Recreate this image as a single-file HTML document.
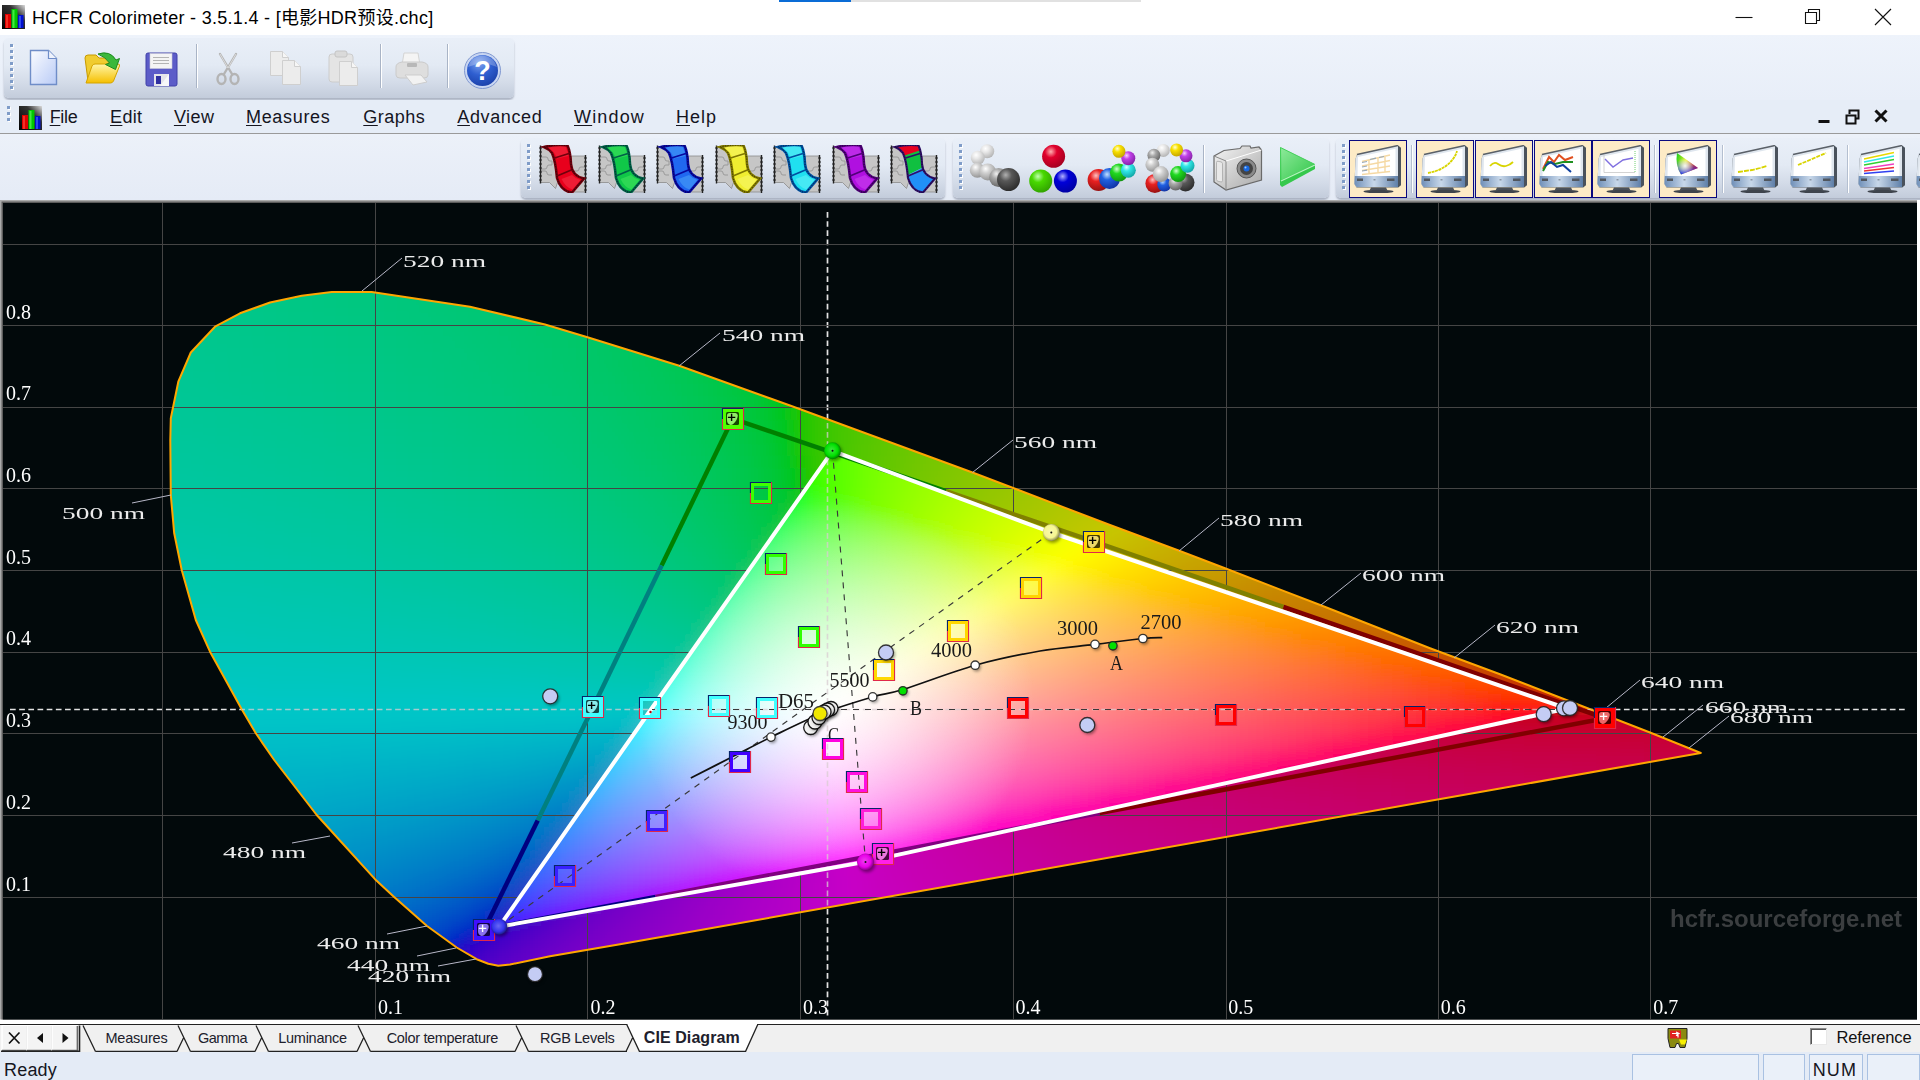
<!DOCTYPE html>
<html lang="en"><head><meta charset="utf-8"><title>HCFR Colorimeter</title>
<style>
html,body{margin:0;padding:0;width:1920px;height:1080px;overflow:hidden;background:#e6edf7;font-family:"Liberation Sans","Noto Sans CJK SC",sans-serif;color:#15151f}
#root{position:absolute;left:0;top:0;width:1920px;height:1080px;overflow:hidden;background:#e8eef8}
.abs{position:absolute}
.panel{border-radius:5px;background:linear-gradient(#e9eff8 0%,#e3eaf4 45%,#d3dbe8 75%,#c3ccdb 100%);box-shadow:0 2px 2px rgba(120,130,150,.55)}
.menu span{position:absolute;top:0;line-height:34px}
.menu u{text-decoration:underline;text-underline-offset:2px;text-decoration-thickness:1px}
.tabtxt{position:absolute;top:1029px;line-height:18px;font-family:"Liberation Sans",sans-serif;color:#20202c}
.selbtn{position:absolute;top:140px;width:56px;height:56px;border:1.5px solid #0a0a80;background:#fdebc6}
.pane{position:absolute;top:1054px;height:30px;border:1px solid #a9c1e2;border-bottom:none;box-sizing:border-box;background:#eaf0f9}
</style></head><body><div id="root">
<div class="abs" style="left:0;top:0;width:1920px;height:35px;background:#fff"></div>
<div class="abs" style="left:779px;top:0;width:72px;height:2px;background:#0a6cd6"></div><div class="abs" style="left:851px;top:0;width:290px;height:2px;background:#e1e1e1"></div>
<svg class="abs" style="left:2px;top:5px" width="23" height="24" viewBox="0 0 23 24"><defs><linearGradient id="ai2" x1="0" y1="0" x2="1" y2="1"><stop offset="0" stop-color="#000"/><stop offset=".55" stop-color="#222"/><stop offset="1" stop-color="#bbb"/></linearGradient><linearGradient id="ai22" x1="1" y1="0" x2="0" y2="1"><stop offset="0" stop-color="#ddd"/><stop offset=".35" stop-color="#333"/><stop offset="1" stop-color="#000"/></linearGradient></defs><rect width="23" height="24" fill="url(#ai22)"/><rect x="3" y="9" width="6" height="14" fill="#e00000"/><rect x="4" y="10" width="2" height="13" fill="#ff5040" fill-opacity=".6"/><rect x="9.5" y="4" width="6" height="19" fill="#00c800"/><rect x="10.5" y="5" width="2" height="18" fill="#70ff70" fill-opacity=".6"/><rect x="16" y="10" width="5.5" height="13" fill="#0010d0"/><rect x="17" y="11" width="2" height="12" fill="#5070ff" fill-opacity=".6"/></svg>
<div class="abs" style="left:32px;top:4px;line-height:28px;color:#000"><span id="title" style="font-size:18px;font-weight:400;letter-spacing:0.296px;white-space:nowrap;">HCFR Colorimeter - 3.5.1.4 - [电影HDR预设.chc]</span></div>
<svg class="abs" style="left:1700px;top:0" width="220" height="35" viewBox="0 0 220 35"><g stroke="#111" stroke-width="1.1" fill="none"><path d="M35.500 17.5h17"/><path d="M105.500 12.500h11v11h-11zM108.500 12.500v-3h11v11h-3" /><path d="M175 9l16 16M191 9l-16 16"/></g></svg>
<div class="abs" style="left:0;top:35px;width:1920px;height:65px;background:linear-gradient(#eef3fb,#e8eef8)"></div>
<div class="abs panel" style="left:4px;top:38px;width:510px;height:60px"></div>
<svg class="abs" style="left:9px;top:44px" width="6" height="48"><rect x="2" y="1" width="3" height="3" fill="#fff"/><rect x="1" y="0" width="3" height="3" fill="#7f9cc8"/><rect x="2" y="7" width="3" height="3" fill="#fff"/><rect x="1" y="6" width="3" height="3" fill="#7f9cc8"/><rect x="2" y="13" width="3" height="3" fill="#fff"/><rect x="1" y="12" width="3" height="3" fill="#7f9cc8"/><rect x="2" y="19" width="3" height="3" fill="#fff"/><rect x="1" y="18" width="3" height="3" fill="#7f9cc8"/><rect x="2" y="25" width="3" height="3" fill="#fff"/><rect x="1" y="24" width="3" height="3" fill="#7f9cc8"/><rect x="2" y="31" width="3" height="3" fill="#fff"/><rect x="1" y="30" width="3" height="3" fill="#7f9cc8"/><rect x="2" y="37" width="3" height="3" fill="#fff"/><rect x="1" y="36" width="3" height="3" fill="#7f9cc8"/><rect x="2" y="43" width="3" height="3" fill="#fff"/><rect x="1" y="42" width="3" height="3" fill="#7f9cc8"/></svg>
<svg class="abs" style="left:29px;top:49px" width="30" height="37" viewBox="0 0 30 37"><defs><linearGradient id="nd" x1="0" y1="0" x2="1" y2="1"><stop offset="0" stop-color="#fbfcff"/><stop offset="1" stop-color="#b9cbf6"/></linearGradient></defs><path d="M1.500 1.500h18l8 8v26h-26z" fill="url(#nd)" stroke="#6f8dc8" stroke-width="1.4"/><path d="M19.500 1.500v8h8" fill="#eef2fc" stroke="#6f8dc8" stroke-width="1.2"/></svg>
<svg class="abs" style="left:83px;top:50px" width="38" height="36" viewBox="0 0 38 36"><defs><linearGradient id="fo" x1="0" y1="0" x2="0" y2="1"><stop offset="0" stop-color="#fff6a8"/><stop offset="1" stop-color="#f5bf00"/></linearGradient></defs><path d="M2 8q0 -3 3 -3h8l3 3h13q2 0 2 3v6l-26 14z" fill="#f0cc30" stroke="#c79a00" stroke-width="1"/><path d="M3 33l6 -17q1 -2 3 -2h23q2 0 1.500 2l-6 15q-1 2 -3 2z" fill="url(#fo)" stroke="#d4a400" stroke-width="1"/><path d="M15 4q12 -4 18 6l3.500 -1.500l-4 11l-10 -5l4 -1.500q-4 -6 -11.500 -9z" fill="#3bb83b" stroke="#1e8a1e" stroke-width="1"/></svg>
<svg class="abs" style="left:145px;top:52px" width="33" height="35" viewBox="0 0 33 35"><path d="M1 3q0 -2 2 -2h27q2 0 2 2v29q0 2 -2 2h-27q-2 0 -2 -2z" fill="#5c5cc8" stroke="#4040a8" stroke-width="1"/><rect x="5" y="1.500" width="22" height="15" fill="#f4f4f4" stroke="#c8c8d8" stroke-width=".6"/><path d="M8 5.500h16M8 8.500h16M8 11.500h16" stroke="#b4b4b4" stroke-width="1"/><rect x="9" y="22" width="15" height="12" fill="#e4e4ea"/><rect x="11" y="24" width="5" height="8" fill="#3030a0"/><path d="M24 22l-9 12h9z" fill="#fff" fill-opacity=".7"/></svg>
<svg class="abs" style="left:214px;top:51px" width="28" height="36" viewBox="0 0 28 36"><g fill="none" stroke="#b4b4b4" stroke-width="2.4" stroke-linecap="round"><path d="M6 3l12 20M22 3l-12 20"/><ellipse cx="7.500" cy="28" rx="4" ry="5"/><ellipse cx="20.500" cy="28" rx="4" ry="5"/></g><path d="M6 3l8 14l8 -14" fill="none" stroke="#dcdcdc" stroke-width="1"/></svg>
<svg class="abs" style="left:269px;top:51px" width="34" height="36" viewBox="0 0 34 36"><g transform="translate(1,0)"><path d="M.5 .5h12l6 6v18h-18z" fill="#ececec" stroke="#cfcfcf"/><path d="M12.500 .5v6h6" fill="#f6f6f6" stroke="#cfcfcf"/></g><g transform="translate(13,9)"><path d="M.5 .5h12l6 6v18h-18z" fill="#ececec" stroke="#cfcfcf"/><path d="M12.500 .5v6h6" fill="#f6f6f6" stroke="#cfcfcf"/></g></svg>
<svg class="abs" style="left:328px;top:50px" width="32" height="37" viewBox="0 0 32 37"><rect x="1" y="4" width="24" height="28" rx="3" fill="#e4e4e4" stroke="#cccccc"/><rect x="7" y="1" width="12" height="6" rx="2" fill="#dadada" stroke="#c4c4c4"/><g transform="translate(11,11)"><path d="M.5 .5h12l6 6v18h-18z" fill="#ececec" stroke="#cfcfcf"/><path d="M12.500 .5v6h6" fill="#f6f6f6" stroke="#cfcfcf"/></g></svg>
<svg class="abs" style="left:393px;top:51px" width="38" height="36" viewBox="0 0 38 36"><path d="M11 2h14l2 12h-18z" fill="#f4f4f4" stroke="#d4d4d4"/><path d="M3 16q0 -4 6 -5h20q6 1 6 5v8q0 3 -4 3h-24q-4 0 -4 -3z" fill="#dedede" stroke="#cacaca"/><rect x="14" y="12" width="10" height="4" rx="1" fill="#b8b8b8"/><path d="M12 24h16l6 7l-14 3z" fill="#f2f2f2" stroke="#cdcdcd"/></svg>
<svg class="abs" style="left:463px;top:51px" width="40" height="40" viewBox="0 0 40 40"><defs><radialGradient id="hp" cx=".4" cy=".25" r=".8"><stop offset="0" stop-color="#7fa4f0"/><stop offset=".5" stop-color="#2f5fd0"/><stop offset="1" stop-color="#1a3fa8"/></radialGradient></defs><circle cx="19.500" cy="19.500" r="18" fill="#c9d6f2" stroke="#8098d0" stroke-width="1"/><circle cx="19.500" cy="19.500" r="15.500" fill="url(#hp)"/><path d="M5 16q3 -11 14.500 -11.500q11 .5 14.500 11.500q-14 -7 -29 0z" fill="#fff" fill-opacity=".25"/><text x="19.500" y="29" text-anchor="middle" font-family="Liberation Sans, sans-serif" font-weight="bold" font-size="27" fill="#fff">?</text></svg>
<div class="abs" style="left:196px;top:44px;width:1px;height:44px;background:#a9b4c6;box-shadow:1px 0 0 #fff"></div><div class="abs" style="left:380px;top:44px;width:1px;height:44px;background:#a9b4c6;box-shadow:1px 0 0 #fff"></div><div class="abs" style="left:447px;top:44px;width:1px;height:44px;background:#a9b4c6;box-shadow:1px 0 0 #fff"></div>
<div class="abs menu" style="left:0;top:100px;width:1920px;height:33px;background:#e6edf7;border-bottom:1px solid #9a9a9a">
<svg class="abs" style="left:6px;top:6px" width="6" height="20"><rect x="2" y="1" width="3" height="3" fill="#fff"/><rect x="1" y="0" width="3" height="3" fill="#7f9cc8"/><rect x="2" y="7" width="3" height="3" fill="#fff"/><rect x="1" y="6" width="3" height="3" fill="#7f9cc8"/><rect x="2" y="13" width="3" height="3" fill="#fff"/><rect x="1" y="12" width="3" height="3" fill="#7f9cc8"/></svg>
<span id="m0" style="left:49.7px;font-size:18px;letter-spacing:-0.354px;white-space:nowrap"><u>F</u>ile</span>
<span id="m1" style="left:110.0px;font-size:18px;letter-spacing:0.367px;white-space:nowrap"><u>E</u>dit</span>
<span id="m2" style="left:173.9px;font-size:18px;letter-spacing:0.449px;white-space:nowrap"><u>V</u>iew</span>
<span id="m3" style="left:246.0px;font-size:18px;letter-spacing:0.669px;white-space:nowrap"><u>M</u>easures</span>
<span id="m4" style="left:363.3px;font-size:18px;letter-spacing:0.509px;white-space:nowrap"><u>G</u>raphs</span>
<span id="m5" style="left:457.3px;font-size:18px;letter-spacing:0.615px;white-space:nowrap"><u>A</u>dvanced</span>
<span id="m6" style="left:574.0px;font-size:18px;letter-spacing:1.161px;white-space:nowrap"><u>W</u>indow</span>
<span id="m7" style="left:676.0px;font-size:18px;letter-spacing:0.992px;white-space:nowrap"><u>H</u>elp</span>
</div>
<svg class="abs" style="left:19px;top:106px" width="23" height="24" viewBox="0 0 23 24"><defs><linearGradient id="ai19" x1="0" y1="0" x2="1" y2="1"><stop offset="0" stop-color="#000"/><stop offset=".55" stop-color="#222"/><stop offset="1" stop-color="#bbb"/></linearGradient><linearGradient id="ai219" x1="1" y1="0" x2="0" y2="1"><stop offset="0" stop-color="#ddd"/><stop offset=".35" stop-color="#333"/><stop offset="1" stop-color="#000"/></linearGradient></defs><rect width="23" height="24" fill="url(#ai219)"/><rect x="3" y="9" width="6" height="14" fill="#e00000"/><rect x="4" y="10" width="2" height="13" fill="#ff5040" fill-opacity=".6"/><rect x="9.5" y="4" width="6" height="19" fill="#00c800"/><rect x="10.5" y="5" width="2" height="18" fill="#70ff70" fill-opacity=".6"/><rect x="16" y="10" width="5.5" height="13" fill="#0010d0"/><rect x="17" y="11" width="2" height="12" fill="#5070ff" fill-opacity=".6"/></svg>
<svg class="abs" style="left:1810px;top:104px" width="90" height="26" viewBox="0 0 90 26"><g fill="none" stroke="#111"><path d="M8.500 17.500h11" stroke-width="3"/><path d="M36.500 11.500h9v8h-9z" stroke-width="2"/><path d="M39.500 10v-3.500h9v8h-3" stroke-width="2"/><path d="M65.500 6.500l11 11M76.500 6.500l-11 11" stroke-width="3"/></g></svg>
<div class="abs" style="left:0;top:134px;width:1920px;height:66px;background:linear-gradient(#ecf1f9,#e5ebf6)"></div>
<div class="abs panel" style="left:521px;top:138px;width:424px;height:60px"></div><div class="abs panel" style="left:953px;top:138px;width:376px;height:60px"></div><div class="abs panel" style="left:1336px;top:138px;width:600px;height:60px"></div>
<svg class="abs" style="left:526px;top:144px" width="6" height="48"><rect x="2" y="1" width="3" height="3" fill="#fff"/><rect x="1" y="0" width="3" height="3" fill="#7f9cc8"/><rect x="2" y="7" width="3" height="3" fill="#fff"/><rect x="1" y="6" width="3" height="3" fill="#7f9cc8"/><rect x="2" y="13" width="3" height="3" fill="#fff"/><rect x="1" y="12" width="3" height="3" fill="#7f9cc8"/><rect x="2" y="19" width="3" height="3" fill="#fff"/><rect x="1" y="18" width="3" height="3" fill="#7f9cc8"/><rect x="2" y="25" width="3" height="3" fill="#fff"/><rect x="1" y="24" width="3" height="3" fill="#7f9cc8"/><rect x="2" y="31" width="3" height="3" fill="#fff"/><rect x="1" y="30" width="3" height="3" fill="#7f9cc8"/><rect x="2" y="37" width="3" height="3" fill="#fff"/><rect x="1" y="36" width="3" height="3" fill="#7f9cc8"/><rect x="2" y="43" width="3" height="3" fill="#fff"/><rect x="1" y="42" width="3" height="3" fill="#7f9cc8"/></svg><svg class="abs" style="left:958px;top:144px" width="6" height="48"><rect x="2" y="1" width="3" height="3" fill="#fff"/><rect x="1" y="0" width="3" height="3" fill="#7f9cc8"/><rect x="2" y="7" width="3" height="3" fill="#fff"/><rect x="1" y="6" width="3" height="3" fill="#7f9cc8"/><rect x="2" y="13" width="3" height="3" fill="#fff"/><rect x="1" y="12" width="3" height="3" fill="#7f9cc8"/><rect x="2" y="19" width="3" height="3" fill="#fff"/><rect x="1" y="18" width="3" height="3" fill="#7f9cc8"/><rect x="2" y="25" width="3" height="3" fill="#fff"/><rect x="1" y="24" width="3" height="3" fill="#7f9cc8"/><rect x="2" y="31" width="3" height="3" fill="#fff"/><rect x="1" y="30" width="3" height="3" fill="#7f9cc8"/><rect x="2" y="37" width="3" height="3" fill="#fff"/><rect x="1" y="36" width="3" height="3" fill="#7f9cc8"/><rect x="2" y="43" width="3" height="3" fill="#fff"/><rect x="1" y="42" width="3" height="3" fill="#7f9cc8"/></svg><svg class="abs" style="left:1341px;top:144px" width="6" height="48"><rect x="2" y="1" width="3" height="3" fill="#fff"/><rect x="1" y="0" width="3" height="3" fill="#7f9cc8"/><rect x="2" y="7" width="3" height="3" fill="#fff"/><rect x="1" y="6" width="3" height="3" fill="#7f9cc8"/><rect x="2" y="13" width="3" height="3" fill="#fff"/><rect x="1" y="12" width="3" height="3" fill="#7f9cc8"/><rect x="2" y="19" width="3" height="3" fill="#fff"/><rect x="1" y="18" width="3" height="3" fill="#7f9cc8"/><rect x="2" y="25" width="3" height="3" fill="#fff"/><rect x="1" y="24" width="3" height="3" fill="#7f9cc8"/><rect x="2" y="31" width="3" height="3" fill="#fff"/><rect x="1" y="30" width="3" height="3" fill="#7f9cc8"/><rect x="2" y="37" width="3" height="3" fill="#fff"/><rect x="1" y="36" width="3" height="3" fill="#7f9cc8"/><rect x="2" y="43" width="3" height="3" fill="#fff"/><rect x="1" y="42" width="3" height="3" fill="#7f9cc8"/></svg>
<svg width="0" height="0" style="position:absolute"><defs><radialGradient id="sp_wh" cx=".38" cy=".3" r=".75"><stop offset="0" stop-color="#ffffff"/><stop offset=".35" stop-color="#e8e8e8"/><stop offset="1" stop-color="#b0b0b0"/></radialGradient><radialGradient id="sp_lg" cx=".38" cy=".3" r=".75"><stop offset="0" stop-color="#ffffff"/><stop offset=".35" stop-color="#d0d0d0"/><stop offset="1" stop-color="#909090"/></radialGradient><radialGradient id="sp_mg" cx=".38" cy=".3" r=".75"><stop offset="0" stop-color="#f0f0f0"/><stop offset=".35" stop-color="#a8a8a8"/><stop offset="1" stop-color="#606060"/></radialGradient><radialGradient id="sp_dg" cx=".38" cy=".3" r=".75"><stop offset="0" stop-color="#b0b0b0"/><stop offset=".35" stop-color="#585858"/><stop offset="1" stop-color="#282828"/></radialGradient><radialGradient id="sp_r" cx=".38" cy=".3" r=".75"><stop offset="0" stop-color="#ffb0b0"/><stop offset=".35" stop-color="#e0002c"/><stop offset="1" stop-color="#a00020"/></radialGradient><radialGradient id="sp_g" cx=".38" cy=".3" r=".75"><stop offset="0" stop-color="#c0ffb0"/><stop offset=".35" stop-color="#48d800"/><stop offset="1" stop-color="#30a000"/></radialGradient><radialGradient id="sp_b" cx=".38" cy=".3" r=".75"><stop offset="0" stop-color="#b0b0ff"/><stop offset=".35" stop-color="#0000d8"/><stop offset="1" stop-color="#0000a0"/></radialGradient><radialGradient id="sp_r2" cx=".38" cy=".3" r=".75"><stop offset="0" stop-color="#ffc0c0"/><stop offset=".35" stop-color="#e82020"/><stop offset="1" stop-color="#901010"/></radialGradient><radialGradient id="sp_b2" cx=".38" cy=".3" r=".75"><stop offset="0" stop-color="#c0e0ff"/><stop offset=".35" stop-color="#2060e0"/><stop offset="1" stop-color="#1030a0"/></radialGradient><radialGradient id="sp_g2" cx=".38" cy=".3" r=".75"><stop offset="0" stop-color="#d0ffd0"/><stop offset=".35" stop-color="#20d820"/><stop offset="1" stop-color="#109010"/></radialGradient><radialGradient id="sp_c" cx=".38" cy=".3" r=".75"><stop offset="0" stop-color="#e0ffff"/><stop offset=".35" stop-color="#30e8e8"/><stop offset="1" stop-color="#10a0a0"/></radialGradient><radialGradient id="sp_p" cx=".38" cy=".3" r=".75"><stop offset="0" stop-color="#f8d0ff"/><stop offset=".35" stop-color="#c040e8"/><stop offset="1" stop-color="#8020a0"/></radialGradient><radialGradient id="sp_y" cx=".38" cy=".3" r=".75"><stop offset="0" stop-color="#ffffd0"/><stop offset=".35" stop-color="#f8e000"/><stop offset="1" stop-color="#c0a000"/></radialGradient></defs></svg>
<svg width="0" height="0" style="position:absolute"><defs><linearGradient id="mb" x1="0" y1="0" x2="1" y2="0"><stop offset="0" stop-color="#6f8fb8"/><stop offset=".45" stop-color="#c8d8ea"/><stop offset="1" stop-color="#5f7fa8"/></linearGradient></defs></svg>
<svg class="abs" style="left:539px;top:144.5px" width="48" height="48" viewBox="0 0 48 48"><g><path d="M1.500 1.500v36h9l6 6l2 -6l-2 -34z" fill="#c6c6c6" stroke="#8a8a8a" stroke-width=".8"/><path d="M46.500 11v36h-12l-4 -12l2 -24z" fill="#c6c6c6" stroke="#8a8a8a" stroke-width=".8"/><path d="M2 12h5q2 0 2 2t2 2h2v4h-3q-2 0 -2 2t-2 2h-4M2 26h4q2 0 2 2t2 2h3" fill="none" stroke="#9a9a9a" stroke-width="1"/><path d="M46 22h-4q-2 0 -2 2t-2 2h-3M46 34h-5" fill="none" stroke="#9a9a9a" stroke-width="1"/><path d="M1.500 .5v38M46.500 10v38" stroke="#222" stroke-width="1.4"/><path d="M0 3h3M0 7h3M0 11h3M0 15h3M0 19h3M0 23h3M0 27h3M0 31h3M0 35h3M45 13h3M45 17h3M45 21h3M45 25h3M45 29h3M45 33h3M45 37h3M45 41h3M45 45h3" stroke="#222" stroke-width="1"/><path d="M5 2Q18 -1 28.500 .5Q31.500 7 32 19Q33 31 45 33.500L33 47.500Q22 46.500 18 33Q16.500 16 13 8Q10 4 5 2z" fill="#e8001c" stroke="#70000c" stroke-width="2.600"/><path d="M9 2.500Q18 .5 26.500 1.500Q29 7 29.500 11L18 13.500Q16 7 9 2.500z" fill="#ff6070" fill-opacity=".28"/><path d="M22.500 34L33 30Q37 34 41.500 35L33.500 44.500Q27 43 22.500 34z" fill="#ff6070" fill-opacity=".3"/><path d="M15.500 13L30 8.500M18 31L33.500 24.500" stroke="#70000c" stroke-width="1.800" fill="none"/><path d="M5 2Q18 -1 28.500 .5Q31.500 7 32 19Q33 31 45 33.500L33 47.500Q22 46.500 18 33Q16.500 16 13 8Q10 4 5 2z" fill="none" stroke="#000" stroke-width="1" stroke-dasharray="1 1.500" stroke-opacity=".6" transform="translate(0,0)"/></g></svg>
<svg class="abs" style="left:597.5px;top:144.5px" width="48" height="48" viewBox="0 0 48 48"><g><path d="M1.500 1.500v36h9l6 6l2 -6l-2 -34z" fill="#c6c6c6" stroke="#8a8a8a" stroke-width=".8"/><path d="M46.500 11v36h-12l-4 -12l2 -24z" fill="#c6c6c6" stroke="#8a8a8a" stroke-width=".8"/><path d="M2 12h5q2 0 2 2t2 2h2v4h-3q-2 0 -2 2t-2 2h-4M2 26h4q2 0 2 2t2 2h3" fill="none" stroke="#9a9a9a" stroke-width="1"/><path d="M46 22h-4q-2 0 -2 2t-2 2h-3M46 34h-5" fill="none" stroke="#9a9a9a" stroke-width="1"/><path d="M1.500 .5v38M46.500 10v38" stroke="#222" stroke-width="1.4"/><path d="M0 3h3M0 7h3M0 11h3M0 15h3M0 19h3M0 23h3M0 27h3M0 31h3M0 35h3M45 13h3M45 17h3M45 21h3M45 25h3M45 29h3M45 33h3M45 37h3M45 41h3M45 45h3" stroke="#222" stroke-width="1"/><path d="M5 2Q18 -1 28.500 .5Q31.500 7 32 19Q33 31 45 33.500L33 47.500Q22 46.500 18 33Q16.500 16 13 8Q10 4 5 2z" fill="#10c848" stroke="#006048" stroke-width="2.600"/><path d="M9 2.500Q18 .5 26.500 1.500Q29 7 29.500 11L18 13.500Q16 7 9 2.500z" fill="#70ff70" fill-opacity=".28"/><path d="M22.500 34L33 30Q37 34 41.500 35L33.500 44.500Q27 43 22.500 34z" fill="#70ff70" fill-opacity=".3"/><path d="M15.500 13L30 8.500M18 31L33.500 24.500" stroke="#006048" stroke-width="1.800" fill="none"/><path d="M5 2Q18 -1 28.500 .5Q31.500 7 32 19Q33 31 45 33.500L33 47.500Q22 46.500 18 33Q16.500 16 13 8Q10 4 5 2z" fill="none" stroke="#000" stroke-width="1" stroke-dasharray="1 1.500" stroke-opacity=".6" transform="translate(0,0)"/></g></svg>
<svg class="abs" style="left:656px;top:144.5px" width="48" height="48" viewBox="0 0 48 48"><g><path d="M1.500 1.500v36h9l6 6l2 -6l-2 -34z" fill="#c6c6c6" stroke="#8a8a8a" stroke-width=".8"/><path d="M46.500 11v36h-12l-4 -12l2 -24z" fill="#c6c6c6" stroke="#8a8a8a" stroke-width=".8"/><path d="M2 12h5q2 0 2 2t2 2h2v4h-3q-2 0 -2 2t-2 2h-4M2 26h4q2 0 2 2t2 2h3" fill="none" stroke="#9a9a9a" stroke-width="1"/><path d="M46 22h-4q-2 0 -2 2t-2 2h-3M46 34h-5" fill="none" stroke="#9a9a9a" stroke-width="1"/><path d="M1.500 .5v38M46.500 10v38" stroke="#222" stroke-width="1.4"/><path d="M0 3h3M0 7h3M0 11h3M0 15h3M0 19h3M0 23h3M0 27h3M0 31h3M0 35h3M45 13h3M45 17h3M45 21h3M45 25h3M45 29h3M45 33h3M45 37h3M45 41h3M45 45h3" stroke="#222" stroke-width="1"/><path d="M5 2Q18 -1 28.500 .5Q31.500 7 32 19Q33 31 45 33.500L33 47.500Q22 46.500 18 33Q16.500 16 13 8Q10 4 5 2z" fill="#2068f0" stroke="#0808a0" stroke-width="2.600"/><path d="M9 2.500Q18 .5 26.500 1.500Q29 7 29.500 11L18 13.500Q16 7 9 2.500z" fill="#70d8ff" fill-opacity=".28"/><path d="M22.500 34L33 30Q37 34 41.500 35L33.500 44.500Q27 43 22.500 34z" fill="#70d8ff" fill-opacity=".3"/><path d="M15.500 13L30 8.500M18 31L33.500 24.500" stroke="#0808a0" stroke-width="1.800" fill="none"/><path d="M5 2Q18 -1 28.500 .5Q31.500 7 32 19Q33 31 45 33.500L33 47.500Q22 46.500 18 33Q16.500 16 13 8Q10 4 5 2z" fill="none" stroke="#000" stroke-width="1" stroke-dasharray="1 1.500" stroke-opacity=".6" transform="translate(0,0)"/></g></svg>
<svg class="abs" style="left:714.5px;top:144.5px" width="48" height="48" viewBox="0 0 48 48"><g><path d="M1.500 1.500v36h9l6 6l2 -6l-2 -34z" fill="#c6c6c6" stroke="#8a8a8a" stroke-width=".8"/><path d="M46.500 11v36h-12l-4 -12l2 -24z" fill="#c6c6c6" stroke="#8a8a8a" stroke-width=".8"/><path d="M2 12h5q2 0 2 2t2 2h2v4h-3q-2 0 -2 2t-2 2h-4M2 26h4q2 0 2 2t2 2h3" fill="none" stroke="#9a9a9a" stroke-width="1"/><path d="M46 22h-4q-2 0 -2 2t-2 2h-3M46 34h-5" fill="none" stroke="#9a9a9a" stroke-width="1"/><path d="M1.500 .5v38M46.500 10v38" stroke="#222" stroke-width="1.4"/><path d="M0 3h3M0 7h3M0 11h3M0 15h3M0 19h3M0 23h3M0 27h3M0 31h3M0 35h3M45 13h3M45 17h3M45 21h3M45 25h3M45 29h3M45 33h3M45 37h3M45 41h3M45 45h3" stroke="#222" stroke-width="1"/><path d="M5 2Q18 -1 28.500 .5Q31.500 7 32 19Q33 31 45 33.500L33 47.500Q22 46.500 18 33Q16.500 16 13 8Q10 4 5 2z" fill="#f0ee30" stroke="#807800" stroke-width="2.600"/><path d="M9 2.500Q18 .5 26.500 1.500Q29 7 29.500 11L18 13.500Q16 7 9 2.500z" fill="#ffffa0" fill-opacity=".28"/><path d="M22.500 34L33 30Q37 34 41.500 35L33.500 44.500Q27 43 22.500 34z" fill="#ffffa0" fill-opacity=".3"/><path d="M15.500 13L30 8.500M18 31L33.500 24.500" stroke="#807800" stroke-width="1.800" fill="none"/><path d="M5 2Q18 -1 28.500 .5Q31.500 7 32 19Q33 31 45 33.500L33 47.500Q22 46.500 18 33Q16.500 16 13 8Q10 4 5 2z" fill="none" stroke="#000" stroke-width="1" stroke-dasharray="1 1.500" stroke-opacity=".6" transform="translate(0,0)"/></g></svg>
<svg class="abs" style="left:773px;top:144.5px" width="48" height="48" viewBox="0 0 48 48"><g><path d="M1.500 1.500v36h9l6 6l2 -6l-2 -34z" fill="#c6c6c6" stroke="#8a8a8a" stroke-width=".8"/><path d="M46.500 11v36h-12l-4 -12l2 -24z" fill="#c6c6c6" stroke="#8a8a8a" stroke-width=".8"/><path d="M2 12h5q2 0 2 2t2 2h2v4h-3q-2 0 -2 2t-2 2h-4M2 26h4q2 0 2 2t2 2h3" fill="none" stroke="#9a9a9a" stroke-width="1"/><path d="M46 22h-4q-2 0 -2 2t-2 2h-3M46 34h-5" fill="none" stroke="#9a9a9a" stroke-width="1"/><path d="M1.500 .5v38M46.500 10v38" stroke="#222" stroke-width="1.4"/><path d="M0 3h3M0 7h3M0 11h3M0 15h3M0 19h3M0 23h3M0 27h3M0 31h3M0 35h3M45 13h3M45 17h3M45 21h3M45 25h3M45 29h3M45 33h3M45 37h3M45 41h3M45 45h3" stroke="#222" stroke-width="1"/><path d="M5 2Q18 -1 28.500 .5Q31.500 7 32 19Q33 31 45 33.500L33 47.500Q22 46.500 18 33Q16.500 16 13 8Q10 4 5 2z" fill="#20e0f0" stroke="#0050a0" stroke-width="2.600"/><path d="M9 2.500Q18 .5 26.500 1.500Q29 7 29.500 11L18 13.500Q16 7 9 2.500z" fill="#a0ffff" fill-opacity=".28"/><path d="M22.500 34L33 30Q37 34 41.500 35L33.500 44.500Q27 43 22.500 34z" fill="#a0ffff" fill-opacity=".3"/><path d="M15.500 13L30 8.500M18 31L33.500 24.500" stroke="#0050a0" stroke-width="1.800" fill="none"/><path d="M5 2Q18 -1 28.500 .5Q31.500 7 32 19Q33 31 45 33.500L33 47.500Q22 46.500 18 33Q16.500 16 13 8Q10 4 5 2z" fill="none" stroke="#000" stroke-width="1" stroke-dasharray="1 1.500" stroke-opacity=".6" transform="translate(0,0)"/></g></svg>
<svg class="abs" style="left:831.5px;top:144.5px" width="48" height="48" viewBox="0 0 48 48"><g><path d="M1.500 1.500v36h9l6 6l2 -6l-2 -34z" fill="#c6c6c6" stroke="#8a8a8a" stroke-width=".8"/><path d="M46.500 11v36h-12l-4 -12l2 -24z" fill="#c6c6c6" stroke="#8a8a8a" stroke-width=".8"/><path d="M2 12h5q2 0 2 2t2 2h2v4h-3q-2 0 -2 2t-2 2h-4M2 26h4q2 0 2 2t2 2h3" fill="none" stroke="#9a9a9a" stroke-width="1"/><path d="M46 22h-4q-2 0 -2 2t-2 2h-3M46 34h-5" fill="none" stroke="#9a9a9a" stroke-width="1"/><path d="M1.500 .5v38M46.500 10v38" stroke="#222" stroke-width="1.4"/><path d="M0 3h3M0 7h3M0 11h3M0 15h3M0 19h3M0 23h3M0 27h3M0 31h3M0 35h3M45 13h3M45 17h3M45 21h3M45 25h3M45 29h3M45 33h3M45 37h3M45 41h3M45 45h3" stroke="#222" stroke-width="1"/><path d="M5 2Q18 -1 28.500 .5Q31.500 7 32 19Q33 31 45 33.500L33 47.500Q22 46.500 18 33Q16.500 16 13 8Q10 4 5 2z" fill="#b010e0" stroke="#50007a" stroke-width="2.600"/><path d="M9 2.500Q18 .5 26.500 1.500Q29 7 29.500 11L18 13.500Q16 7 9 2.500z" fill="#e070ff" fill-opacity=".28"/><path d="M22.500 34L33 30Q37 34 41.500 35L33.500 44.500Q27 43 22.500 34z" fill="#e070ff" fill-opacity=".3"/><path d="M15.500 13L30 8.500M18 31L33.500 24.500" stroke="#50007a" stroke-width="1.800" fill="none"/><path d="M5 2Q18 -1 28.500 .5Q31.500 7 32 19Q33 31 45 33.500L33 47.500Q22 46.500 18 33Q16.500 16 13 8Q10 4 5 2z" fill="none" stroke="#000" stroke-width="1" stroke-dasharray="1 1.500" stroke-opacity=".6" transform="translate(0,0)"/></g></svg>
<svg class="abs" style="left:890px;top:144.5px" width="48" height="48" viewBox="0 0 48 48"><g><path d="M1.500 1.500v36h9l6 6l2 -6l-2 -34z" fill="#c6c6c6" stroke="#8a8a8a" stroke-width=".8"/><path d="M46.500 11v36h-12l-4 -12l2 -24z" fill="#c6c6c6" stroke="#8a8a8a" stroke-width=".8"/><path d="M2 12h5q2 0 2 2t2 2h2v4h-3q-2 0 -2 2t-2 2h-4M2 26h4q2 0 2 2t2 2h3" fill="none" stroke="#9a9a9a" stroke-width="1"/><path d="M46 22h-4q-2 0 -2 2t-2 2h-3M46 34h-5" fill="none" stroke="#9a9a9a" stroke-width="1"/><path d="M1.500 .5v38M46.500 10v38" stroke="#222" stroke-width="1.4"/><path d="M0 3h3M0 7h3M0 11h3M0 15h3M0 19h3M0 23h3M0 27h3M0 31h3M0 35h3M45 13h3M45 17h3M45 21h3M45 25h3M45 29h3M45 33h3M45 37h3M45 41h3M45 45h3" stroke="#222" stroke-width="1"/><clipPath id="fm890"><path d="M5 2Q18 -1 28.500 .5Q31.500 7 32 19Q33 31 45 33.500L33 47.500Q22 46.500 18 33Q16.500 16 13 8Q10 4 5 2z"/></clipPath><g clip-path="url(#fm890)"><rect x="0" y="-2" width="48" height="14" fill="#e80020"/><path d="M10 12l24 -8v18l-20 10z" fill="#10c040"/><path d="M14 32l20 -10l14 8l-14 20l-16 -4z" fill="#2090f8"/></g><path d="M5 2Q18 -1 28.500 .5Q31.500 7 32 19Q33 31 45 33.500L33 47.500Q22 46.500 18 33Q16.500 16 13 8Q10 4 5 2z" fill="none" stroke="#30106a" stroke-width="2.200"/><path d="M15.500 13L30 8.500M18 31L33.500 24.500" stroke="#30106a" stroke-width="1.800" fill="none"/><path d="M5 2Q18 -1 28.500 .5Q31.500 7 32 19Q33 31 45 33.500L33 47.500Q22 46.500 18 33Q16.500 16 13 8Q10 4 5 2z" fill="none" stroke="#000" stroke-width="1" stroke-dasharray="1 1.500" stroke-opacity=".6" transform="translate(0,0)"/></g></svg>
<svg class="abs" style="left:960px;top:140px" width="62" height="56" viewBox="0 0 62 56"><circle cx="27.2" cy="11.3" r="7.0" fill="url(#sp_wh)"/><circle cx="17.8" cy="17.8" r="7.0" fill="url(#sp_wh)"/><circle cx="17.3" cy="30.2" r="7.5" fill="url(#sp_lg)"/><circle cx="27.7" cy="32.1" r="8.5" fill="url(#sp_lg)"/><circle cx="38.6" cy="37.6" r="9.5" fill="url(#sp_mg)"/><circle cx="48.5" cy="39.6" r="11.5" fill="url(#sp_dg)"/></svg>
<svg class="abs" style="left:1024px;top:140px" width="58" height="56" viewBox="0 0 58 56"><circle cx="29.6" cy="16.3" r="11.5" fill="url(#sp_r)"/><circle cx="16.7" cy="41.0" r="11.5" fill="url(#sp_g)"/><circle cx="41.4" cy="41.0" r="11.5" fill="url(#sp_b)"/></svg>
<svg class="abs" style="left:1084px;top:140px" width="56" height="56" viewBox="0 0 56 56"><circle cx="14.6" cy="40.0" r="11.0" fill="url(#sp_r2)"/><circle cx="25.5" cy="38.6" r="10.5" fill="url(#sp_b2)"/><circle cx="34.9" cy="32.6" r="9.0" fill="url(#sp_g2)"/><circle cx="44.3" cy="30.2" r="7.5" fill="url(#sp_c)"/><circle cx="44.3" cy="18.3" r="7.0" fill="url(#sp_p)"/><circle cx="34.9" cy="11.3" r="6.5" fill="url(#sp_y)"/></svg>
<svg class="abs" style="left:1142px;top:140px" width="58" height="56" viewBox="0 0 58 56"><circle cx="12.9" cy="43.5" r="9.5" fill="url(#sp_r2)"/><circle cx="22.3" cy="44.5" r="7.0" fill="url(#sp_b2)"/><circle cx="43.5" cy="42.5" r="9.0" fill="url(#sp_dg)"/><circle cx="33.6" cy="43.5" r="7.0" fill="url(#sp_mg)"/><circle cx="36.1" cy="34.1" r="8.0" fill="url(#sp_g2)"/><circle cx="45.5" cy="25.7" r="7.0" fill="url(#sp_c)"/><circle cx="44.0" cy="15.8" r="6.5" fill="url(#sp_p)"/><circle cx="34.6" cy="9.9" r="6.5" fill="url(#sp_y)"/><circle cx="21.3" cy="10.4" r="6.5" fill="url(#sp_wh)"/><circle cx="11.9" cy="15.3" r="6.5" fill="url(#sp_mg)"/><circle cx="10.4" cy="24.7" r="7.0" fill="url(#sp_lg)"/><circle cx="18.8" cy="34.1" r="8.0" fill="url(#sp_lg)"/></svg>
<div class="abs" style="left:1203px;top:145px;width:1px;height:48px;background:#a9b4c6;box-shadow:1px 0 0 #fff"></div>
<svg class="abs" style="left:1212px;top:144px" width="52" height="48" viewBox="0 0 52 48"><defs><linearGradient id="cm" x1="0" y1="0" x2="1" y2="1"><stop offset="0" stop-color="#f4f4f4"/><stop offset="1" stop-color="#a8a8a8"/></linearGradient></defs><path d="M2 12L12 6.500L28 4.500L30 2H38L39 4L47 3L49.500 6V36L14 46L2 38z" fill="url(#cm)" stroke="#6a6a6a" stroke-width="1.200"/><path d="M2 12L14 17V46" fill="none" stroke="#8a8a8a" stroke-width="1"/><path d="M14 17L49.500 6" fill="none" stroke="#fff" stroke-width="1"/><rect x="4.500" y="18" width="6" height="20" rx="1.500" fill="#e8e8e8" stroke="#aaa" stroke-width=".8" transform="skewY(12) translate(0,-2)"/><circle cx="34.500" cy="24.500" r="9.500" fill="#8a8a8a" stroke="#555" stroke-width="1"/><circle cx="34.500" cy="24.500" r="6.500" fill="#444"/><circle cx="34.500" cy="24.500" r="3" fill="#1868e0"/><circle cx="33.500" cy="23.500" r="1" fill="#9cf"/></svg>
<svg class="abs" style="left:1278px;top:145px" width="40" height="44" viewBox="0 0 40 44"><defs><linearGradient id="pl" x1="0" y1="0" x2="1" y2="1"><stop offset="0" stop-color="#8eea9a"/><stop offset="1" stop-color="#2fc548"/></linearGradient></defs><path d="M2 2.500L37 19.500L37 24L4 42L2 40z" fill="#35c84c"/><path d="M2.500 2.500L37 19.500L3 35.500z" fill="url(#pl)" stroke="#46d05c" stroke-width="1"/><path d="M3 36L37 20" stroke="#b8f4c0" stroke-width="1.200" fill="none"/></svg>
<div class="selbtn" style="left:1348.5px"></div>
<div class="selbtn" style="left:1416px"></div>
<div class="selbtn" style="left:1474.5px"></div>
<div class="selbtn" style="left:1533.5px"></div>
<div class="selbtn" style="left:1592px"></div>
<div class="selbtn" style="left:1659px"></div>
<div class="abs" style="left:1411px;top:145px;width:1px;height:48px;background:#b4bfd0;box-shadow:1px 0 0 #fff"></div>
<div class="abs" style="left:1654px;top:145px;width:1px;height:48px;background:#b4bfd0;box-shadow:1px 0 0 #fff"></div>
<div class="abs" style="left:1721.5px;top:145px;width:1px;height:48px;background:#b4bfd0;box-shadow:1px 0 0 #fff"></div>
<div class="abs" style="left:1847px;top:145px;width:1px;height:48px;background:#b4bfd0;box-shadow:1px 0 0 #fff"></div>
<svg class="abs" style="left:1353.5px;top:144.5px" width="48" height="48" viewBox="0 0 48 48"><path d="M3 9.500L44 .5L47 3V40L44 42.500H2.500L.5 39L1.500 14z" fill="#5d6670"/><path d="M3 9.500L44 .5V42H2.500L.5 39L1.500 14z" fill="#dfe6ee"/><path d="M44 .5L47 3V40L44 42.500z" fill="#4a525c"/><path d="M3 9.500L44 .5" stroke="#5a6068" stroke-width="1.500" fill="none"/><path d="M4 12L41.500 3.800V31H3.500z" fill="#fff"/><path d="M.8 31H44V42H2.500L.5 39z" fill="url(#mb)"/><rect x="3" y="33.500" width="6" height="2.500" fill="#50565e"/><rect x="33" y="33.500" width="7.500" height="2.500" fill="#50565e"/><rect x="19.500" y="34" width="2" height="1.500" fill="#8a96a6"/><path d="M17 42.500h15l1.500 3h-18z" fill="#4c525a"/><ellipse cx="24.500" cy="46.500" rx="15" ry="1.700" fill="#3e444c"/><g stroke="#f5d9a4" stroke-width="1.400" fill="none"><path d="M8 16.500L36 10M8 21L36 15.500M8 25.500L36 21M8 29.500L36 26.500M15 14.500V29.500M24 12.500V28.500M31 11V27.500"/></g><path d="M8 17.500l5 -1M8 22l5 -1M8 26l5 -.8M16 14.500l6 -1.300M25 12.500l5 -1" stroke="#9ab" stroke-width="1.200"/></svg>
<svg class="abs" style="left:1421px;top:144.5px" width="48" height="48" viewBox="0 0 48 48"><path d="M3 9.500L44 .5L47 3V40L44 42.500H2.500L.5 39L1.500 14z" fill="#5d6670"/><path d="M3 9.500L44 .5V42H2.500L.5 39L1.500 14z" fill="#dfe6ee"/><path d="M44 .5L47 3V40L44 42.500z" fill="#4a525c"/><path d="M3 9.500L44 .5" stroke="#5a6068" stroke-width="1.500" fill="none"/><path d="M4 12L41.500 3.800V31H3.500z" fill="#fff"/><path d="M.8 31H44V42H2.500L.5 39z" fill="url(#mb)"/><rect x="3" y="33.500" width="6" height="2.500" fill="#50565e"/><rect x="33" y="33.500" width="7.500" height="2.500" fill="#50565e"/><rect x="19.500" y="34" width="2" height="1.500" fill="#8a96a6"/><path d="M17 42.500h15l1.500 3h-18z" fill="#4c525a"/><ellipse cx="24.500" cy="46.500" rx="15" ry="1.700" fill="#3e444c"/><path d="M7 28Q24 25 32 14Q35 10 36 6" fill="none" stroke="#d8d400" stroke-width="1.800" stroke-dasharray="3 .6"/></svg>
<svg class="abs" style="left:1479.5px;top:144.5px" width="48" height="48" viewBox="0 0 48 48"><path d="M3 9.500L44 .5L47 3V40L44 42.500H2.500L.5 39L1.500 14z" fill="#5d6670"/><path d="M3 9.500L44 .5V42H2.500L.5 39L1.500 14z" fill="#dfe6ee"/><path d="M44 .5L47 3V40L44 42.500z" fill="#4a525c"/><path d="M3 9.500L44 .5" stroke="#5a6068" stroke-width="1.500" fill="none"/><path d="M4 12L41.500 3.800V31H3.500z" fill="#fff"/><path d="M.8 31H44V42H2.500L.5 39z" fill="url(#mb)"/><rect x="3" y="33.500" width="6" height="2.500" fill="#50565e"/><rect x="33" y="33.500" width="7.500" height="2.500" fill="#50565e"/><rect x="19.500" y="34" width="2" height="1.500" fill="#8a96a6"/><path d="M17 42.500h15l1.500 3h-18z" fill="#4c525a"/><ellipse cx="24.500" cy="46.500" rx="15" ry="1.700" fill="#3e444c"/><path d="M10 21Q14 16 18 19T26 21T33 17" fill="none" stroke="#d8d400" stroke-width="1.800"/></svg>
<svg class="abs" style="left:1538.5px;top:144.5px" width="48" height="48" viewBox="0 0 48 48"><path d="M3 9.500L44 .5L47 3V40L44 42.500H2.500L.5 39L1.500 14z" fill="#5d6670"/><path d="M3 9.500L44 .5V42H2.500L.5 39L1.500 14z" fill="#dfe6ee"/><path d="M44 .5L47 3V40L44 42.500z" fill="#4a525c"/><path d="M3 9.500L44 .5" stroke="#5a6068" stroke-width="1.500" fill="none"/><path d="M4 12L41.500 3.800V31H3.500z" fill="#fff"/><path d="M.8 31H44V42H2.500L.5 39z" fill="url(#mb)"/><rect x="3" y="33.500" width="6" height="2.500" fill="#50565e"/><rect x="33" y="33.500" width="7.500" height="2.500" fill="#50565e"/><rect x="19.500" y="34" width="2" height="1.500" fill="#8a96a6"/><path d="M17 42.500h15l1.500 3h-18z" fill="#4c525a"/><ellipse cx="24.500" cy="46.500" rx="15" ry="1.700" fill="#3e444c"/><path d="M4 24L10 12L15 17L20 10L26 15L34 12" fill="none" stroke="#e05020" stroke-width="2"/><path d="M4 26L9 17L16 19L24 17L34 17" fill="none" stroke="#209020" stroke-width="2"/><path d="M6 21L12 17L18 22L24 20L32 27" fill="none" stroke="#1040a0" stroke-width="2"/></svg>
<svg class="abs" style="left:1597px;top:144.5px" width="48" height="48" viewBox="0 0 48 48"><path d="M3 9.500L44 .5L47 3V40L44 42.500H2.500L.5 39L1.500 14z" fill="#5d6670"/><path d="M3 9.500L44 .5V42H2.500L.5 39L1.500 14z" fill="#dfe6ee"/><path d="M44 .5L47 3V40L44 42.500z" fill="#4a525c"/><path d="M3 9.500L44 .5" stroke="#5a6068" stroke-width="1.500" fill="none"/><path d="M4 12L41.500 3.800V31H3.500z" fill="#fff"/><path d="M.8 31H44V42H2.500L.5 39z" fill="url(#mb)"/><rect x="3" y="33.500" width="6" height="2.500" fill="#50565e"/><rect x="33" y="33.500" width="7.500" height="2.500" fill="#50565e"/><rect x="19.500" y="34" width="2" height="1.500" fill="#8a96a6"/><path d="M17 42.500h15l1.500 3h-18z" fill="#4c525a"/><ellipse cx="24.500" cy="46.500" rx="15" ry="1.700" fill="#3e444c"/><path d="M7 10V27.500H38" fill="none" stroke="#c8c8c8" stroke-width=".8"/><path d="M8 14L16 22L26 15L36 13" fill="none" stroke="#8070e0" stroke-width="1.400"/><path d="M38 6V27" stroke="#70d070" stroke-width="1" stroke-dasharray="1 1"/></svg>
<svg class="abs" style="left:1664px;top:144.5px" width="48" height="48" viewBox="0 0 48 48"><path d="M3 9.500L44 .5L47 3V40L44 42.500H2.500L.5 39L1.500 14z" fill="#5d6670"/><path d="M3 9.500L44 .5V42H2.500L.5 39L1.500 14z" fill="#dfe6ee"/><path d="M44 .5L47 3V40L44 42.500z" fill="#4a525c"/><path d="M3 9.500L44 .5" stroke="#5a6068" stroke-width="1.500" fill="none"/><path d="M4 12L41.500 3.800V31H3.500z" fill="#fff"/><path d="M.8 31H44V42H2.500L.5 39z" fill="url(#mb)"/><rect x="3" y="33.500" width="6" height="2.500" fill="#50565e"/><rect x="33" y="33.500" width="7.500" height="2.500" fill="#50565e"/><rect x="19.500" y="34" width="2" height="1.500" fill="#8a96a6"/><path d="M17 42.500h15l1.500 3h-18z" fill="#4c525a"/><ellipse cx="24.500" cy="46.500" rx="15" ry="1.700" fill="#3e444c"/><defs><linearGradient id="cg1" x1="0" y1="0" x2="1" y2=".3"><stop offset="0" stop-color="#10d020"/><stop offset=".5" stop-color="#e8f020"/><stop offset="1" stop-color="#f01010"/></linearGradient><linearGradient id="cg2" x1="0" y1="0" x2="0" y2="1"><stop offset=".35" stop-color="#2030f0" stop-opacity="0"/><stop offset="1" stop-color="#2030f0"/></linearGradient><radialGradient id="cg3" cx=".4" cy=".6" r=".4"><stop offset="0" stop-color="#fff" stop-opacity=".9"/><stop offset="1" stop-color="#fff" stop-opacity="0"/></radialGradient></defs><path d="M13 8L34 23L17 29.500Q11 20 13 8z" fill="url(#cg1)"/><path d="M13 8L34 23L17 29.500Q11 20 13 8z" fill="url(#cg2)"/><path d="M13 8L34 23L17 29.500Q11 20 13 8z" fill="url(#cg3)"/></svg>
<svg class="abs" style="left:1731px;top:144.5px" width="48" height="48" viewBox="0 0 48 48"><path d="M3 9.500L44 .5L47 3V40L44 42.500H2.500L.5 39L1.500 14z" fill="#5d6670"/><path d="M3 9.500L44 .5V42H2.500L.5 39L1.500 14z" fill="#dfe6ee"/><path d="M44 .5L47 3V40L44 42.500z" fill="#4a525c"/><path d="M3 9.500L44 .5" stroke="#5a6068" stroke-width="1.500" fill="none"/><path d="M4 12L41.500 3.800V31H3.500z" fill="#fff"/><path d="M.8 31H44V42H2.500L.5 39z" fill="url(#mb)"/><rect x="3" y="33.500" width="6" height="2.500" fill="#50565e"/><rect x="33" y="33.500" width="7.500" height="2.500" fill="#50565e"/><rect x="19.500" y="34" width="2" height="1.500" fill="#8a96a6"/><path d="M17 42.500h15l1.500 3h-18z" fill="#4c525a"/><ellipse cx="24.500" cy="46.500" rx="15" ry="1.700" fill="#3e444c"/><path d="M7 27L14 26L21 25L29 23L36 21" fill="none" stroke="#d8d400" stroke-width="1.800" stroke-dasharray="5 1"/></svg>
<svg class="abs" style="left:1790px;top:144.5px" width="48" height="48" viewBox="0 0 48 48"><path d="M3 9.500L44 .5L47 3V40L44 42.500H2.500L.5 39L1.500 14z" fill="#5d6670"/><path d="M3 9.500L44 .5V42H2.500L.5 39L1.500 14z" fill="#dfe6ee"/><path d="M44 .5L47 3V40L44 42.500z" fill="#4a525c"/><path d="M3 9.500L44 .5" stroke="#5a6068" stroke-width="1.500" fill="none"/><path d="M4 12L41.500 3.800V31H3.500z" fill="#fff"/><path d="M.8 31H44V42H2.500L.5 39z" fill="url(#mb)"/><rect x="3" y="33.500" width="6" height="2.500" fill="#50565e"/><rect x="33" y="33.500" width="7.500" height="2.500" fill="#50565e"/><rect x="19.500" y="34" width="2" height="1.500" fill="#8a96a6"/><path d="M17 42.500h15l1.500 3h-18z" fill="#4c525a"/><ellipse cx="24.500" cy="46.500" rx="15" ry="1.700" fill="#3e444c"/><path d="M8 20L36 8" fill="none" stroke="#d8d400" stroke-width="1.800" stroke-dasharray="4 1"/></svg>
<svg class="abs" style="left:1857.5px;top:144.5px" width="48" height="48" viewBox="0 0 48 48"><path d="M3 9.500L44 .5L47 3V40L44 42.500H2.500L.5 39L1.500 14z" fill="#5d6670"/><path d="M3 9.500L44 .5V42H2.500L.5 39L1.500 14z" fill="#dfe6ee"/><path d="M44 .5L47 3V40L44 42.500z" fill="#4a525c"/><path d="M3 9.500L44 .5" stroke="#5a6068" stroke-width="1.500" fill="none"/><path d="M4 12L41.500 3.800V31H3.500z" fill="#fff"/><path d="M.8 31H44V42H2.500L.5 39z" fill="url(#mb)"/><rect x="3" y="33.500" width="6" height="2.500" fill="#50565e"/><rect x="33" y="33.500" width="7.500" height="2.500" fill="#50565e"/><rect x="19.500" y="34" width="2" height="1.500" fill="#8a96a6"/><path d="M17 42.500h15l1.500 3h-18z" fill="#4c525a"/><ellipse cx="24.500" cy="46.500" rx="15" ry="1.700" fill="#3e444c"/><g fill="none" stroke-width="1.300"><path d="M6 14L36 7.500" stroke="#e8d800"/><path d="M6 17L36 11" stroke="#30e8e8"/><path d="M6 20L36 14.500" stroke="#30d030"/><path d="M6 23.500L36 19" stroke="#f040c0"/><path d="M6 26L36 22.500" stroke="#f03030"/><path d="M6 28.500L36 26" stroke="#3040f0"/></g></svg>
<svg class="abs" style="left:1916px;top:144.5px" width="48" height="48" viewBox="0 0 48 48"><path d="M3 9.500L44 .5L47 3V40L44 42.500H2.500L.5 39L1.500 14z" fill="#5d6670"/><path d="M3 9.500L44 .5V42H2.500L.5 39L1.500 14z" fill="#dfe6ee"/><path d="M44 .5L47 3V40L44 42.500z" fill="#4a525c"/><path d="M3 9.500L44 .5" stroke="#5a6068" stroke-width="1.500" fill="none"/><path d="M4 12L41.500 3.800V31H3.500z" fill="#fff"/><path d="M.8 31H44V42H2.500L.5 39z" fill="url(#mb)"/><rect x="3" y="33.500" width="6" height="2.500" fill="#50565e"/><rect x="33" y="33.500" width="7.500" height="2.500" fill="#50565e"/><rect x="19.500" y="34" width="2" height="1.500" fill="#8a96a6"/><path d="M17 42.500h15l1.500 3h-18z" fill="#4c525a"/><ellipse cx="24.500" cy="46.500" rx="15" ry="1.700" fill="#3e444c"/></svg>
<div class="abs" style="left:0;top:1019px;width:1920px;height:5px;background:#fff"></div>
<div class="abs" style="left:0;top:1024px;width:1920px;height:28px;background:#f0f0f0;border-top:1px solid #222;box-sizing:border-box"></div>
<svg class="abs" style="left:0;top:1024px" width="1920" height="30" viewBox="0 0 1920 30"><rect x="2" y="1.500" width="25" height="25" fill="#f4f4f4" stroke="#fff"/><path d="M2 27V1.500H27" fill="none" stroke="#fff" stroke-width="1"/><path d="M27.3 2V26.500H2" fill="none" stroke="#6a6a6a" stroke-width="1.400"/><rect x="27" y="1.500" width="25" height="25" fill="#f4f4f4" stroke="#fff"/><path d="M27 27V1.500H52" fill="none" stroke="#fff" stroke-width="1"/><path d="M52.3 2V26.500H27" fill="none" stroke="#6a6a6a" stroke-width="1.400"/><rect x="52" y="1.500" width="25" height="25" fill="#f4f4f4" stroke="#fff"/><path d="M52 27V1.500H77" fill="none" stroke="#fff" stroke-width="1"/><path d="M77.3 2V26.500H52" fill="none" stroke="#6a6a6a" stroke-width="1.400"/><path d="M1 27.300H79.500V1.500" fill="none" stroke="#222" stroke-width="1.600"/><path d="M9 8.500l10.500 11M19.500 8.500l-10.500 11" stroke="#111" stroke-width="1.700" fill="none"/><path d="M43 9v10l-6 -5z" fill="#111"/><path d="M62.500 9v10l6 -5z" fill="#111"/><path d="M626.500 -1L639.500 27H745.500L758 -1z" fill="#fff"/><path d="M83 1.500L95.5 27.500M178 1.500L190.5 27.500M177 27.500L183.5 14M256 1.500L268.5 27.500M255 27.500L261.5 14M358 1.500L370.5 27.500M357 27.500L363.5 14M516 1.500L528.5 27.500M515 27.500L521.5 14M95.5 27.500H177M190.5 27.500H255M268.5 27.500H357M370.5 27.500H515M528.5 27.500H627M626.500 0L639.500 27.500H745.500L758 0M626 27.500L632.500 14" fill="none" stroke="#222" stroke-width="1.300"/><g transform="translate(1667,3.500)"><path d="M1 1h19v10l-2 9h-5l-1.500 -4h-2l-1.500 4h-5l-2 -9z" fill="#8a8a10" stroke="#222" stroke-width="1"/><rect x="3" y="3" width="11" height="8" fill="#e02020"/><path d="M5 6h6v4M9 4.500l3 1.500l-3 2" stroke="#fff" stroke-width="1.200" fill="none"/><path d="M12 12h8l-2 5h-4z" fill="#f8f000"/></g></svg>
<div class="tabtxt" style="left:105.4px"><span id="t0" style="font-size:14.5px;font-weight:400;letter-spacing:-0.196px;white-space:nowrap;">Measures</span></div>
<div class="tabtxt" style="left:197.9px"><span id="t1" style="font-size:14.5px;font-weight:400;letter-spacing:-0.496px;white-space:nowrap;">Gamma</span></div>
<div class="tabtxt" style="left:278.3px"><span id="t2" style="font-size:14.5px;font-weight:400;letter-spacing:-0.282px;white-space:nowrap;">Luminance</span></div>
<div class="tabtxt" style="left:386.7px"><span id="t3" style="font-size:14.5px;font-weight:400;letter-spacing:-0.327px;white-space:nowrap;">Color temperature</span></div>
<div class="tabtxt" style="left:540.0px"><span id="t4" style="font-size:14.5px;font-weight:400;letter-spacing:-0.278px;white-space:nowrap;">RGB Levels</span></div>
<div class="tabtxt" style="left:643.8px"><span id="t5" style="font-size:16px;font-weight:700;letter-spacing:0.078px;white-space:nowrap;">CIE Diagram</span></div>
<div class="abs" style="left:1810px;top:1028px;width:17px;height:17px;background:#fff;box-sizing:border-box;border:1px solid;border-color:#8a8a8a #e8e8e8 #e8e8e8 #8a8a8a;box-shadow:inset 1px 1px 0 #555"></div>
<div class="abs" style="left:1836.5px;top:1027px;line-height:20px;font-family:'Liberation Sans',sans-serif;color:#111"><span id="ref" style="font-size:16.5px;font-weight:400;letter-spacing:-0.127px;white-space:nowrap;">Reference</span></div>
<div class="abs" style="left:0;top:1052px;width:1920px;height:28px;background:#e4ebf6"></div>
<div class="abs" style="left:4px;top:1057px;line-height:26px;color:#16161e"><span id="ready" style="font-size:18px;font-weight:400;letter-spacing:0.194px;white-space:nowrap;">Ready</span></div>
<div class="pane" style="left:1632px;width:127px"></div>
<div class="pane" style="left:1763px;width:42px"></div>
<div class="pane" style="left:1809px;width:54px"></div>
<div class="pane" style="left:1867px;width:53px"></div>
<div class="abs" style="left:1812.700px;top:1057px;line-height:26px;color:#16161e"><span id="num" style="font-size:18px;font-weight:400;letter-spacing:1.100px;white-space:nowrap;">NUM</span></div>
<svg id="chart" width="1920" height="1080" viewBox="0 0 1920 1080" style="position:absolute;left:0;top:0">
<defs>
<clipPath id="cl"><polygon points="331.7,292.0 371.7,292.0 470.0,306.7 545.0,324.5 587.5,337.2 679.2,365.8 790.0,405.5 972.5,472.5 1110.0,525.0 1179.2,550.8 1225.0,568.3 1320.8,605.3 1430.0,648.3 1500.0,674.2 1650.0,732.5 1700.8,753.0 1500.0,788.4 620.0,944.2 550.0,956.2 510.0,964.6 498.3,965.8 488.3,963.7 476.7,959.2 456.7,947.5 426.7,925.8 393.3,896.3 375.0,879.2 316.7,815.0 274.2,760.0 255.8,733.3 241.7,709.2 210.0,651.7 195.8,620.0 181.7,570.0 174.2,533.3 170.8,495.0 170.3,440.0 170.8,418.3 178.3,381.7 190.8,352.5 215.0,326.7 240.0,313.3 270.0,302.5 301.7,295.8"/></clipPath>
<clipPath id="ch"><polygon points="1567.0,708.5 1051.3,532.5 832.5,450.8 652.0,708.0 499.2,926.7 865.5,861.9"/></clipPath>
<clipPath id="cc"><rect x="3" y="203" width="1914" height="816.500"/></clipPath>
<filter id="bl" x="-5%" y="-5%" width="110%" height="110%"><feGaussianBlur stdDeviation="7.2"/></filter>
<style>.c rect{width:13px;height:13px}</style>
<radialGradient id="glow" gradientUnits="userSpaceOnUse" cx="835" cy="700" r="200"><stop offset="0" stop-color="#fff" stop-opacity=".8"/><stop offset="1" stop-color="#fff" stop-opacity="0"/></radialGradient>
</defs>
<rect x="1917" y="200" width="3" height="824" fill="#fff"/>
<rect x="0" y="200" width="1917" height="819.500" fill="#ababab"/>
<rect x="1.500" y="201.500" width="1915.500" height="818" fill="#5c5c5c"/>
<rect x="3" y="203" width="1914" height="816.500" fill="#02090b"/>
<g stroke="#e2e2e2" stroke-width="1.7" stroke-dasharray="5.7 3.47"><line x1="827.5" y1="212" x2="827.5" y2="1019"/><line x1="10" y1="709.5" x2="1906" y2="709.5"/></g>
<g clip-path="url(#cl)"><g class="c" filter="url(#bl)">
<g transform="translate(0,264)"><rect x=300 fill=#00c781 /><rect x=312 fill=#00c780 /><rect x=324 fill=#00c77f /><rect x=336 fill=#00c77e /><rect x=348 fill=#00c77d /><rect x=360 fill=#00c77c /><rect x=372 fill=#00c77b /><rect x=384 fill=#00c77a /><rect x=396 fill=#00c778 /></g>
<g transform="translate(0,276)"><rect x=252 fill=#00c785 /><rect x=264 fill=#00c785 /><rect x=276 fill=#00c784 /><rect x=288 fill=#00c783 /><rect x=300 fill=#00c782 /><rect x=312 fill=#00c781 /><rect x=324 fill=#00c780 /><rect x=336 fill=#00c77f /><rect x=348 fill=#00c77e /><rect x=360 fill=#00c77d /><rect x=372 fill=#00c77c /><rect x=384 fill=#00c77b /><rect x=396 fill=#00c77a /><rect x=408 fill=#00c778 /><rect x=420 fill=#00c777 /><rect x=432 fill=#00c776 /><rect x=444 fill=#00c775 /><rect x=456 fill=#00c773 /><rect x=468 fill=#00c772 /></g>
<g transform="translate(0,288)"><rect x=216 fill=#00c789 /><rect x=228 fill=#00c788 /><rect x=240 fill=#00c787 /><rect x=252 fill=#00c786 /><rect x=264 fill=#00c786 /><rect x=276 fill=#00c785 /><rect x=288 fill=#00c784 /><rect x=300 fill=#00c783 /><rect x=312 fill=#00c782 /><rect x=324 fill=#00c781 /><rect x=336 fill=#00c780 /><rect x=348 fill=#00c77f /><rect x=360 fill=#00c77e /><rect x=372 fill=#00c77d /><rect x=384 fill=#00c77c /><rect x=396 fill=#00c77b /><rect x=408 fill=#00c77a /><rect x=420 fill=#00c778 /><rect x=432 fill=#00c777 /><rect x=444 fill=#00c776 /><rect x=456 fill=#00c774 /><rect x=468 fill=#00c773 /><rect x=480 fill=#00c772 /><rect x=492 fill=#00c770 /><rect x=504 fill=#00c76e /><rect x=516 fill=#00c76d /></g>
<g transform="translate(0,300)"><rect x=204 fill=#00c78b /><rect x=216 fill=#00c78a /><rect x=228 fill=#00c789 /><rect x=240 fill=#00c788 /><rect x=252 fill=#00c788 /><rect x=264 fill=#00c787 /><rect x=276 fill=#00c786 /><rect x=288 fill=#00c785 /><rect x=300 fill=#00c784 /><rect x=312 fill=#00c783 /><rect x=324 fill=#00c782 /><rect x=336 fill=#00c781 /><rect x=348 fill=#00c780 /><rect x=360 fill=#00c77f /><rect x=372 fill=#00c77e /><rect x=384 fill=#00c77d /><rect x=396 fill=#00c77c /><rect x=408 fill=#00c77b /><rect x=420 fill=#00c77a /><rect x=432 fill=#00c778 /><rect x=444 fill=#00c777 /><rect x=456 fill=#00c776 /><rect x=468 fill=#00c774 /><rect x=480 fill=#00c773 /><rect x=492 fill=#00c771 /><rect x=504 fill=#00c770 /><rect x=516 fill=#00c76e /><rect x=528 fill=#00c76c /><rect x=540 fill=#00c76a /><rect x=552 fill=#00c769 /><rect x=564 fill=#00c766 /></g>
<g transform="translate(0,312)"><rect x=192 fill=#00c78d /><rect x=204 fill=#00c78c /><rect x=216 fill=#00c78b /><rect x=228 fill=#00c78a /><rect x=240 fill=#00c78a /><rect x=252 fill=#00c789 /><rect x=264 fill=#00c788 /><rect x=276 fill=#00c787 /><rect x=288 fill=#00c786 /><rect x=300 fill=#00c785 /><rect x=312 fill=#00c784 /><rect x=324 fill=#00c784 /><rect x=336 fill=#00c783 /><rect x=348 fill=#00c782 /><rect x=360 fill=#00c781 /><rect x=372 fill=#00c77f /><rect x=384 fill=#00c77e /><rect x=396 fill=#00c77d /><rect x=408 fill=#00c77c /><rect x=420 fill=#00c77b /><rect x=432 fill=#00c77a /><rect x=444 fill=#00c778 /><rect x=456 fill=#00c777 /><rect x=468 fill=#00c776 /><rect x=480 fill=#00c774 /><rect x=492 fill=#00c773 /><rect x=504 fill=#00c771 /><rect x=516 fill=#00c76f /><rect x=528 fill=#00c76e /><rect x=540 fill=#00c76c /><rect x=552 fill=#00c76a /><rect x=564 fill=#00c768 /><rect x=576 fill=#00c766 /><rect x=588 fill=#00c763 /><rect x=600 fill=#00c761 /></g>
<g transform="translate(0,324)"><rect x=180 fill=#00c78e /><rect x=192 fill=#00c78e /><rect x=204 fill=#00c78d /><rect x=216 fill=#00c78c /><rect x=228 fill=#00c78b /><rect x=240 fill=#00c78b /><rect x=252 fill=#00c78a /><rect x=264 fill=#00c789 /><rect x=276 fill=#00c788 /><rect x=288 fill=#00c787 /><rect x=300 fill=#00c787 /><rect x=312 fill=#00c786 /><rect x=324 fill=#00c785 /><rect x=336 fill=#00c784 /><rect x=348 fill=#00c783 /><rect x=360 fill=#00c782 /><rect x=372 fill=#00c781 /><rect x=384 fill=#00c780 /><rect x=396 fill=#00c77f /><rect x=408 fill=#00c77d /><rect x=420 fill=#00c77c /><rect x=432 fill=#00c77b /><rect x=444 fill=#00c77a /><rect x=456 fill=#00c778 /><rect x=468 fill=#00c777 /><rect x=480 fill=#00c775 /><rect x=492 fill=#00c774 /><rect x=504 fill=#00c772 /><rect x=516 fill=#00c771 /><rect x=528 fill=#00c76f /><rect x=540 fill=#00c76d /><rect x=552 fill=#00c76b /><rect x=564 fill=#00c769 /><rect x=576 fill=#00c767 /><rect x=588 fill=#00c765 /><rect x=600 fill=#00c763 /><rect x=612 fill=#00c760 /><rect x=624 fill=#00c75d /><rect x=636 fill=#00c75b /></g>
<g transform="translate(0,336)"><rect x=168 fill=#00c790 /><rect x=180 fill=#00c790 /><rect x=192 fill=#00c78f /><rect x=204 fill=#00c78e /><rect x=216 fill=#00c78d /><rect x=228 fill=#00c78d /><rect x=240 fill=#00c78c /><rect x=252 fill=#00c78b /><rect x=264 fill=#00c78a /><rect x=276 fill=#00c78a /><rect x=288 fill=#00c789 /><rect x=300 fill=#00c788 /><rect x=312 fill=#00c787 /><rect x=324 fill=#00c786 /><rect x=336 fill=#00c785 /><rect x=348 fill=#00c784 /><rect x=360 fill=#00c783 /><rect x=372 fill=#00c782 /><rect x=384 fill=#00c781 /><rect x=396 fill=#00c780 /><rect x=408 fill=#00c77f /><rect x=420 fill=#00c77d /><rect x=432 fill=#00c77c /><rect x=444 fill=#00c77b /><rect x=456 fill=#00c77a /><rect x=468 fill=#00c778 /><rect x=480 fill=#00c777 /><rect x=492 fill=#00c775 /><rect x=504 fill=#00c774 /><rect x=516 fill=#00c772 /><rect x=528 fill=#00c770 /><rect x=540 fill=#00c76e /><rect x=552 fill=#00c76d /><rect x=564 fill=#00c76b /><rect x=576 fill=#00c769 /><rect x=588 fill=#00c766 /><rect x=600 fill=#00c764 /><rect x=612 fill=#00c761 /><rect x=624 fill=#00c75f /><rect x=636 fill=#00c75c /><rect x=648 fill=#00c759 /><rect x=660 fill=#00c756 /><rect x=672 fill=#00c752 /><rect x=684 fill=#00c74e /></g>
<g transform="translate(0,348)"><rect x=156 fill=#00c792 /><rect x=168 fill=#00c791 /><rect x=180 fill=#00c791 /><rect x=192 fill=#00c790 /><rect x=204 fill=#00c78f /><rect x=216 fill=#00c78f /><rect x=228 fill=#00c78e /><rect x=240 fill=#00c78d /><rect x=252 fill=#00c78c /><rect x=264 fill=#00c78c /><rect x=276 fill=#00c78b /><rect x=288 fill=#00c78a /><rect x=300 fill=#00c789 /><rect x=312 fill=#00c788 /><rect x=324 fill=#00c787 /><rect x=336 fill=#00c786 /><rect x=348 fill=#00c785 /><rect x=360 fill=#00c784 /><rect x=372 fill=#00c783 /><rect x=384 fill=#00c782 /><rect x=396 fill=#00c781 /><rect x=408 fill=#00c780 /><rect x=420 fill=#00c77f /><rect x=432 fill=#00c77e /><rect x=444 fill=#00c77c /><rect x=456 fill=#00c77b /><rect x=468 fill=#00c77a /><rect x=480 fill=#00c778 /><rect x=492 fill=#00c777 /><rect x=504 fill=#00c775 /><rect x=516 fill=#00c773 /><rect x=528 fill=#00c772 /><rect x=540 fill=#00c770 /><rect x=552 fill=#00c76e /><rect x=564 fill=#00c76c /><rect x=576 fill=#00c76a /><rect x=588 fill=#00c768 /><rect x=600 fill=#00c765 /><rect x=612 fill=#00c763 /><rect x=624 fill=#00c760 /><rect x=636 fill=#00c75e /><rect x=648 fill=#00c75b /><rect x=660 fill=#00c757 /><rect x=672 fill=#00c754 /><rect x=684 fill=#00c750 /><rect x=696 fill=#00c74c /><rect x=708 fill=#00c747 /></g>
<g transform="translate(0,360)"><rect x=156 fill=#00c793 /><rect x=168 fill=#00c793 /><rect x=180 fill=#00c792 /><rect x=192 fill=#00c791 /><rect x=204 fill=#00c791 /><rect x=216 fill=#00c790 /><rect x=228 fill=#00c78f /><rect x=240 fill=#00c78e /><rect x=252 fill=#00c78e /><rect x=264 fill=#00c78d /><rect x=276 fill=#00c78c /><rect x=288 fill=#00c78b /><rect x=300 fill=#00c78a /><rect x=312 fill=#00c789 /><rect x=324 fill=#00c789 /><rect x=336 fill=#00c788 /><rect x=348 fill=#00c787 /><rect x=360 fill=#00c786 /><rect x=372 fill=#00c785 /><rect x=384 fill=#00c784 /><rect x=396 fill=#00c783 /><rect x=408 fill=#00c781 /><rect x=420 fill=#00c780 /><rect x=432 fill=#00c77f /><rect x=444 fill=#00c77e /><rect x=456 fill=#00c77c /><rect x=468 fill=#00c77b /><rect x=480 fill=#00c77a /><rect x=492 fill=#00c778 /><rect x=504 fill=#00c777 /><rect x=516 fill=#00c775 /><rect x=528 fill=#00c773 /><rect x=540 fill=#00c771 /><rect x=552 fill=#00c770 /><rect x=564 fill=#00c76e /><rect x=576 fill=#00c76b /><rect x=588 fill=#00c769 /><rect x=600 fill=#00c767 /><rect x=612 fill=#00c764 /><rect x=624 fill=#00c762 /><rect x=636 fill=#00c75f /><rect x=648 fill=#00c75c /><rect x=660 fill=#00c759 /><rect x=672 fill=#00c755 /><rect x=684 fill=#00c751 /><rect x=696 fill=#00c74d /><rect x=708 fill=#00c749 /><rect x=720 fill=#00c743 /><rect x=732 fill=#00c73d /><rect x=744 fill=#00c736 /></g>
<g transform="translate(0,372)"><rect x=156 fill=#00c794 /><rect x=168 fill=#00c794 /><rect x=180 fill=#00c793 /><rect x=192 fill=#00c792 /><rect x=204 fill=#00c792 /><rect x=216 fill=#00c791 /><rect x=228 fill=#00c790 /><rect x=240 fill=#00c790 /><rect x=252 fill=#00c78f /><rect x=264 fill=#00c78e /><rect x=276 fill=#00c78d /><rect x=288 fill=#00c78d /><rect x=300 fill=#00c78c /><rect x=312 fill=#00c78b /><rect x=324 fill=#00c78a /><rect x=336 fill=#00c789 /><rect x=348 fill=#00c788 /><rect x=360 fill=#00c787 /><rect x=372 fill=#00c786 /><rect x=384 fill=#00c785 /><rect x=396 fill=#00c784 /><rect x=408 fill=#00c783 /><rect x=420 fill=#00c782 /><rect x=432 fill=#00c780 /><rect x=444 fill=#00c77f /><rect x=456 fill=#00c77e /><rect x=468 fill=#00c77c /><rect x=480 fill=#00c77b /><rect x=492 fill=#00c77a /><rect x=504 fill=#00c778 /><rect x=516 fill=#00c776 /><rect x=528 fill=#00c775 /><rect x=540 fill=#00c773 /><rect x=552 fill=#00c771 /><rect x=564 fill=#00c76f /><rect x=576 fill=#00c76d /><rect x=588 fill=#00c76b /><rect x=600 fill=#00c769 /><rect x=612 fill=#00c766 /><rect x=624 fill=#00c763 /><rect x=636 fill=#00c761 /><rect x=648 fill=#00c75e /><rect x=660 fill=#00c75a /><rect x=672 fill=#00c757 /><rect x=684 fill=#00c753 /><rect x=696 fill=#00c74f /><rect x=708 fill=#00c74a /><rect x=720 fill=#00c745 /><rect x=732 fill=#00c73f /><rect x=744 fill=#00c738 /><rect x=756 fill=#00c72f /><rect x=768 fill=#00c724 /><rect x=780 fill=#00c70b /></g>
<g transform="translate(0,384)"><rect x=144 fill=#00c796 /><rect x=156 fill=#00c796 /><rect x=168 fill=#00c795 /><rect x=180 fill=#00c794 /><rect x=192 fill=#00c794 /><rect x=204 fill=#00c793 /><rect x=216 fill=#00c792 /><rect x=228 fill=#00c792 /><rect x=240 fill=#00c791 /><rect x=252 fill=#00c790 /><rect x=264 fill=#00c78f /><rect x=276 fill=#00c78f /><rect x=288 fill=#00c78e /><rect x=300 fill=#00c78d /><rect x=312 fill=#00c78c /><rect x=324 fill=#00c78b /><rect x=336 fill=#00c78a /><rect x=348 fill=#00c789 /><rect x=360 fill=#00c788 /><rect x=372 fill=#00c787 /><rect x=384 fill=#00c786 /><rect x=396 fill=#00c785 /><rect x=408 fill=#00c784 /><rect x=420 fill=#00c783 /><rect x=432 fill=#00c782 /><rect x=444 fill=#00c781 /><rect x=456 fill=#00c77f /><rect x=468 fill=#00c77e /><rect x=480 fill=#00c77d /><rect x=492 fill=#00c77b /><rect x=504 fill=#00c77a /><rect x=516 fill=#00c778 /><rect x=528 fill=#00c776 /><rect x=540 fill=#00c774 /><rect x=552 fill=#00c773 /><rect x=564 fill=#00c771 /><rect x=576 fill=#00c76f /><rect x=588 fill=#00c76c /><rect x=600 fill=#00c76a /><rect x=612 fill=#00c768 /><rect x=624 fill=#00c765 /><rect x=636 fill=#00c762 /><rect x=648 fill=#00c75f /><rect x=660 fill=#00c75c /><rect x=672 fill=#00c759 /><rect x=684 fill=#00c755 /><rect x=696 fill=#00c751 /><rect x=708 fill=#00c74c /><rect x=720 fill=#00c747 /><rect x=732 fill=#00c741 /><rect x=744 fill=#00c73a /><rect x=756 fill=#00c731 /><rect x=768 fill=#00c726 /><rect x=780 fill=#00c711 /><rect x=792 fill=#20c700 /><rect x=804 fill=#2ec700 /><rect x=816 fill=#38c700 /></g>
<g transform="translate(0,396)"><rect x=144 fill=#00c797 /><rect x=156 fill=#00c797 /><rect x=168 fill=#00c796 /><rect x=180 fill=#00c796 /><rect x=192 fill=#00c795 /><rect x=204 fill=#00c794 /><rect x=216 fill=#00c794 /><rect x=228 fill=#00c793 /><rect x=240 fill=#00c792 /><rect x=252 fill=#00c792 /><rect x=264 fill=#00c791 /><rect x=276 fill=#00c790 /><rect x=288 fill=#00c78f /><rect x=300 fill=#00c78e /><rect x=312 fill=#00c78e /><rect x=324 fill=#00c78d /><rect x=336 fill=#00c78c /><rect x=348 fill=#00c78b /><rect x=360 fill=#00c78a /><rect x=372 fill=#00c789 /><rect x=384 fill=#00c788 /><rect x=396 fill=#00c787 /><rect x=408 fill=#00c786 /><rect x=420 fill=#00c785 /><rect x=432 fill=#00c783 /><rect x=444 fill=#00c782 /><rect x=456 fill=#00c781 /><rect x=468 fill=#00c780 /><rect x=480 fill=#00c77e /><rect x=492 fill=#00c77d /><rect x=504 fill=#00c77b /><rect x=516 fill=#00c77a /><rect x=528 fill=#00c778 /><rect x=540 fill=#00c776 /><rect x=552 fill=#00c774 /><rect x=564 fill=#00c772 /><rect x=576 fill=#00c770 /><rect x=588 fill=#00c76e /><rect x=600 fill=#00c76c /><rect x=612 fill=#00c769 /><rect x=624 fill=#00c767 /><rect x=636 fill=#00c764 /><rect x=648 fill=#00c761 /><rect x=660 fill=#00c75e /><rect x=672 fill=#00c75a /><rect x=684 fill=#00c757 /><rect x=696 fill=#00c752 /><rect x=708 fill=#00c74e /><rect x=720 fill=#00c749 /><rect x=732 fill=#00c743 /><rect x=744 fill=#00c73c /><rect x=756 fill=#00c733 /><rect x=768 fill=#00c728 /><rect x=780 fill=#00c716 /><rect x=792 fill=#1ec700 /><rect x=804 fill=#2dc700 /><rect x=816 fill=#38c700 /><rect x=828 fill=#41c700 /><rect x=840 fill=#48c700 /></g>
<g transform="translate(0,408)"><rect x=144 fill=#00c799 /><rect x=156 fill=#00c798 /><rect x=168 fill=#00c798 /><rect x=180 fill=#00c797 /><rect x=192 fill=#00c796 /><rect x=204 fill=#00c796 /><rect x=216 fill=#00c795 /><rect x=228 fill=#00c794 /><rect x=240 fill=#00c794 /><rect x=252 fill=#00c793 /><rect x=264 fill=#00c792 /><rect x=276 fill=#00c791 /><rect x=288 fill=#00c791 /><rect x=300 fill=#00c790 /><rect x=312 fill=#00c78f /><rect x=324 fill=#00c78e /><rect x=336 fill=#00c78d /><rect x=348 fill=#00c78c /><rect x=360 fill=#00c78b /><rect x=372 fill=#00c78a /><rect x=384 fill=#00c789 /><rect x=396 fill=#00c788 /><rect x=408 fill=#00c787 /><rect x=420 fill=#00c786 /><rect x=432 fill=#00c785 /><rect x=444 fill=#00c784 /><rect x=456 fill=#00c782 /><rect x=468 fill=#00c781 /><rect x=480 fill=#00c780 /><rect x=492 fill=#00c77e /><rect x=504 fill=#00c77d /><rect x=516 fill=#00c77b /><rect x=528 fill=#00c779 /><rect x=540 fill=#00c778 /><rect x=552 fill=#00c776 /><rect x=564 fill=#00c774 /><rect x=576 fill=#00c772 /><rect x=588 fill=#00c770 /><rect x=600 fill=#00c76e /><rect x=612 fill=#00c76b /><rect x=624 fill=#00c768 /><rect x=636 fill=#00c766 /><rect x=648 fill=#00c763 /><rect x=660 fill=#00c760 /><rect x=672 fill=#00c75c /><rect x=684 fill=#00c758 /><rect x=696 fill=#00c754 /><rect x=708 fill=#00c750 /><rect x=720 fill=#00c74a /><rect x=732 fill=#00c745 /><rect x=744 fill=#00c73e /><rect x=756 fill=#00c735 /><rect x=768 fill=#00c72a /><rect x=780 fill=#00c719 /><rect x=792 fill=#1cc700 /><rect x=804 fill=#2cc700 /><rect x=816 fill=#38c700 /><rect x=828 fill=#41c700 /><rect x=840 fill=#48c700 /><rect x=852 fill=#4fc700 /><rect x=864 fill=#56c700 /><rect x=876 fill=#5bc700 /></g>
<g transform="translate(0,420)"><rect x=144 fill=#00c79a /><rect x=156 fill=#00c79a /><rect x=168 fill=#00c799 /><rect x=180 fill=#00c798 /><rect x=192 fill=#00c798 /><rect x=204 fill=#00c797 /><rect x=216 fill=#00c796 /><rect x=228 fill=#00c796 /><rect x=240 fill=#00c795 /><rect x=252 fill=#00c794 /><rect x=264 fill=#00c794 /><rect x=276 fill=#00c793 /><rect x=288 fill=#00c792 /><rect x=300 fill=#00c791 /><rect x=312 fill=#00c791 /><rect x=324 fill=#00c790 /><rect x=336 fill=#00c78f /><rect x=348 fill=#00c78e /><rect x=360 fill=#00c78d /><rect x=372 fill=#00c78c /><rect x=384 fill=#00c78b /><rect x=396 fill=#00c78a /><rect x=408 fill=#00c789 /><rect x=420 fill=#00c788 /><rect x=432 fill=#00c787 /><rect x=444 fill=#00c785 /><rect x=456 fill=#00c784 /><rect x=468 fill=#00c783 /><rect x=480 fill=#00c781 /><rect x=492 fill=#00c780 /><rect x=504 fill=#00c77e /><rect x=516 fill=#00c77d /><rect x=528 fill=#00c77b /><rect x=540 fill=#00c779 /><rect x=552 fill=#00c778 /><rect x=564 fill=#00c776 /><rect x=576 fill=#00c774 /><rect x=588 fill=#00c772 /><rect x=600 fill=#00c76f /><rect x=612 fill=#00c76d /><rect x=624 fill=#00c76a /><rect x=636 fill=#00c768 /><rect x=648 fill=#00c765 /><rect x=660 fill=#00c761 /><rect x=672 fill=#00c75e /><rect x=684 fill=#00c75a /><rect x=696 fill=#00c756 /><rect x=708 fill=#00c751 /><rect x=720 fill=#00c74c /><rect x=732 fill=#00c746 /><rect x=744 fill=#00c740 /><rect x=756 fill=#00c737 /><rect x=768 fill=#00c72d /><rect x=780 fill=#00c71d /><rect x=792 fill=#19c700 /><rect x=804 fill=#2cc700 /><rect x=816 fill=#37c700 /><rect x=828 fill=#41c700 /><rect x=840 fill=#49c700 /><rect x=852 fill=#50c700 /><rect x=864 fill=#56c700 /><rect x=876 fill=#5cc700 /><rect x=888 fill=#62c700 /><rect x=900 fill=#67c700 /><rect x=912 fill=#6cc700 /></g>
<g transform="translate(0,432)"><rect x=144 fill=#00c79b /><rect x=156 fill=#00c79b /><rect x=168 fill=#00c79a /><rect x=180 fill=#00c79a /><rect x=192 fill=#00c799 /><rect x=204 fill=#00c799 /><rect x=216 fill=#00c798 /><rect x=228 fill=#00c797 /><rect x=240 fill=#00c797 /><rect x=252 fill=#00c796 /><rect x=264 fill=#00c795 /><rect x=276 fill=#00c794 /><rect x=288 fill=#00c794 /><rect x=300 fill=#00c793 /><rect x=312 fill=#00c792 /><rect x=324 fill=#00c791 /><rect x=336 fill=#00c790 /><rect x=348 fill=#00c78f /><rect x=360 fill=#00c78f /><rect x=372 fill=#00c78e /><rect x=384 fill=#00c78d /><rect x=396 fill=#00c78c /><rect x=408 fill=#00c78a /><rect x=420 fill=#00c789 /><rect x=432 fill=#00c788 /><rect x=444 fill=#00c787 /><rect x=456 fill=#00c786 /><rect x=468 fill=#00c784 /><rect x=480 fill=#00c783 /><rect x=492 fill=#00c782 /><rect x=504 fill=#00c780 /><rect x=516 fill=#00c77f /><rect x=528 fill=#00c77d /><rect x=540 fill=#00c77b /><rect x=552 fill=#00c779 /><rect x=564 fill=#00c778 /><rect x=576 fill=#00c776 /><rect x=588 fill=#00c773 /><rect x=600 fill=#00c771 /><rect x=612 fill=#00c76f /><rect x=624 fill=#00c76c /><rect x=636 fill=#00c769 /><rect x=648 fill=#00c767 /><rect x=660 fill=#00c763 /><rect x=672 fill=#00c760 /><rect x=684 fill=#00c75c /><rect x=696 fill=#00c758 /><rect x=708 fill=#00c753 /><rect x=720 fill=#00c74e /><rect x=732 fill=#00c748 /><rect x=744 fill=#00c742 /><rect x=756 fill=#00c73a /><rect x=768 fill=#00c72f /><rect x=780 fill=#00c720 /><rect x=792 fill=#16c700 /><rect x=804 fill=#2bc700 /><rect x=816 fill=#37c700 /><rect x=828 fill=#41c700 /><rect x=840 fill=#49c700 /><rect x=852 fill=#51c700 /><rect x=864 fill=#57c700 /><rect x=876 fill=#5dc700 /><rect x=888 fill=#63c700 /><rect x=900 fill=#68c700 /><rect x=912 fill=#6dc700 /><rect x=924 fill=#72c700 /><rect x=936 fill=#76c700 /><rect x=948 fill=#7bc700 /></g>
<g transform="translate(0,444)"><rect x=144 fill=#00c79d /><rect x=156 fill=#00c79c /><rect x=168 fill=#00c79c /><rect x=180 fill=#00c79b /><rect x=192 fill=#00c79b /><rect x=204 fill=#00c79a /><rect x=216 fill=#00c799 /><rect x=228 fill=#00c799 /><rect x=240 fill=#00c798 /><rect x=252 fill=#00c797 /><rect x=264 fill=#00c797 /><rect x=276 fill=#00c796 /><rect x=288 fill=#00c795 /><rect x=300 fill=#00c794 /><rect x=312 fill=#00c794 /><rect x=324 fill=#00c793 /><rect x=336 fill=#00c792 /><rect x=348 fill=#00c791 /><rect x=360 fill=#00c790 /><rect x=372 fill=#00c78f /><rect x=384 fill=#00c78e /><rect x=396 fill=#00c78d /><rect x=408 fill=#00c78c /><rect x=420 fill=#00c78b /><rect x=432 fill=#00c78a /><rect x=444 fill=#00c789 /><rect x=456 fill=#00c787 /><rect x=468 fill=#00c786 /><rect x=480 fill=#00c785 /><rect x=492 fill=#00c783 /><rect x=504 fill=#00c782 /><rect x=516 fill=#00c780 /><rect x=528 fill=#00c77f /><rect x=540 fill=#00c77d /><rect x=552 fill=#00c77b /><rect x=564 fill=#00c779 /><rect x=576 fill=#00c777 /><rect x=588 fill=#00c775 /><rect x=600 fill=#00c773 /><rect x=612 fill=#00c771 /><rect x=624 fill=#00c76e /><rect x=636 fill=#00c76b /><rect x=648 fill=#00c768 /><rect x=660 fill=#00c765 /><rect x=672 fill=#00c762 /><rect x=684 fill=#00c75e /><rect x=696 fill=#00c75a /><rect x=708 fill=#00c756 /><rect x=720 fill=#00c750 /><rect x=732 fill=#00c74b /><rect x=744 fill=#00c744 /><rect x=756 fill=#00c73c /><rect x=768 fill=#00c732 /><rect x=780 fill=#00c723 /><rect x=792 fill=#12c700 /><rect x=804 fill=#2ac700 /><rect x=816 fill=#37c700 /><rect x=828 fill=#41c700 /><rect x=840 fill=#4ac700 /><rect x=852 fill=#52c700 /><rect x=864 fill=#58c700 /><rect x=876 fill=#5fc700 /><rect x=888 fill=#64c700 /><rect x=900 fill=#6ac700 /><rect x=912 fill=#6fc700 /><rect x=924 fill=#74c700 /><rect x=936 fill=#78c700 /><rect x=948 fill=#7dc700 /><rect x=960 fill=#81c700 /><rect x=972 fill=#85c700 /></g>
<g transform="translate(0,456)"><rect x=144 fill=#00c79e /><rect x=156 fill=#00c79e /><rect x=168 fill=#00c79d /><rect x=180 fill=#00c79d /><rect x=192 fill=#00c79c /><rect x=204 fill=#00c79b /><rect x=216 fill=#00c79b /><rect x=228 fill=#00c79a /><rect x=240 fill=#00c79a /><rect x=252 fill=#00c799 /><rect x=264 fill=#00c798 /><rect x=276 fill=#00c797 /><rect x=288 fill=#00c797 /><rect x=300 fill=#00c796 /><rect x=312 fill=#00c795 /><rect x=324 fill=#00c794 /><rect x=336 fill=#00c794 /><rect x=348 fill=#00c793 /><rect x=360 fill=#00c792 /><rect x=372 fill=#00c791 /><rect x=384 fill=#00c790 /><rect x=396 fill=#00c78f /><rect x=408 fill=#00c78e /><rect x=420 fill=#00c78d /><rect x=432 fill=#00c78c /><rect x=444 fill=#00c78b /><rect x=456 fill=#00c789 /><rect x=468 fill=#00c788 /><rect x=480 fill=#00c787 /><rect x=492 fill=#00c785 /><rect x=504 fill=#00c784 /><rect x=516 fill=#00c782 /><rect x=528 fill=#00c781 /><rect x=540 fill=#00c77f /><rect x=552 fill=#00c77d /><rect x=564 fill=#00c77b /><rect x=576 fill=#00c779 /><rect x=588 fill=#00c777 /><rect x=600 fill=#00c775 /><rect x=612 fill=#00c773 /><rect x=624 fill=#00c770 /><rect x=636 fill=#00c76d /><rect x=648 fill=#00c76b /><rect x=660 fill=#00c767 /><rect x=672 fill=#00c764 /><rect x=684 fill=#00c760 /><rect x=696 fill=#00c75c /><rect x=708 fill=#00c758 /><rect x=720 fill=#00c753 /><rect x=732 fill=#00c74d /><rect x=744 fill=#00c746 /><rect x=756 fill=#00c73e /><rect x=768 fill=#00c734 /><rect x=780 fill=#00c726 /><rect x=792 fill=#0bc700 /><rect x=804 fill=#28c700 /><rect x=816 fill=#37c700 /><rect x=828 fill=#42c700 /><rect x=840 fill=#4bc700 /><rect x=852 fill=#52c700 /><rect x=864 fill=#59c700 /><rect x=876 fill=#60c700 /><rect x=888 fill=#66c700 /><rect x=900 fill=#6bc700 /><rect x=912 fill=#71c700 /><rect x=924 fill=#76c700 /><rect x=936 fill=#7ac700 /><rect x=948 fill=#7fc700 /><rect x=960 fill=#83c700 /><rect x=972 fill=#87c700 /><rect x=984 fill=#8bc700 /><rect x=996 fill=#8fc700 /><rect x=1008 fill=#93c700 /></g>
<g transform="translate(0,468)"><rect x=144 fill=#00c7a0 /><rect x=156 fill=#00c79f /><rect x=168 fill=#00c79f /><rect x=180 fill=#00c79e /><rect x=192 fill=#00c79e /><rect x=204 fill=#00c79d /><rect x=216 fill=#00c79c /><rect x=228 fill=#00c79c /><rect x=240 fill=#00c79b /><rect x=252 fill=#00c79a /><rect x=264 fill=#00c79a /><rect x=276 fill=#00c799 /><rect x=288 fill=#00c798 /><rect x=300 fill=#00c798 /><rect x=312 fill=#00c797 /><rect x=324 fill=#00c796 /><rect x=336 fill=#00c795 /><rect x=348 fill=#00c794 /><rect x=360 fill=#00c794 /><rect x=372 fill=#00c793 /><rect x=384 fill=#00c792 /><rect x=396 fill=#00c791 /><rect x=408 fill=#00c790 /><rect x=420 fill=#00c78f /><rect x=432 fill=#00c78e /><rect x=444 fill=#00c78c /><rect x=456 fill=#00c78b /><rect x=468 fill=#00c78a /><rect x=480 fill=#00c789 /><rect x=492 fill=#00c787 /><rect x=504 fill=#00c786 /><rect x=516 fill=#00c784 /><rect x=528 fill=#00c783 /><rect x=540 fill=#00c781 /><rect x=552 fill=#00c77f /><rect x=564 fill=#00c77d /><rect x=576 fill=#00c77b /><rect x=588 fill=#00c779 /><rect x=600 fill=#00c777 /><rect x=612 fill=#00c775 /><rect x=624 fill=#00c772 /><rect x=636 fill=#00c770 /><rect x=648 fill=#00c76d /><rect x=660 fill=#00c76a /><rect x=672 fill=#00c766 /><rect x=684 fill=#00c762 /><rect x=696 fill=#00c75e /><rect x=708 fill=#00c75a /><rect x=720 fill=#00c755 /><rect x=732 fill=#00c74f /><rect x=744 fill=#00c748 /><rect x=756 fill=#00c740 /><rect x=768 fill=#00c737 /><rect x=780 fill=#00c729 /><rect x=792 fill=#00c70b /><rect x=804 fill=#27c700 /><rect x=816 fill=#36c700 /><rect x=828 fill=#42c700 /><rect x=840 fill=#4bc700 /><rect x=852 fill=#53c700 /><rect x=864 fill=#5bc700 /><rect x=876 fill=#61c700 /><rect x=888 fill=#67c700 /><rect x=900 fill=#6dc700 /><rect x=912 fill=#73c700 /><rect x=924 fill=#78c700 /><rect x=936 fill=#7dc700 /><rect x=948 fill=#81c700 /><rect x=960 fill=#86c700 /><rect x=972 fill=#8ac700 /><rect x=984 fill=#8ec700 /><rect x=996 fill=#92c700 /><rect x=1008 fill=#96c700 /><rect x=1020 fill=#9ac700 /><rect x=1032 fill=#9dc700 /><rect x=1044 fill=#a1c700 /></g>
<g transform="translate(0,480)"><rect x=144 fill=#00c7a1 /><rect x=156 fill=#00c7a1 /><rect x=168 fill=#00c7a0 /><rect x=180 fill=#00c7a0 /><rect x=192 fill=#00c79f /><rect x=204 fill=#00c79f /><rect x=216 fill=#00c79e /><rect x=228 fill=#00c79d /><rect x=240 fill=#00c79d /><rect x=252 fill=#00c79c /><rect x=264 fill=#00c79b /><rect x=276 fill=#00c79b /><rect x=288 fill=#00c79a /><rect x=300 fill=#00c799 /><rect x=312 fill=#00c799 /><rect x=324 fill=#00c798 /><rect x=336 fill=#00c797 /><rect x=348 fill=#00c796 /><rect x=360 fill=#00c795 /><rect x=372 fill=#00c794 /><rect x=384 fill=#00c793 /><rect x=396 fill=#00c793 /><rect x=408 fill=#00c792 /><rect x=420 fill=#00c790 /><rect x=432 fill=#00c78f /><rect x=444 fill=#00c78e /><rect x=456 fill=#00c78d /><rect x=468 fill=#00c78c /><rect x=480 fill=#00c78b /><rect x=492 fill=#00c789 /><rect x=504 fill=#00c788 /><rect x=516 fill=#00c786 /><rect x=528 fill=#00c785 /><rect x=540 fill=#00c783 /><rect x=552 fill=#00c781 /><rect x=564 fill=#00c780 /><rect x=576 fill=#00c77e /><rect x=588 fill=#00c77c /><rect x=600 fill=#00c779 /><rect x=612 fill=#00c777 /><rect x=624 fill=#00c775 /><rect x=636 fill=#00c772 /><rect x=648 fill=#00c76f /><rect x=660 fill=#00c76c /><rect x=672 fill=#00c768 /><rect x=684 fill=#00c765 /><rect x=696 fill=#00c761 /><rect x=708 fill=#00c75c /><rect x=720 fill=#00c757 /><rect x=732 fill=#00c751 /><rect x=744 fill=#00c74b /><rect x=756 fill=#00c743 /><rect x=768 fill=#00c739 /><rect x=780 fill=#00c72c /><rect x=792 fill=#00c713 /><rect x=804 fill=#26c700 /><rect x=816 fill=#36c700 /><rect x=828 fill=#42c700 /><rect x=840 fill=#4cc700 /><rect x=852 fill=#54c700 /><rect x=864 fill=#5cc700 /><rect x=876 fill=#63c700 /><rect x=888 fill=#69c700 /><rect x=900 fill=#6fc700 /><rect x=912 fill=#75c700 /><rect x=924 fill=#7ac700 /><rect x=936 fill=#7fc700 /><rect x=948 fill=#84c700 /><rect x=960 fill=#88c700 /><rect x=972 fill=#8dc700 /><rect x=984 fill=#91c700 /><rect x=996 fill=#95c700 /><rect x=1008 fill=#99c700 /><rect x=1020 fill=#9dc700 /><rect x=1032 fill=#a1c700 /><rect x=1044 fill=#a4c700 /><rect x=1056 fill=#a8c700 /><rect x=1068 fill=#abc700 /></g>
<g transform="translate(0,492)"><rect x=144 fill=#00c7a3 /><rect x=156 fill=#00c7a2 /><rect x=168 fill=#00c7a2 /><rect x=180 fill=#00c7a1 /><rect x=192 fill=#00c7a1 /><rect x=204 fill=#00c7a0 /><rect x=216 fill=#00c7a0 /><rect x=228 fill=#00c79f /><rect x=240 fill=#00c79e /><rect x=252 fill=#00c79e /><rect x=264 fill=#00c79d /><rect x=276 fill=#00c79c /><rect x=288 fill=#00c79c /><rect x=300 fill=#00c79b /><rect x=312 fill=#00c79a /><rect x=324 fill=#00c79a /><rect x=336 fill=#00c799 /><rect x=348 fill=#00c798 /><rect x=360 fill=#00c797 /><rect x=372 fill=#00c796 /><rect x=384 fill=#00c795 /><rect x=396 fill=#00c794 /><rect x=408 fill=#00c793 /><rect x=420 fill=#00c792 /><rect x=432 fill=#00c791 /><rect x=444 fill=#00c790 /><rect x=456 fill=#00c78f /><rect x=468 fill=#00c78e /><rect x=480 fill=#00c78d /><rect x=492 fill=#00c78b /><rect x=504 fill=#00c78a /><rect x=516 fill=#00c788 /><rect x=528 fill=#00c787 /><rect x=540 fill=#00c785 /><rect x=552 fill=#00c784 /><rect x=564 fill=#00c782 /><rect x=576 fill=#00c780 /><rect x=588 fill=#00c77e /><rect x=600 fill=#00c77c /><rect x=612 fill=#00c779 /><rect x=624 fill=#00c777 /><rect x=636 fill=#00c774 /><rect x=648 fill=#00c771 /><rect x=660 fill=#00c76e /><rect x=672 fill=#00c76b /><rect x=684 fill=#00c767 /><rect x=696 fill=#00c763 /><rect x=708 fill=#00c75f /><rect x=720 fill=#00c75a /><rect x=732 fill=#00c754 /><rect x=744 fill=#00c74d /><rect x=756 fill=#00c746 /><rect x=768 fill=#00c73c /><rect x=780 fill=#00c72f /><rect x=792 fill=#17c720 /><rect x=804 fill=#2bc71a /><rect x=816 fill=#38c712 /><rect x=828 fill=#42c700 /><rect x=840 fill=#4dc700 /><rect x=852 fill=#56c700 /><rect x=864 fill=#5dc700 /><rect x=876 fill=#65c700 /><rect x=888 fill=#6bc700 /><rect x=900 fill=#71c700 /><rect x=912 fill=#77c700 /><rect x=924 fill=#7cc700 /><rect x=936 fill=#82c700 /><rect x=948 fill=#86c700 /><rect x=960 fill=#8bc700 /><rect x=972 fill=#90c700 /><rect x=984 fill=#94c700 /><rect x=996 fill=#98c700 /><rect x=1008 fill=#9cc700 /><rect x=1020 fill=#a0c700 /><rect x=1032 fill=#a4c700 /><rect x=1044 fill=#a8c700 /><rect x=1056 fill=#acc700 /><rect x=1068 fill=#afc700 /><rect x=1080 fill=#b3c700 /><rect x=1092 fill=#b6c700 /><rect x=1104 fill=#b9c700 /></g>
<g transform="translate(0,504)"><rect x=144 fill=#00c7a4 /><rect x=156 fill=#00c7a4 /><rect x=168 fill=#00c7a3 /><rect x=180 fill=#00c7a3 /><rect x=192 fill=#00c7a2 /><rect x=204 fill=#00c7a2 /><rect x=216 fill=#00c7a1 /><rect x=228 fill=#00c7a1 /><rect x=240 fill=#00c7a0 /><rect x=252 fill=#00c79f /><rect x=264 fill=#00c79f /><rect x=276 fill=#00c79e /><rect x=288 fill=#00c79e /><rect x=300 fill=#00c79d /><rect x=312 fill=#00c79c /><rect x=324 fill=#00c79b /><rect x=336 fill=#00c79b /><rect x=348 fill=#00c79a /><rect x=360 fill=#00c799 /><rect x=372 fill=#00c798 /><rect x=384 fill=#00c797 /><rect x=396 fill=#00c796 /><rect x=408 fill=#00c795 /><rect x=420 fill=#00c794 /><rect x=432 fill=#00c793 /><rect x=444 fill=#00c792 /><rect x=456 fill=#00c791 /><rect x=468 fill=#00c790 /><rect x=480 fill=#00c78f /><rect x=492 fill=#00c78d /><rect x=504 fill=#00c78c /><rect x=516 fill=#00c78b /><rect x=528 fill=#00c789 /><rect x=540 fill=#00c788 /><rect x=552 fill=#00c786 /><rect x=564 fill=#00c784 /><rect x=576 fill=#00c782 /><rect x=588 fill=#00c780 /><rect x=600 fill=#00c77e /><rect x=612 fill=#00c77c /><rect x=624 fill=#00c779 /><rect x=636 fill=#00c777 /><rect x=648 fill=#00c774 /><rect x=660 fill=#00c771 /><rect x=672 fill=#00c76d /><rect x=684 fill=#00c76a /><rect x=696 fill=#00c766 /><rect x=708 fill=#00c761 /><rect x=720 fill=#00c75c /><rect x=732 fill=#00c757 /><rect x=744 fill=#00c750 /><rect x=756 fill=#00c748 /><rect x=768 fill=#00c73f /><rect x=780 fill=#0ac733 /><rect x=792 fill=#27c72f /><rect x=804 fill=#35c72c /><rect x=816 fill=#40c728 /><rect x=828 fill=#49c723 /><rect x=840 fill=#51c71d /><rect x=852 fill=#58c715 /><rect x=864 fill=#5fc700 /><rect x=876 fill=#66c700 /><rect x=888 fill=#6dc700 /><rect x=900 fill=#73c700 /><rect x=912 fill=#79c700 /><rect x=924 fill=#7fc700 /><rect x=936 fill=#84c700 /><rect x=948 fill=#89c700 /><rect x=960 fill=#8ec700 /><rect x=972 fill=#93c700 /><rect x=984 fill=#98c700 /><rect x=996 fill=#9cc700 /><rect x=1008 fill=#a0c700 /><rect x=1020 fill=#a4c700 /><rect x=1032 fill=#a8c700 /><rect x=1044 fill=#acc700 /><rect x=1056 fill=#b0c700 /><rect x=1068 fill=#b3c700 /><rect x=1080 fill=#b7c700 /><rect x=1092 fill=#bac700 /><rect x=1104 fill=#bec700 /><rect x=1116 fill=#c1c700 /><rect x=1128 fill=#c5c700 /></g>
<g transform="translate(0,516)"><rect x=144 fill=#00c7a6 /><rect x=156 fill=#00c7a5 /><rect x=168 fill=#00c7a5 /><rect x=180 fill=#00c7a4 /><rect x=192 fill=#00c7a4 /><rect x=204 fill=#00c7a3 /><rect x=216 fill=#00c7a3 /><rect x=228 fill=#00c7a2 /><rect x=240 fill=#00c7a2 /><rect x=252 fill=#00c7a1 /><rect x=264 fill=#00c7a1 /><rect x=276 fill=#00c7a0 /><rect x=288 fill=#00c79f /><rect x=300 fill=#00c79f /><rect x=312 fill=#00c79e /><rect x=324 fill=#00c79d /><rect x=336 fill=#00c79d /><rect x=348 fill=#00c79c /><rect x=360 fill=#00c79b /><rect x=372 fill=#00c79a /><rect x=384 fill=#00c799 /><rect x=396 fill=#00c798 /><rect x=408 fill=#00c797 /><rect x=420 fill=#00c796 /><rect x=432 fill=#00c795 /><rect x=444 fill=#00c794 /><rect x=456 fill=#00c793 /><rect x=468 fill=#00c792 /><rect x=480 fill=#00c791 /><rect x=492 fill=#00c790 /><rect x=504 fill=#00c78e /><rect x=516 fill=#00c78d /><rect x=528 fill=#00c78b /><rect x=540 fill=#00c78a /><rect x=552 fill=#00c788 /><rect x=564 fill=#00c786 /><rect x=576 fill=#00c785 /><rect x=588 fill=#00c783 /><rect x=600 fill=#00c781 /><rect x=612 fill=#00c77e /><rect x=624 fill=#00c77c /><rect x=636 fill=#00c779 /><rect x=648 fill=#00c776 /><rect x=660 fill=#00c773 /><rect x=672 fill=#00c770 /><rect x=684 fill=#00c76c /><rect x=696 fill=#00c768 /><rect x=708 fill=#00c764 /><rect x=720 fill=#00c75f /><rect x=732 fill=#00c759 /><rect x=744 fill=#00c753 /><rect x=756 fill=#00c74b /><rect x=768 fill=#00c742 /><rect x=780 fill=#23c73d /><rect x=792 fill=#32c73b /><rect x=804 fill=#3ec738 /><rect x=816 fill=#48c735 /><rect x=828 fill=#50c732 /><rect x=840 fill=#57c72e /><rect x=852 fill=#5ec72a /><rect x=864 fill=#65c725 /><rect x=876 fill=#6bc720 /><rect x=888 fill=#71c718 /><rect x=900 fill=#76c70c /><rect x=912 fill=#7cc700 /><rect x=924 fill=#82c700 /><rect x=936 fill=#87c700 /><rect x=948 fill=#8dc700 /><rect x=960 fill=#92c700 /><rect x=972 fill=#97c700 /><rect x=984 fill=#9bc700 /><rect x=996 fill=#a0c700 /><rect x=1008 fill=#a4c700 /><rect x=1020 fill=#a8c700 /><rect x=1032 fill=#acc700 /><rect x=1044 fill=#b0c700 /><rect x=1056 fill=#b4c700 /><rect x=1068 fill=#b8c700 /><rect x=1080 fill=#bcc700 /><rect x=1092 fill=#bfc700 /><rect x=1104 fill=#c3c700 /><rect x=1116 fill=#c6c700 /><rect x=1128 fill=#c7c400 /><rect x=1140 fill=#c7c100 /><rect x=1152 fill=#c7be00 /><rect x=1164 fill=#c7bb00 /></g>
<g transform="translate(0,528)"><rect x=144 fill=#00c7a8 /><rect x=156 fill=#00c7a7 /><rect x=168 fill=#00c7a7 /><rect x=180 fill=#00c7a6 /><rect x=192 fill=#00c7a6 /><rect x=204 fill=#00c7a5 /><rect x=216 fill=#00c7a5 /><rect x=228 fill=#00c7a4 /><rect x=240 fill=#00c7a4 /><rect x=252 fill=#00c7a3 /><rect x=264 fill=#00c7a2 /><rect x=276 fill=#00c7a2 /><rect x=288 fill=#00c7a1 /><rect x=300 fill=#00c7a1 /><rect x=312 fill=#00c7a0 /><rect x=324 fill=#00c79f /><rect x=336 fill=#00c79f /><rect x=348 fill=#00c79e /><rect x=360 fill=#00c79d /><rect x=372 fill=#00c79c /><rect x=384 fill=#00c79b /><rect x=396 fill=#00c79a /><rect x=408 fill=#00c79a /><rect x=420 fill=#00c799 /><rect x=432 fill=#00c798 /><rect x=444 fill=#00c797 /><rect x=456 fill=#00c796 /><rect x=468 fill=#00c794 /><rect x=480 fill=#00c793 /><rect x=492 fill=#00c792 /><rect x=504 fill=#00c791 /><rect x=516 fill=#00c78f /><rect x=528 fill=#00c78e /><rect x=540 fill=#00c78c /><rect x=552 fill=#00c78b /><rect x=564 fill=#00c789 /><rect x=576 fill=#00c787 /><rect x=588 fill=#00c785 /><rect x=600 fill=#00c783 /><rect x=612 fill=#00c781 /><rect x=624 fill=#00c77f /><rect x=636 fill=#00c77c /><rect x=648 fill=#00c779 /><rect x=660 fill=#00c776 /><rect x=672 fill=#00c773 /><rect x=684 fill=#00c76f /><rect x=696 fill=#00c76b /><rect x=708 fill=#00c767 /><rect x=720 fill=#00c762 /><rect x=732 fill=#00c75c /><rect x=744 fill=#00c756 /><rect x=756 fill=#00c74e /><rect x=768 fill=#1dc749 /><rect x=780 fill=#2fc747 /><rect x=792 fill=#3cc744 /><rect x=804 fill=#46c742 /><rect x=816 fill=#4fc740 /><rect x=828 fill=#57c73d /><rect x=840 fill=#5ec73a /><rect x=852 fill=#65c737 /><rect x=864 fill=#6bc734 /><rect x=876 fill=#71c730 /><rect x=888 fill=#76c72c /><rect x=900 fill=#7cc728 /><rect x=912 fill=#81c722 /><rect x=924 fill=#86c71b /><rect x=936 fill=#8bc711 /><rect x=948 fill=#90c700 /><rect x=960 fill=#96c700 /><rect x=972 fill=#9bc700 /><rect x=984 fill=#9fc700 /><rect x=996 fill=#a4c700 /><rect x=1008 fill=#a9c700 /><rect x=1020 fill=#adc700 /><rect x=1032 fill=#b1c700 /><rect x=1044 fill=#b5c700 /><rect x=1056 fill=#b9c700 /><rect x=1068 fill=#bdc700 /><rect x=1080 fill=#c1c700 /><rect x=1092 fill=#c5c700 /><rect x=1104 fill=#c7c500 /><rect x=1116 fill=#c7c200 /><rect x=1128 fill=#c7bf00 /><rect x=1140 fill=#c7bc00 /><rect x=1152 fill=#c7b900 /><rect x=1164 fill=#c7b600 /><rect x=1176 fill=#c7b300 /><rect x=1188 fill=#c7b100 /><rect x=1200 fill=#c7ae00 /></g>
<g transform="translate(0,540)"><rect x=144 fill=#00c7a9 /><rect x=156 fill=#00c7a9 /><rect x=168 fill=#00c7a8 /><rect x=180 fill=#00c7a8 /><rect x=192 fill=#00c7a7 /><rect x=204 fill=#00c7a7 /><rect x=216 fill=#00c7a6 /><rect x=228 fill=#00c7a6 /><rect x=240 fill=#00c7a5 /><rect x=252 fill=#00c7a5 /><rect x=264 fill=#00c7a4 /><rect x=276 fill=#00c7a4 /><rect x=288 fill=#00c7a3 /><rect x=300 fill=#00c7a3 /><rect x=312 fill=#00c7a2 /><rect x=324 fill=#00c7a1 /><rect x=336 fill=#00c7a1 /><rect x=348 fill=#00c7a0 /><rect x=360 fill=#00c79f /><rect x=372 fill=#00c79e /><rect x=384 fill=#00c79e /><rect x=396 fill=#00c79d /><rect x=408 fill=#00c79c /><rect x=420 fill=#00c79b /><rect x=432 fill=#00c79a /><rect x=444 fill=#00c799 /><rect x=456 fill=#00c798 /><rect x=468 fill=#00c797 /><rect x=480 fill=#00c796 /><rect x=492 fill=#00c794 /><rect x=504 fill=#00c793 /><rect x=516 fill=#00c792 /><rect x=528 fill=#00c790 /><rect x=540 fill=#00c78f /><rect x=552 fill=#00c78d /><rect x=564 fill=#00c78c /><rect x=576 fill=#00c78a /><rect x=588 fill=#00c788 /><rect x=600 fill=#00c786 /><rect x=612 fill=#00c784 /><rect x=624 fill=#00c781 /><rect x=636 fill=#00c77f /><rect x=648 fill=#00c77c /><rect x=660 fill=#00c779 /><rect x=672 fill=#00c776 /><rect x=684 fill=#00c772 /><rect x=696 fill=#00c76e /><rect x=708 fill=#00c76a /><rect x=720 fill=#00c765 /><rect x=732 fill=#00c760 /><rect x=744 fill=#00c759 /><rect x=756 fill=#14c753 /><rect x=768 fill=#2cc751 /><rect x=780 fill=#3ac74f /><rect x=792 fill=#44c74d /><rect x=804 fill=#4ec74b /><rect x=816 fill=#56c749 /><rect x=828 fill=#5dc747 /><rect x=840 fill=#64c745 /><rect x=852 fill=#6bc742 /><rect x=864 fill=#71c740 /><rect x=876 fill=#77c73d /><rect x=888 fill=#7cc73a /><rect x=900 fill=#82c737 /><rect x=912 fill=#87c733 /><rect x=924 fill=#8cc72f /><rect x=936 fill=#91c72a /><rect x=948 fill=#96c725 /><rect x=960 fill=#9bc71e /><rect x=972 fill=#9fc715 /><rect x=984 fill=#a4c700 /><rect x=996 fill=#a9c700 /><rect x=1008 fill=#aec700 /><rect x=1020 fill=#b2c700 /><rect x=1032 fill=#b6c700 /><rect x=1044 fill=#bbc700 /><rect x=1056 fill=#bfc700 /><rect x=1068 fill=#c3c700 /><rect x=1080 fill=#c7c700 /><rect x=1092 fill=#c7c300 /><rect x=1104 fill=#c7c000 /><rect x=1116 fill=#c7bc00 /><rect x=1128 fill=#c7b900 /><rect x=1140 fill=#c7b600 /><rect x=1152 fill=#c7b300 /><rect x=1164 fill=#c7b000 /><rect x=1176 fill=#c7ae00 /><rect x=1188 fill=#c7ab00 /><rect x=1200 fill=#c7a900 /><rect x=1212 fill=#c7a700 /><rect x=1224 fill=#c7a500 /></g>
<g transform="translate(0,552)"><rect x=156 fill=#00c7ab /><rect x=168 fill=#00c7aa /><rect x=180 fill=#00c7aa /><rect x=192 fill=#00c7a9 /><rect x=204 fill=#00c7a9 /><rect x=216 fill=#00c7a8 /><rect x=228 fill=#00c7a8 /><rect x=240 fill=#00c7a7 /><rect x=252 fill=#00c7a7 /><rect x=264 fill=#00c7a6 /><rect x=276 fill=#00c7a6 /><rect x=288 fill=#00c7a5 /><rect x=300 fill=#00c7a5 /><rect x=312 fill=#00c7a4 /><rect x=324 fill=#00c7a3 /><rect x=336 fill=#00c7a3 /><rect x=348 fill=#00c7a2 /><rect x=360 fill=#00c7a1 /><rect x=372 fill=#00c7a1 /><rect x=384 fill=#00c7a0 /><rect x=396 fill=#00c79f /><rect x=408 fill=#00c79e /><rect x=420 fill=#00c79d /><rect x=432 fill=#00c79c /><rect x=444 fill=#00c79b /><rect x=456 fill=#00c79a /><rect x=468 fill=#00c799 /><rect x=480 fill=#00c798 /><rect x=492 fill=#00c797 /><rect x=504 fill=#00c796 /><rect x=516 fill=#00c794 /><rect x=528 fill=#00c793 /><rect x=540 fill=#00c792 /><rect x=552 fill=#00c790 /><rect x=564 fill=#00c78e /><rect x=576 fill=#00c78d /><rect x=588 fill=#00c78b /><rect x=600 fill=#00c789 /><rect x=612 fill=#00c787 /><rect x=624 fill=#00c784 /><rect x=636 fill=#00c782 /><rect x=648 fill=#00c77f /><rect x=660 fill=#00c77c /><rect x=672 fill=#00c779 /><rect x=684 fill=#00c776 /><rect x=696 fill=#00c772 /><rect x=708 fill=#00c76d /><rect x=720 fill=#00c768 /><rect x=732 fill=#00c763 /><rect x=744 fill=#00c75c /><rect x=756 fill=#27c75b /><rect x=768 fill=#37c759 /><rect x=780 fill=#43c757 /><rect x=792 fill=#4cc756 /><rect x=804 fill=#55c754 /><rect x=816 fill=#5dc752 /><rect x=828 fill=#64c750 /><rect x=840 fill=#6bc74e /><rect x=852 fill=#71c74c /><rect x=864 fill=#77c74a /><rect x=876 fill=#7dc748 /><rect x=888 fill=#82c745 /><rect x=900 fill=#88c743 /><rect x=912 fill=#8dc740 /><rect x=924 fill=#92c73d /><rect x=936 fill=#97c739 /><rect x=948 fill=#9cc736 /><rect x=960 fill=#a1c732 /><rect x=972 fill=#a5c72d /><rect x=984 fill=#aac728 /><rect x=996 fill=#afc722 /><rect x=1008 fill=#b3c719 /><rect x=1020 fill=#b8c707 /><rect x=1032 fill=#bcc700 /><rect x=1044 fill=#c1c700 /><rect x=1056 fill=#c5c700 /><rect x=1068 fill=#c7c500 /><rect x=1080 fill=#c7c100 /><rect x=1092 fill=#c7bd00 /><rect x=1104 fill=#c7ba00 /><rect x=1116 fill=#c7b600 /><rect x=1128 fill=#c7b300 /><rect x=1140 fill=#c7b000 /><rect x=1152 fill=#c7ad00 /><rect x=1164 fill=#c7ab00 /><rect x=1176 fill=#c7a800 /><rect x=1188 fill=#c7a600 /><rect x=1200 fill=#c7a400 /><rect x=1212 fill=#c7a100 /><rect x=1224 fill=#c79f00 /><rect x=1236 fill=#c79d00 /><rect x=1248 fill=#c79b00 /><rect x=1260 fill=#c79900 /></g>
<g transform="translate(0,564)"><rect x=156 fill=#00c7ac /><rect x=168 fill=#00c7ac /><rect x=180 fill=#00c7ac /><rect x=192 fill=#00c7ab /><rect x=204 fill=#00c7ab /><rect x=216 fill=#00c7aa /><rect x=228 fill=#00c7aa /><rect x=240 fill=#00c7a9 /><rect x=252 fill=#00c7a9 /><rect x=264 fill=#00c7a8 /><rect x=276 fill=#00c7a8 /><rect x=288 fill=#00c7a7 /><rect x=300 fill=#00c7a7 /><rect x=312 fill=#00c7a6 /><rect x=324 fill=#00c7a6 /><rect x=336 fill=#00c7a5 /><rect x=348 fill=#00c7a4 /><rect x=360 fill=#00c7a4 /><rect x=372 fill=#00c7a3 /><rect x=384 fill=#00c7a2 /><rect x=396 fill=#00c7a1 /><rect x=408 fill=#00c7a0 /><rect x=420 fill=#00c7a0 /><rect x=432 fill=#00c79f /><rect x=444 fill=#00c79e /><rect x=456 fill=#00c79d /><rect x=468 fill=#00c79c /><rect x=480 fill=#00c79b /><rect x=492 fill=#00c79a /><rect x=504 fill=#00c798 /><rect x=516 fill=#00c797 /><rect x=528 fill=#00c796 /><rect x=540 fill=#00c794 /><rect x=552 fill=#00c793 /><rect x=564 fill=#00c791 /><rect x=576 fill=#00c790 /><rect x=588 fill=#00c78e /><rect x=600 fill=#00c78c /><rect x=612 fill=#00c78a /><rect x=624 fill=#00c788 /><rect x=636 fill=#00c785 /><rect x=648 fill=#00c783 /><rect x=660 fill=#00c780 /><rect x=672 fill=#00c77d /><rect x=684 fill=#00c779 /><rect x=696 fill=#00c775 /><rect x=708 fill=#00c771 /><rect x=720 fill=#00c76c /><rect x=732 fill=#00c767 /><rect x=744 fill=#22c764 /><rect x=756 fill=#34c762 /><rect x=768 fill=#41c761 /><rect x=780 fill=#4bc75f /><rect x=792 fill=#54c75e /><rect x=804 fill=#5cc75c /><rect x=816 fill=#63c75b /><rect x=828 fill=#6ac759 /><rect x=840 fill=#71c757 /><rect x=852 fill=#77c755 /><rect x=864 fill=#7dc753 /><rect x=876 fill=#83c751 /><rect x=888 fill=#88c74f /><rect x=900 fill=#8ec74d /><rect x=912 fill=#93c74b /><rect x=924 fill=#98c748 /><rect x=936 fill=#9dc746 /><rect x=948 fill=#a2c743 /><rect x=960 fill=#a7c740 /><rect x=972 fill=#acc73c /><rect x=984 fill=#b1c739 /><rect x=996 fill=#b5c735 /><rect x=1008 fill=#bac730 /><rect x=1020 fill=#bec72b /><rect x=1032 fill=#c3c725 /><rect x=1044 fill=#c7c61d /><rect x=1056 fill=#c7c20f /><rect x=1068 fill=#c7be00 /><rect x=1080 fill=#c7ba00 /><rect x=1092 fill=#c7b600 /><rect x=1104 fill=#c7b300 /><rect x=1116 fill=#c7b000 /><rect x=1128 fill=#c7ad00 /><rect x=1140 fill=#c7aa00 /><rect x=1152 fill=#c7a700 /><rect x=1164 fill=#c7a500 /><rect x=1176 fill=#c7a200 /><rect x=1188 fill=#c7a000 /><rect x=1200 fill=#c79e00 /><rect x=1212 fill=#c79c00 /><rect x=1224 fill=#c79a00 /><rect x=1236 fill=#c79800 /><rect x=1248 fill=#c79600 /><rect x=1260 fill=#c79400 /><rect x=1272 fill=#c79200 /><rect x=1284 fill=#c79100 /><rect x=1296 fill=#c78f00 /></g>
<g transform="translate(0,576)"><rect x=156 fill=#00c7ae /><rect x=168 fill=#00c7ae /><rect x=180 fill=#00c7ae /><rect x=192 fill=#00c7ad /><rect x=204 fill=#00c7ad /><rect x=216 fill=#00c7ac /><rect x=228 fill=#00c7ac /><rect x=240 fill=#00c7ab /><rect x=252 fill=#00c7ab /><rect x=264 fill=#00c7aa /><rect x=276 fill=#00c7aa /><rect x=288 fill=#00c7a9 /><rect x=300 fill=#00c7a9 /><rect x=312 fill=#00c7a8 /><rect x=324 fill=#00c7a8 /><rect x=336 fill=#00c7a7 /><rect x=348 fill=#00c7a7 /><rect x=360 fill=#00c7a6 /><rect x=372 fill=#00c7a5 /><rect x=384 fill=#00c7a4 /><rect x=396 fill=#00c7a4 /><rect x=408 fill=#00c7a3 /><rect x=420 fill=#00c7a2 /><rect x=432 fill=#00c7a1 /><rect x=444 fill=#00c7a0 /><rect x=456 fill=#00c7a0 /><rect x=468 fill=#00c79f /><rect x=480 fill=#00c79d /><rect x=492 fill=#00c79c /><rect x=504 fill=#00c79b /><rect x=516 fill=#00c79a /><rect x=528 fill=#00c799 /><rect x=540 fill=#00c797 /><rect x=552 fill=#00c796 /><rect x=564 fill=#00c794 /><rect x=576 fill=#00c793 /><rect x=588 fill=#00c791 /><rect x=600 fill=#00c78f /><rect x=612 fill=#00c78d /><rect x=624 fill=#00c78b /><rect x=636 fill=#00c789 /><rect x=648 fill=#00c786 /><rect x=660 fill=#00c783 /><rect x=672 fill=#00c780 /><rect x=684 fill=#00c77d /><rect x=696 fill=#00c779 /><rect x=708 fill=#00c775 /><rect x=720 fill=#00c770 /><rect x=732 fill=#1bc76c /><rect x=744 fill=#30c76b /><rect x=756 fill=#3ec76a /><rect x=768 fill=#49c769 /><rect x=780 fill=#53c767 /><rect x=792 fill=#5bc766 /><rect x=804 fill=#63c764 /><rect x=816 fill=#6ac763 /><rect x=828 fill=#71c761 /><rect x=840 fill=#77c760 /><rect x=852 fill=#7ec75e /><rect x=864 fill=#84c75d /><rect x=876 fill=#89c75b /><rect x=888 fill=#8fc759 /><rect x=900 fill=#94c757 /><rect x=912 fill=#9ac755 /><rect x=924 fill=#9fc753 /><rect x=936 fill=#a4c751 /><rect x=948 fill=#a9c74e /><rect x=960 fill=#aec74c /><rect x=972 fill=#b3c749 /><rect x=984 fill=#b7c746 /><rect x=996 fill=#bcc743 /><rect x=1008 fill=#c1c740 /><rect x=1020 fill=#c6c73c /><rect x=1032 fill=#c7c437 /><rect x=1044 fill=#c7bf31 /><rect x=1056 fill=#c7bb2c /><rect x=1068 fill=#c7b725 /><rect x=1080 fill=#c7b31d /><rect x=1092 fill=#c7b013 /><rect x=1104 fill=#c7ac00 /><rect x=1116 fill=#c7a900 /><rect x=1128 fill=#c7a600 /><rect x=1140 fill=#c7a400 /><rect x=1152 fill=#c7a100 /><rect x=1164 fill=#c79f00 /><rect x=1176 fill=#c79c00 /><rect x=1188 fill=#c79a00 /><rect x=1200 fill=#c79800 /><rect x=1212 fill=#c79600 /><rect x=1224 fill=#c79400 /><rect x=1236 fill=#c79200 /><rect x=1248 fill=#c79000 /><rect x=1260 fill=#c78e00 /><rect x=1272 fill=#c78d00 /><rect x=1284 fill=#c78b00 /><rect x=1296 fill=#c78900 /><rect x=1308 fill=#c78800 /><rect x=1320 fill=#c78600 /></g>
<g transform="translate(0,588)"><rect x=156 fill=#00c7b0 /><rect x=168 fill=#00c7b0 /><rect x=180 fill=#00c7af /><rect x=192 fill=#00c7af /><rect x=204 fill=#00c7af /><rect x=216 fill=#00c7ae /><rect x=228 fill=#00c7ae /><rect x=240 fill=#00c7ae /><rect x=252 fill=#00c7ad /><rect x=264 fill=#00c7ad /><rect x=276 fill=#00c7ac /><rect x=288 fill=#00c7ac /><rect x=300 fill=#00c7ab /><rect x=312 fill=#00c7ab /><rect x=324 fill=#00c7aa /><rect x=336 fill=#00c7aa /><rect x=348 fill=#00c7a9 /><rect x=360 fill=#00c7a8 /><rect x=372 fill=#00c7a8 /><rect x=384 fill=#00c7a7 /><rect x=396 fill=#00c7a6 /><rect x=408 fill=#00c7a6 /><rect x=420 fill=#00c7a5 /><rect x=432 fill=#00c7a4 /><rect x=444 fill=#00c7a3 /><rect x=456 fill=#00c7a2 /><rect x=468 fill=#00c7a1 /><rect x=480 fill=#00c7a0 /><rect x=492 fill=#00c79f /><rect x=504 fill=#00c79e /><rect x=516 fill=#00c79d /><rect x=528 fill=#00c79c /><rect x=540 fill=#00c79b /><rect x=552 fill=#00c799 /><rect x=564 fill=#00c798 /><rect x=576 fill=#00c796 /><rect x=588 fill=#00c794 /><rect x=600 fill=#00c793 /><rect x=612 fill=#00c791 /><rect x=624 fill=#00c78f /><rect x=636 fill=#00c78c /><rect x=648 fill=#00c78a /><rect x=660 fill=#00c787 /><rect x=672 fill=#00c784 /><rect x=684 fill=#00c781 /><rect x=696 fill=#00c77d /><rect x=708 fill=#00c779 /><rect x=720 fill=#10c775 /><rect x=732 fill=#2cc774 /><rect x=744 fill=#3cc772 /><rect x=756 fill=#48c771 /><rect x=768 fill=#52c770 /><rect x=780 fill=#5bc76f /><rect x=792 fill=#63c76e /><rect x=804 fill=#6ac76c /><rect x=816 fill=#71c76b /><rect x=828 fill=#78c76a /><rect x=840 fill=#7ec768 /><rect x=852 fill=#84c767 /><rect x=864 fill=#8ac765 /><rect x=876 fill=#90c764 /><rect x=888 fill=#95c762 /><rect x=900 fill=#9bc760 /><rect x=912 fill=#a0c75f /><rect x=924 fill=#a5c75d /><rect x=936 fill=#abc75b /><rect x=948 fill=#b0c759 /><rect x=960 fill=#b5c757 /><rect x=972 fill=#bac754 /><rect x=984 fill=#bfc752 /><rect x=996 fill=#c3c74f /><rect x=1008 fill=#c7c64c /><rect x=1020 fill=#c7c148 /><rect x=1032 fill=#c7bd43 /><rect x=1044 fill=#c7b83e /><rect x=1056 fill=#c7b43a /><rect x=1068 fill=#c7b135 /><rect x=1080 fill=#c7ad30 /><rect x=1092 fill=#c7a92a /><rect x=1104 fill=#c7a625 /><rect x=1116 fill=#c7a31e /><rect x=1128 fill=#c7a015 /><rect x=1140 fill=#c79d00 /><rect x=1152 fill=#c79a00 /><rect x=1164 fill=#c79800 /><rect x=1176 fill=#c79600 /><rect x=1188 fill=#c79300 /><rect x=1200 fill=#c79100 /><rect x=1212 fill=#c78f00 /><rect x=1224 fill=#c78d00 /><rect x=1236 fill=#c78c00 /><rect x=1248 fill=#c78a00 /><rect x=1260 fill=#c78800 /><rect x=1272 fill=#c78700 /><rect x=1284 fill=#c78500 /><rect x=1296 fill=#c78400 /><rect x=1308 fill=#c78200 /><rect x=1320 fill=#c78100 /><rect x=1332 fill=#c77f00 /><rect x=1344 fill=#c77e00 /><rect x=1356 fill=#c77d00 /></g>
<g transform="translate(0,600)"><rect x=168 fill=#00c7b2 /><rect x=180 fill=#00c7b2 /><rect x=192 fill=#00c7b1 /><rect x=204 fill=#00c7b1 /><rect x=216 fill=#00c7b0 /><rect x=228 fill=#00c7b0 /><rect x=240 fill=#00c7b0 /><rect x=252 fill=#00c7af /><rect x=264 fill=#00c7af /><rect x=276 fill=#00c7ae /><rect x=288 fill=#00c7ae /><rect x=300 fill=#00c7ae /><rect x=312 fill=#00c7ad /><rect x=324 fill=#00c7ad /><rect x=336 fill=#00c7ac /><rect x=348 fill=#00c7ab /><rect x=360 fill=#00c7ab /><rect x=372 fill=#00c7aa /><rect x=384 fill=#00c7aa /><rect x=396 fill=#00c7a9 /><rect x=408 fill=#00c7a8 /><rect x=420 fill=#00c7a8 /><rect x=432 fill=#00c7a7 /><rect x=444 fill=#00c7a6 /><rect x=456 fill=#00c7a5 /><rect x=468 fill=#00c7a4 /><rect x=480 fill=#00c7a3 /><rect x=492 fill=#00c7a2 /><rect x=504 fill=#00c7a1 /><rect x=516 fill=#00c7a0 /><rect x=528 fill=#00c79f /><rect x=540 fill=#00c79e /><rect x=552 fill=#00c79d /><rect x=564 fill=#00c79b /><rect x=576 fill=#00c79a /><rect x=588 fill=#00c798 /><rect x=600 fill=#00c796 /><rect x=612 fill=#00c794 /><rect x=624 fill=#00c792 /><rect x=636 fill=#00c790 /><rect x=648 fill=#00c78e /><rect x=660 fill=#00c78b /><rect x=672 fill=#00c788 /><rect x=684 fill=#00c785 /><rect x=696 fill=#00c781 /><rect x=708 fill=#00c77d /><rect x=720 fill=#28c77c /><rect x=732 fill=#39c77b /><rect x=744 fill=#46c77a /><rect x=756 fill=#50c779 /><rect x=768 fill=#5ac778 /><rect x=780 fill=#62c777 /><rect x=792 fill=#6ac776 /><rect x=804 fill=#71c774 /><rect x=816 fill=#78c773 /><rect x=828 fill=#7fc772 /><rect x=840 fill=#85c771 /><rect x=852 fill=#8bc76f /><rect x=864 fill=#91c76e /><rect x=876 fill=#97c76d /><rect x=888 fill=#9cc76b /><rect x=900 fill=#a2c76a /><rect x=912 fill=#a7c768 /><rect x=924 fill=#adc766 /><rect x=936 fill=#b2c765 /><rect x=948 fill=#b7c763 /><rect x=960 fill=#bcc761 /><rect x=972 fill=#c1c75f /><rect x=984 fill=#c6c75d /><rect x=996 fill=#c7c359 /><rect x=1008 fill=#c7be55 /><rect x=1020 fill=#c7ba50 /><rect x=1032 fill=#c7b64c /><rect x=1044 fill=#c7b248 /><rect x=1056 fill=#c7ae44 /><rect x=1068 fill=#c7aa40 /><rect x=1080 fill=#c7a73c /><rect x=1092 fill=#c7a337 /><rect x=1104 fill=#c7a033 /><rect x=1116 fill=#c79d2f /><rect x=1128 fill=#c79a2a /><rect x=1140 fill=#c79724 /><rect x=1152 fill=#c7941e /><rect x=1164 fill=#c79117 /><rect x=1176 fill=#c78f09 /><rect x=1188 fill=#c78d00 /><rect x=1200 fill=#c78b00 /><rect x=1212 fill=#c78900 /><rect x=1224 fill=#c78700 /><rect x=1236 fill=#c78500 /><rect x=1248 fill=#c78300 /><rect x=1260 fill=#c78200 /><rect x=1272 fill=#c78000 /><rect x=1284 fill=#c77f00 /><rect x=1296 fill=#c77d00 /><rect x=1308 fill=#c77c00 /><rect x=1320 fill=#c77b00 /><rect x=1332 fill=#c77900 /><rect x=1344 fill=#c77800 /><rect x=1356 fill=#c77700 /><rect x=1368 fill=#c77600 /><rect x=1380 fill=#c77500 /></g>
<g transform="translate(0,612)"><rect x=168 fill=#00c7b4 /><rect x=180 fill=#00c7b4 /><rect x=192 fill=#00c7b3 /><rect x=204 fill=#00c7b3 /><rect x=216 fill=#00c7b3 /><rect x=228 fill=#00c7b2 /><rect x=240 fill=#00c7b2 /><rect x=252 fill=#00c7b2 /><rect x=264 fill=#00c7b1 /><rect x=276 fill=#00c7b1 /><rect x=288 fill=#00c7b0 /><rect x=300 fill=#00c7b0 /><rect x=312 fill=#00c7b0 /><rect x=324 fill=#00c7af /><rect x=336 fill=#00c7af /><rect x=348 fill=#00c7ae /><rect x=360 fill=#00c7ae /><rect x=372 fill=#00c7ad /><rect x=384 fill=#00c7ac /><rect x=396 fill=#00c7ac /><rect x=408 fill=#00c7ab /><rect x=420 fill=#00c7aa /><rect x=432 fill=#00c7aa /><rect x=444 fill=#00c7a9 /><rect x=456 fill=#00c7a8 /><rect x=468 fill=#00c7a7 /><rect x=480 fill=#00c7a7 /><rect x=492 fill=#00c7a6 /><rect x=504 fill=#00c7a5 /><rect x=516 fill=#00c7a4 /><rect x=528 fill=#00c7a3 /><rect x=540 fill=#00c7a1 /><rect x=552 fill=#00c7a0 /><rect x=564 fill=#00c79f /><rect x=576 fill=#00c79d /><rect x=588 fill=#00c79c /><rect x=600 fill=#00c79a /><rect x=612 fill=#00c799 /><rect x=624 fill=#00c797 /><rect x=636 fill=#00c794 /><rect x=648 fill=#00c792 /><rect x=660 fill=#00c790 /><rect x=672 fill=#00c78d /><rect x=684 fill=#00c78a /><rect x=696 fill=#00c786 /><rect x=708 fill=#22c784 /><rect x=720 fill=#36c783 /><rect x=732 fill=#44c782 /><rect x=744 fill=#4fc781 /><rect x=756 fill=#59c781 /><rect x=768 fill=#62c780 /><rect x=780 fill=#6ac77f /><rect x=792 fill=#71c77e /><rect x=804 fill=#78c77d /><rect x=816 fill=#7fc77c /><rect x=828 fill=#86c77a /><rect x=840 fill=#8cc779 /><rect x=852 fill=#92c778 /><rect x=864 fill=#98c777 /><rect x=876 fill=#9ec776 /><rect x=888 fill=#a4c774 /><rect x=900 fill=#a9c773 /><rect x=912 fill=#afc772 /><rect x=924 fill=#b4c770 /><rect x=936 fill=#b9c76f /><rect x=948 fill=#bfc76d /><rect x=960 fill=#c4c76b /><rect x=972 fill=#c7c569 /><rect x=984 fill=#c7c064 /><rect x=996 fill=#c7bb60 /><rect x=1008 fill=#c7b75c /><rect x=1020 fill=#c7b358 /><rect x=1032 fill=#c7af54 /><rect x=1044 fill=#c7ab50 /><rect x=1056 fill=#c7a74c /><rect x=1068 fill=#c7a449 /><rect x=1080 fill=#c7a045 /><rect x=1092 fill=#c79d41 /><rect x=1104 fill=#c79a3d /><rect x=1116 fill=#c7973a /><rect x=1128 fill=#c79436 /><rect x=1140 fill=#c79132 /><rect x=1152 fill=#c78e2d /><rect x=1164 fill=#c78c29 /><rect x=1176 fill=#c78924 /><rect x=1188 fill=#c7871e /><rect x=1200 fill=#c78418 /><rect x=1212 fill=#c7820e /><rect x=1224 fill=#c78000 /><rect x=1236 fill=#c77e00 /><rect x=1248 fill=#c77c00 /><rect x=1260 fill=#c77b00 /><rect x=1272 fill=#c77900 /><rect x=1284 fill=#c77800 /><rect x=1296 fill=#c77700 /><rect x=1308 fill=#c77500 /><rect x=1320 fill=#c77400 /><rect x=1332 fill=#c77300 /><rect x=1344 fill=#c77200 /><rect x=1356 fill=#c77100 /><rect x=1368 fill=#c76f00 /><rect x=1380 fill=#c76e00 /><rect x=1392 fill=#c76d00 /><rect x=1404 fill=#c76c00 /><rect x=1416 fill=#c76b00 /></g>
<g transform="translate(0,624)"><rect x=168 fill=#00c7b6 /><rect x=180 fill=#00c7b6 /><rect x=192 fill=#00c7b6 /><rect x=204 fill=#00c7b5 /><rect x=216 fill=#00c7b5 /><rect x=228 fill=#00c7b5 /><rect x=240 fill=#00c7b4 /><rect x=252 fill=#00c7b4 /><rect x=264 fill=#00c7b4 /><rect x=276 fill=#00c7b3 /><rect x=288 fill=#00c7b3 /><rect x=300 fill=#00c7b3 /><rect x=312 fill=#00c7b2 /><rect x=324 fill=#00c7b2 /><rect x=336 fill=#00c7b1 /><rect x=348 fill=#00c7b1 /><rect x=360 fill=#00c7b0 /><rect x=372 fill=#00c7b0 /><rect x=384 fill=#00c7af /><rect x=396 fill=#00c7af /><rect x=408 fill=#00c7ae /><rect x=420 fill=#00c7ae /><rect x=432 fill=#00c7ad /><rect x=444 fill=#00c7ac /><rect x=456 fill=#00c7ab /><rect x=468 fill=#00c7ab /><rect x=480 fill=#00c7aa /><rect x=492 fill=#00c7a9 /><rect x=504 fill=#00c7a8 /><rect x=516 fill=#00c7a7 /><rect x=528 fill=#00c7a6 /><rect x=540 fill=#00c7a5 /><rect x=552 fill=#00c7a4 /><rect x=564 fill=#00c7a3 /><rect x=576 fill=#00c7a2 /><rect x=588 fill=#00c7a0 /><rect x=600 fill=#00c79f /><rect x=612 fill=#00c79d /><rect x=624 fill=#00c79b /><rect x=636 fill=#00c799 /><rect x=648 fill=#00c797 /><rect x=660 fill=#00c795 /><rect x=672 fill=#00c792 /><rect x=684 fill=#00c78f /><rect x=696 fill=#19c78c /><rect x=708 fill=#32c78c /><rect x=720 fill=#41c78b /><rect x=732 fill=#4dc78a /><rect x=744 fill=#58c789 /><rect x=756 fill=#61c788 /><rect x=768 fill=#69c788 /><rect x=780 fill=#71c787 /><rect x=792 fill=#79c786 /><rect x=804 fill=#80c785 /><rect x=816 fill=#87c784 /><rect x=828 fill=#8dc783 /><rect x=840 fill=#93c782 /><rect x=852 fill=#9ac781 /><rect x=864 fill=#a0c780 /><rect x=876 fill=#a5c77f /><rect x=888 fill=#abc77e /><rect x=900 fill=#b1c77c /><rect x=912 fill=#b6c77b /><rect x=924 fill=#bcc77a /><rect x=936 fill=#c1c778 /><rect x=948 fill=#c7c777 /><rect x=960 fill=#c7c273 /><rect x=972 fill=#c7bd6e /><rect x=984 fill=#c7b86a /><rect x=996 fill=#c7b466 /><rect x=1008 fill=#c7af62 /><rect x=1020 fill=#c7ab5e /><rect x=1032 fill=#c7a85b /><rect x=1044 fill=#c7a457 /><rect x=1056 fill=#c7a053 /><rect x=1068 fill=#c79d50 /><rect x=1080 fill=#c79a4c /><rect x=1092 fill=#c79749 /><rect x=1104 fill=#c79446 /><rect x=1116 fill=#c79142 /><rect x=1128 fill=#c78e3f /><rect x=1140 fill=#c78b3b /><rect x=1152 fill=#c78838 /><rect x=1164 fill=#c78634 /><rect x=1176 fill=#c78330 /><rect x=1188 fill=#c7812d /><rect x=1200 fill=#c77e28 /><rect x=1212 fill=#c77c24 /><rect x=1224 fill=#c77a1f /><rect x=1236 fill=#c77819 /><rect x=1248 fill=#c77510 /><rect x=1260 fill=#c77400 /><rect x=1272 fill=#c77200 /><rect x=1284 fill=#c77100 /><rect x=1296 fill=#c77000 /><rect x=1308 fill=#c76e00 /><rect x=1320 fill=#c76d00 /><rect x=1332 fill=#c76c00 /><rect x=1344 fill=#c76b00 /><rect x=1356 fill=#c76a00 /><rect x=1368 fill=#c76900 /><rect x=1380 fill=#c76800 /><rect x=1392 fill=#c76700 /><rect x=1404 fill=#c76600 /><rect x=1416 fill=#c76500 /><rect x=1428 fill=#c76400 /><rect x=1440 fill=#c76300 /></g>
<g transform="translate(0,636)"><rect x=180 fill=#00c7b8 /><rect x=192 fill=#00c7b8 /><rect x=204 fill=#00c7b8 /><rect x=216 fill=#00c7b7 /><rect x=228 fill=#00c7b7 /><rect x=240 fill=#00c7b7 /><rect x=252 fill=#00c7b6 /><rect x=264 fill=#00c7b6 /><rect x=276 fill=#00c7b6 /><rect x=288 fill=#00c7b5 /><rect x=300 fill=#00c7b5 /><rect x=312 fill=#00c7b5 /><rect x=324 fill=#00c7b4 /><rect x=336 fill=#00c7b4 /><rect x=348 fill=#00c7b4 /><rect x=360 fill=#00c7b3 /><rect x=372 fill=#00c7b3 /><rect x=384 fill=#00c7b2 /><rect x=396 fill=#00c7b2 /><rect x=408 fill=#00c7b1 /><rect x=420 fill=#00c7b1 /><rect x=432 fill=#00c7b0 /><rect x=444 fill=#00c7b0 /><rect x=456 fill=#00c7af /><rect x=468 fill=#00c7ae /><rect x=480 fill=#00c7ae /><rect x=492 fill=#00c7ad /><rect x=504 fill=#00c7ac /><rect x=516 fill=#00c7ab /><rect x=528 fill=#00c7aa /><rect x=540 fill=#00c7a9 /><rect x=552 fill=#00c7a8 /><rect x=564 fill=#00c7a7 /><rect x=576 fill=#00c7a6 /><rect x=588 fill=#00c7a5 /><rect x=600 fill=#00c7a3 /><rect x=612 fill=#00c7a2 /><rect x=624 fill=#00c7a0 /><rect x=636 fill=#00c79e /><rect x=648 fill=#00c79c /><rect x=660 fill=#00c79a /><rect x=672 fill=#00c797 /><rect x=684 fill=#03c795 /><rect x=696 fill=#2ec794 /><rect x=708 fill=#3fc793 /><rect x=720 fill=#4cc793 /><rect x=732 fill=#57c792 /><rect x=744 fill=#60c791 /><rect x=756 fill=#69c791 /><rect x=768 fill=#71c790 /><rect x=780 fill=#79c78f /><rect x=792 fill=#81c78e /><rect x=804 fill=#88c78d /><rect x=816 fill=#8ec78d /><rect x=828 fill=#95c78c /><rect x=840 fill=#9bc78b /><rect x=852 fill=#a1c78a /><rect x=864 fill=#a7c789 /><rect x=876 fill=#adc788 /><rect x=888 fill=#b3c787 /><rect x=900 fill=#b9c786 /><rect x=912 fill=#bfc785 /><rect x=924 fill=#c4c784 /><rect x=936 fill=#c7c481 /><rect x=948 fill=#c7be7c /><rect x=960 fill=#c7ba77 /><rect x=972 fill=#c7b573 /><rect x=984 fill=#c7b06f /><rect x=996 fill=#c7ac6b /><rect x=1008 fill=#c7a868 /><rect x=1020 fill=#c7a464 /><rect x=1032 fill=#c7a160 /><rect x=1044 fill=#c79d5d /><rect x=1056 fill=#c79a5a /><rect x=1068 fill=#c79656 /><rect x=1080 fill=#c79353 /><rect x=1092 fill=#c79050 /><rect x=1104 fill=#c78d4d /><rect x=1116 fill=#c78a49 /><rect x=1128 fill=#c78846 /><rect x=1140 fill=#c78543 /><rect x=1152 fill=#c78240 /><rect x=1164 fill=#c7803d /><rect x=1176 fill=#c77d3a /><rect x=1188 fill=#c77b36 /><rect x=1200 fill=#c77933 /><rect x=1212 fill=#c7762f /><rect x=1224 fill=#c7742c /><rect x=1236 fill=#c77228 /><rect x=1248 fill=#c77024 /><rect x=1260 fill=#c76e1f /><rect x=1272 fill=#c76c1a /><rect x=1284 fill=#c76a12 /><rect x=1296 fill=#c76800 /><rect x=1308 fill=#c76700 /><rect x=1320 fill=#c76500 /><rect x=1332 fill=#c76400 /><rect x=1344 fill=#c76300 /><rect x=1356 fill=#c76200 /><rect x=1368 fill=#c76100 /><rect x=1380 fill=#c76000 /><rect x=1392 fill=#c75f00 /><rect x=1404 fill=#c75f00 /><rect x=1416 fill=#c75e00 /><rect x=1428 fill=#c75d00 /><rect x=1440 fill=#c75c00 /><rect x=1452 fill=#c75b00 /><rect x=1464 fill=#c75a00 /><rect x=1476 fill=#c75a00 /></g>
<g transform="translate(0,648)"><rect x=180 fill=#00c7ba /><rect x=192 fill=#00c7ba /><rect x=204 fill=#00c7ba /><rect x=216 fill=#00c7ba /><rect x=228 fill=#00c7ba /><rect x=240 fill=#00c7b9 /><rect x=252 fill=#00c7b9 /><rect x=264 fill=#00c7b9 /><rect x=276 fill=#00c7b9 /><rect x=288 fill=#00c7b8 /><rect x=300 fill=#00c7b8 /><rect x=312 fill=#00c7b8 /><rect x=324 fill=#00c7b7 /><rect x=336 fill=#00c7b7 /><rect x=348 fill=#00c7b7 /><rect x=360 fill=#00c7b6 /><rect x=372 fill=#00c7b6 /><rect x=384 fill=#00c7b5 /><rect x=396 fill=#00c7b5 /><rect x=408 fill=#00c7b5 /><rect x=420 fill=#00c7b4 /><rect x=432 fill=#00c7b4 /><rect x=444 fill=#00c7b3 /><rect x=456 fill=#00c7b2 /><rect x=468 fill=#00c7b2 /><rect x=480 fill=#00c7b1 /><rect x=492 fill=#00c7b1 /><rect x=504 fill=#00c7b0 /><rect x=516 fill=#00c7af /><rect x=528 fill=#00c7ae /><rect x=540 fill=#00c7ae /><rect x=552 fill=#00c7ad /><rect x=564 fill=#00c7ac /><rect x=576 fill=#00c7ab /><rect x=588 fill=#00c7a9 /><rect x=600 fill=#00c7a8 /><rect x=612 fill=#00c7a7 /><rect x=624 fill=#00c7a5 /><rect x=636 fill=#00c7a4 /><rect x=648 fill=#00c7a2 /><rect x=660 fill=#00c7a0 /><rect x=672 fill=#00c79d /><rect x=684 fill=#28c79c /><rect x=696 fill=#3cc79c /><rect x=708 fill=#4ac79b /><rect x=720 fill=#55c79b /><rect x=732 fill=#60c79a /><rect x=744 fill=#69c79a /><rect x=756 fill=#72c799 /><rect x=768 fill=#7ac798 /><rect x=780 fill=#81c798 /><rect x=792 fill=#89c797 /><rect x=804 fill=#90c796 /><rect x=816 fill=#96c796 /><rect x=828 fill=#9dc795 /><rect x=840 fill=#a3c794 /><rect x=852 fill=#aac793 /><rect x=864 fill=#b0c792 /><rect x=876 fill=#b6c792 /><rect x=888 fill=#bcc791 /><rect x=900 fill=#c2c790 /><rect x=912 fill=#c7c68e /><rect x=924 fill=#c7c089 /><rect x=936 fill=#c7bb85 /><rect x=948 fill=#c7b680 /><rect x=960 fill=#c7b17c /><rect x=972 fill=#c7ad78 /><rect x=984 fill=#c7a974 /><rect x=996 fill=#c7a570 /><rect x=1008 fill=#c7a16c /><rect x=1020 fill=#c79d69 /><rect x=1032 fill=#c79a66 /><rect x=1044 fill=#c79662 /><rect x=1056 fill=#c7935f /><rect x=1068 fill=#c7905c /><rect x=1080 fill=#c78d59 /><rect x=1092 fill=#c78a56 /><rect x=1104 fill=#c78753 /><rect x=1116 fill=#c78450 /><rect x=1128 fill=#c7824d /><rect x=1140 fill=#c77f4a /><rect x=1152 fill=#c77c47 /><rect x=1164 fill=#c77a44 /><rect x=1176 fill=#c77741 /><rect x=1188 fill=#c7753e /><rect x=1200 fill=#c7733b /><rect x=1212 fill=#c77138 /><rect x=1224 fill=#c76e35 /><rect x=1236 fill=#c76c32 /><rect x=1248 fill=#c76a2e /><rect x=1260 fill=#c7682b /><rect x=1272 fill=#c76627 /><rect x=1284 fill=#c76423 /><rect x=1296 fill=#c7621f /><rect x=1308 fill=#c7601a /><rect x=1320 fill=#c75e14 /><rect x=1332 fill=#c75c0a /><rect x=1344 fill=#c75b00 /><rect x=1356 fill=#c75a00 /><rect x=1368 fill=#c75900 /><rect x=1380 fill=#c75800 /><rect x=1392 fill=#c75700 /><rect x=1404 fill=#c75700 /><rect x=1416 fill=#c75600 /><rect x=1428 fill=#c75500 /><rect x=1440 fill=#c75400 /><rect x=1452 fill=#c75400 /><rect x=1464 fill=#c75300 /><rect x=1476 fill=#c75200 /><rect x=1488 fill=#c75100 /><rect x=1500 fill=#c75100 /><rect x=1512 fill=#c75000 /></g>
<g transform="translate(0,660)"><rect x=192 fill=#00c7bd /><rect x=204 fill=#00c7bd /><rect x=216 fill=#00c7bc /><rect x=228 fill=#00c7bc /><rect x=240 fill=#00c7bc /><rect x=252 fill=#00c7bc /><rect x=264 fill=#00c7bc /><rect x=276 fill=#00c7bb /><rect x=288 fill=#00c7bb /><rect x=300 fill=#00c7bb /><rect x=312 fill=#00c7bb /><rect x=324 fill=#00c7ba /><rect x=336 fill=#00c7ba /><rect x=348 fill=#00c7ba /><rect x=360 fill=#00c7b9 /><rect x=372 fill=#00c7b9 /><rect x=384 fill=#00c7b9 /><rect x=396 fill=#00c7b8 /><rect x=408 fill=#00c7b8 /><rect x=420 fill=#00c7b8 /><rect x=432 fill=#00c7b7 /><rect x=444 fill=#00c7b7 /><rect x=456 fill=#00c7b6 /><rect x=468 fill=#00c7b6 /><rect x=480 fill=#00c7b5 /><rect x=492 fill=#00c7b5 /><rect x=504 fill=#00c7b4 /><rect x=516 fill=#00c7b4 /><rect x=528 fill=#00c7b3 /><rect x=540 fill=#00c7b2 /><rect x=552 fill=#00c7b1 /><rect x=564 fill=#00c7b0 /><rect x=576 fill=#00c7b0 /><rect x=588 fill=#00c7af /><rect x=600 fill=#00c7ad /><rect x=612 fill=#00c7ac /><rect x=624 fill=#00c7ab /><rect x=636 fill=#00c7aa /><rect x=648 fill=#00c7a8 /><rect x=660 fill=#00c7a6 /><rect x=672 fill=#21c7a5 /><rect x=684 fill=#38c7a4 /><rect x=696 fill=#48c7a4 /><rect x=708 fill=#54c7a4 /><rect x=720 fill=#5fc7a3 /><rect x=732 fill=#69c7a3 /><rect x=744 fill=#72c7a2 /><rect x=756 fill=#7ac7a2 /><rect x=768 fill=#82c7a1 /><rect x=780 fill=#8ac7a1 /><rect x=792 fill=#91c7a0 /><rect x=804 fill=#98c79f /><rect x=816 fill=#9fc79f /><rect x=828 fill=#a5c79e /><rect x=840 fill=#acc79e /><rect x=852 fill=#b2c79d /><rect x=864 fill=#b9c79c /><rect x=876 fill=#bfc79c /><rect x=888 fill=#c5c79b /><rect x=900 fill=#c7c397 /><rect x=912 fill=#c7bd92 /><rect x=924 fill=#c7b88d /><rect x=936 fill=#c7b388 /><rect x=948 fill=#c7ae84 /><rect x=960 fill=#c7a980 /><rect x=972 fill=#c7a57c /><rect x=984 fill=#c7a178 /><rect x=996 fill=#c79d74 /><rect x=1008 fill=#c79a71 /><rect x=1020 fill=#c7966d /><rect x=1032 fill=#c7936a /><rect x=1044 fill=#c78f67 /><rect x=1056 fill=#c78c64 /><rect x=1068 fill=#c78961 /><rect x=1080 fill=#c7865e /><rect x=1092 fill=#c7835b /><rect x=1104 fill=#c78158 /><rect x=1116 fill=#c77e55 /><rect x=1128 fill=#c77b52 /><rect x=1140 fill=#c7794f /><rect x=1152 fill=#c7764d /><rect x=1164 fill=#c7744a /><rect x=1176 fill=#c77147 /><rect x=1188 fill=#c76f45 /><rect x=1200 fill=#c76d42 /><rect x=1212 fill=#c76b3f /><rect x=1224 fill=#c7683c /><rect x=1236 fill=#c76639 /><rect x=1248 fill=#c76437 /><rect x=1260 fill=#c76234 /><rect x=1272 fill=#c76031 /><rect x=1284 fill=#c75e2e /><rect x=1296 fill=#c75c2a /><rect x=1308 fill=#c75a27 /><rect x=1320 fill=#c75823 /><rect x=1332 fill=#c7561f /><rect x=1344 fill=#c7541b /><rect x=1356 fill=#c75215 /><rect x=1368 fill=#c7510d /><rect x=1380 fill=#c74f00 /><rect x=1392 fill=#c74e00 /><rect x=1404 fill=#c74e00 /><rect x=1416 fill=#c74d00 /><rect x=1428 fill=#c74c00 /><rect x=1440 fill=#c74c00 /><rect x=1452 fill=#c74b00 /><rect x=1464 fill=#c74a00 /><rect x=1476 fill=#c74a00 /><rect x=1488 fill=#c74900 /><rect x=1500 fill=#c74800 /><rect x=1512 fill=#c74800 /><rect x=1524 fill=#c74700 /><rect x=1536 fill=#c74700 /></g>
<g transform="translate(0,672)"><rect x=192 fill=#00c7bf /><rect x=204 fill=#00c7bf /><rect x=216 fill=#00c7bf /><rect x=228 fill=#00c7bf /><rect x=240 fill=#00c7bf /><rect x=252 fill=#00c7bf /><rect x=264 fill=#00c7be /><rect x=276 fill=#00c7be /><rect x=288 fill=#00c7be /><rect x=300 fill=#00c7be /><rect x=312 fill=#00c7be /><rect x=324 fill=#00c7bd /><rect x=336 fill=#00c7bd /><rect x=348 fill=#00c7bd /><rect x=360 fill=#00c7bd /><rect x=372 fill=#00c7bd /><rect x=384 fill=#00c7bc /><rect x=396 fill=#00c7bc /><rect x=408 fill=#00c7bc /><rect x=420 fill=#00c7bb /><rect x=432 fill=#00c7bb /><rect x=444 fill=#00c7bb /><rect x=456 fill=#00c7ba /><rect x=468 fill=#00c7ba /><rect x=480 fill=#00c7ba /><rect x=492 fill=#00c7b9 /><rect x=504 fill=#00c7b9 /><rect x=516 fill=#00c7b8 /><rect x=528 fill=#00c7b8 /><rect x=540 fill=#00c7b7 /><rect x=552 fill=#00c7b6 /><rect x=564 fill=#00c7b6 /><rect x=576 fill=#00c7b5 /><rect x=588 fill=#00c7b4 /><rect x=600 fill=#00c7b3 /><rect x=612 fill=#00c7b2 /><rect x=624 fill=#00c7b1 /><rect x=636 fill=#00c7b0 /><rect x=648 fill=#00c7af /><rect x=660 fill=#15c7ae /><rect x=672 fill=#34c7ad /><rect x=684 fill=#45c7ad /><rect x=696 fill=#53c7ad /><rect x=708 fill=#5ec7ac /><rect x=720 fill=#68c7ac /><rect x=732 fill=#72c7ac /><rect x=744 fill=#7bc7ab /><rect x=756 fill=#83c7ab /><rect x=768 fill=#8bc7aa /><rect x=780 fill=#92c7aa /><rect x=792 fill=#9ac7aa /><rect x=804 fill=#a1c7a9 /><rect x=816 fill=#a8c7a9 /><rect x=828 fill=#afc7a8 /><rect x=840 fill=#b5c7a8 /><rect x=852 fill=#bcc7a7 /><rect x=864 fill=#c2c7a7 /><rect x=876 fill=#c7c5a5 /><rect x=888 fill=#c7bf9f /><rect x=900 fill=#c7b99a /><rect x=912 fill=#c7b495 /><rect x=924 fill=#c7af90 /><rect x=936 fill=#c7aa8c /><rect x=948 fill=#c7a688 /><rect x=960 fill=#c7a184 /><rect x=972 fill=#c79d80 /><rect x=984 fill=#c79a7c /><rect x=996 fill=#c79678 /><rect x=1008 fill=#c79275 /><rect x=1020 fill=#c78f72 /><rect x=1032 fill=#c78c6e /><rect x=1044 fill=#c7886b /><rect x=1056 fill=#c78568 /><rect x=1068 fill=#c78265 /><rect x=1080 fill=#c77f62 /><rect x=1092 fill=#c77d5f /><rect x=1104 fill=#c77a5d /><rect x=1116 fill=#c7775a /><rect x=1128 fill=#c77557 /><rect x=1140 fill=#c77255 /><rect x=1152 fill=#c77052 /><rect x=1164 fill=#c76d4f /><rect x=1176 fill=#c76b4d /><rect x=1188 fill=#c7694a /><rect x=1200 fill=#c76648 /><rect x=1212 fill=#c76445 /><rect x=1224 fill=#c76243 /><rect x=1236 fill=#c76040 /><rect x=1248 fill=#c75e3d /><rect x=1260 fill=#c75c3b /><rect x=1272 fill=#c75a38 /><rect x=1284 fill=#c75835 /><rect x=1296 fill=#c75633 /><rect x=1308 fill=#c75430 /><rect x=1320 fill=#c7522d /><rect x=1332 fill=#c7502a /><rect x=1344 fill=#c74e27 /><rect x=1356 fill=#c74c23 /><rect x=1368 fill=#c74a1f /><rect x=1380 fill=#c7481b /><rect x=1392 fill=#c74616 /><rect x=1404 fill=#c7440f /><rect x=1416 fill=#c74300 /><rect x=1428 fill=#c74200 /><rect x=1440 fill=#c74100 /><rect x=1452 fill=#c74100 /><rect x=1464 fill=#c74000 /><rect x=1476 fill=#c74000 /><rect x=1488 fill=#c73f00 /><rect x=1500 fill=#c73f00 /><rect x=1512 fill=#c73e00 /><rect x=1524 fill=#c73e00 /><rect x=1536 fill=#c73d00 /><rect x=1548 fill=#c73d00 /><rect x=1560 fill=#c73c00 /><rect x=1572 fill=#c73c00 /></g>
<g transform="translate(0,684)"><rect x=204 fill=#00c7c2 /><rect x=216 fill=#00c7c2 /><rect x=228 fill=#00c7c2 /><rect x=240 fill=#00c7c2 /><rect x=252 fill=#00c7c1 /><rect x=264 fill=#00c7c1 /><rect x=276 fill=#00c7c1 /><rect x=288 fill=#00c7c1 /><rect x=300 fill=#00c7c1 /><rect x=312 fill=#00c7c1 /><rect x=324 fill=#00c7c1 /><rect x=336 fill=#00c7c1 /><rect x=348 fill=#00c7c0 /><rect x=360 fill=#00c7c0 /><rect x=372 fill=#00c7c0 /><rect x=384 fill=#00c7c0 /><rect x=396 fill=#00c7c0 /><rect x=408 fill=#00c7c0 /><rect x=420 fill=#00c7bf /><rect x=432 fill=#00c7bf /><rect x=444 fill=#00c7bf /><rect x=456 fill=#00c7bf /><rect x=468 fill=#00c7be /><rect x=480 fill=#00c7be /><rect x=492 fill=#00c7be /><rect x=504 fill=#00c7be /><rect x=516 fill=#00c7bd /><rect x=528 fill=#00c7bd /><rect x=540 fill=#00c7bc /><rect x=552 fill=#00c7bc /><rect x=564 fill=#00c7bc /><rect x=576 fill=#00c7bb /><rect x=588 fill=#00c7bb /><rect x=600 fill=#00c7ba /><rect x=612 fill=#00c7b9 /><rect x=624 fill=#00c7b9 /><rect x=636 fill=#00c7b8 /><rect x=648 fill=#00c7b7 /><rect x=660 fill=#2fc7b6 /><rect x=672 fill=#42c7b6 /><rect x=684 fill=#51c7b6 /><rect x=696 fill=#5dc7b6 /><rect x=708 fill=#68c7b6 /><rect x=720 fill=#72c7b5 /><rect x=732 fill=#7bc7b5 /><rect x=744 fill=#84c7b5 /><rect x=756 fill=#8cc7b5 /><rect x=768 fill=#94c7b4 /><rect x=780 fill=#9cc7b4 /><rect x=792 fill=#a3c7b4 /><rect x=804 fill=#aac7b4 /><rect x=816 fill=#b1c7b3 /><rect x=828 fill=#b8c7b3 /><rect x=840 fill=#bfc7b3 /><rect x=852 fill=#c6c7b2 /><rect x=864 fill=#c7c1ad /><rect x=876 fill=#c7bba7 /><rect x=888 fill=#c7b5a2 /><rect x=900 fill=#c7b09d /><rect x=912 fill=#c7ab98 /><rect x=924 fill=#c7a693 /><rect x=936 fill=#c7a28f /><rect x=948 fill=#c79e8b /><rect x=960 fill=#c79987 /><rect x=972 fill=#c79683 /><rect x=984 fill=#c7927f /><rect x=996 fill=#c78e7c /><rect x=1008 fill=#c78b79 /><rect x=1020 fill=#c78875 /><rect x=1032 fill=#c78472 /><rect x=1044 fill=#c7816f /><rect x=1056 fill=#c77e6c /><rect x=1068 fill=#c77b69 /><rect x=1080 fill=#c77966 /><rect x=1092 fill=#c77664 /><rect x=1104 fill=#c77361 /><rect x=1116 fill=#c7715e /><rect x=1128 fill=#c76e5c /><rect x=1140 fill=#c76c59 /><rect x=1152 fill=#c76957 /><rect x=1164 fill=#c76754 /><rect x=1176 fill=#c76452 /><rect x=1188 fill=#c7624f /><rect x=1200 fill=#c7604d /><rect x=1212 fill=#c75e4a /><rect x=1224 fill=#c75c48 /><rect x=1236 fill=#c75946 /><rect x=1248 fill=#c75743 /><rect x=1260 fill=#c75541 /><rect x=1272 fill=#c7533e /><rect x=1284 fill=#c7513c /><rect x=1296 fill=#c74f39 /><rect x=1308 fill=#c74d37 /><rect x=1320 fill=#c74b34 /><rect x=1332 fill=#c74932 /><rect x=1344 fill=#c7472f /><rect x=1356 fill=#c7452c /><rect x=1368 fill=#c74329 /><rect x=1380 fill=#c74126 /><rect x=1392 fill=#c73f23 /><rect x=1404 fill=#c73d20 /><rect x=1416 fill=#c73b1c /><rect x=1428 fill=#c73917 /><rect x=1440 fill=#c73711 /><rect x=1452 fill=#c73406 /><rect x=1464 fill=#c73400 /><rect x=1476 fill=#c73300 /><rect x=1488 fill=#c73300 /><rect x=1500 fill=#c73200 /><rect x=1512 fill=#c73200 /><rect x=1524 fill=#c73200 /><rect x=1536 fill=#c73100 /><rect x=1548 fill=#c73100 /><rect x=1560 fill=#c73000 /><rect x=1572 fill=#c73000 /><rect x=1584 fill=#c73000 /><rect x=1596 fill=#c72f00 /></g>
<g transform="translate(0,696)"><rect x=204 fill=#00c7c5 /><rect x=216 fill=#00c7c5 /><rect x=228 fill=#00c7c5 /><rect x=240 fill=#00c7c5 /><rect x=252 fill=#00c7c5 /><rect x=264 fill=#00c7c4 /><rect x=276 fill=#00c7c4 /><rect x=288 fill=#00c7c4 /><rect x=300 fill=#00c7c4 /><rect x=312 fill=#00c7c4 /><rect x=324 fill=#00c7c4 /><rect x=336 fill=#00c7c4 /><rect x=348 fill=#00c7c4 /><rect x=360 fill=#00c7c4 /><rect x=372 fill=#00c7c4 /><rect x=384 fill=#00c7c4 /><rect x=396 fill=#00c7c4 /><rect x=408 fill=#00c7c4 /><rect x=420 fill=#00c7c4 /><rect x=432 fill=#00c7c4 /><rect x=444 fill=#00c7c3 /><rect x=456 fill=#00c7c3 /><rect x=468 fill=#00c7c3 /><rect x=480 fill=#00c7c3 /><rect x=492 fill=#00c7c3 /><rect x=504 fill=#00c7c3 /><rect x=516 fill=#00c7c3 /><rect x=528 fill=#00c7c2 /><rect x=540 fill=#00c7c2 /><rect x=552 fill=#00c7c2 /><rect x=564 fill=#00c7c2 /><rect x=576 fill=#00c7c2 /><rect x=588 fill=#00c7c1 /><rect x=600 fill=#00c7c1 /><rect x=612 fill=#00c7c1 /><rect x=624 fill=#00c7c1 /><rect x=636 fill=#00c7c0 /><rect x=648 fill=#29c7c0 /><rect x=660 fill=#3fc7c0 /><rect x=672 fill=#4fc7c0 /><rect x=684 fill=#5cc7c0 /><rect x=696 fill=#68c7c0 /><rect x=708 fill=#72c7bf /><rect x=720 fill=#7cc7bf /><rect x=732 fill=#85c7bf /><rect x=744 fill=#8dc7bf /><rect x=756 fill=#96c7bf /><rect x=768 fill=#9ec7bf /><rect x=780 fill=#a5c7bf /><rect x=792 fill=#adc7bf /><rect x=804 fill=#b4c7bf /><rect x=816 fill=#bcc7be /><rect x=828 fill=#c3c7be /><rect x=840 fill=#c7c4bb /><rect x=852 fill=#c7bdb5 /><rect x=864 fill=#c7b7af /><rect x=876 fill=#c7b1a9 /><rect x=888 fill=#c7aca4 /><rect x=900 fill=#c7a79f /><rect x=912 fill=#c7a29a /><rect x=924 fill=#c79e96 /><rect x=936 fill=#c79992 /><rect x=948 fill=#c7958e /><rect x=960 fill=#c7918a /><rect x=972 fill=#c78e86 /><rect x=984 fill=#c78a83 /><rect x=996 fill=#c7877f /><rect x=1008 fill=#c7837c /><rect x=1020 fill=#c78079 /><rect x=1032 fill=#c77d76 /><rect x=1044 fill=#c77a73 /><rect x=1056 fill=#c77770 /><rect x=1068 fill=#c7746d /><rect x=1080 fill=#c7716a /><rect x=1092 fill=#c76f67 /><rect x=1104 fill=#c76c65 /><rect x=1116 fill=#c76a62 /><rect x=1128 fill=#c76760 /><rect x=1140 fill=#c7655d /><rect x=1152 fill=#c7625b /><rect x=1164 fill=#c76058 /><rect x=1176 fill=#c75e56 /><rect x=1188 fill=#c75b54 /><rect x=1200 fill=#c75951 /><rect x=1212 fill=#c7574f /><rect x=1224 fill=#c7554d /><rect x=1236 fill=#c7524b /><rect x=1248 fill=#c75048 /><rect x=1260 fill=#c74e46 /><rect x=1272 fill=#c74c44 /><rect x=1284 fill=#c74a41 /><rect x=1296 fill=#c7483f /><rect x=1308 fill=#c7463d /><rect x=1320 fill=#c7433b /><rect x=1332 fill=#c74138 /><rect x=1344 fill=#c73f36 /><rect x=1356 fill=#c73d33 /><rect x=1368 fill=#c73b31 /><rect x=1380 fill=#c7392e /><rect x=1392 fill=#c7362c /><rect x=1404 fill=#c73429 /><rect x=1416 fill=#c73226 /><rect x=1428 fill=#c73023 /><rect x=1440 fill=#c72d20 /><rect x=1452 fill=#c72b1c /><rect x=1464 fill=#c72818 /><rect x=1476 fill=#c72512 /><rect x=1488 fill=#c7220a /><rect x=1500 fill=#c72100 /><rect x=1512 fill=#c72000 /><rect x=1524 fill=#c72000 /><rect x=1536 fill=#c72000 /><rect x=1548 fill=#c72000 /><rect x=1560 fill=#c71f00 /><rect x=1572 fill=#c71f00 /><rect x=1584 fill=#c71f00 /><rect x=1596 fill=#c71f00 /><rect x=1608 fill=#c71e00 /><rect x=1620 fill=#c71e00 /><rect x=1632 fill=#c71e00 /></g>
<g transform="translate(0,708)"><rect x=216 fill=#00c6c7 /><rect x=228 fill=#00c6c7 /><rect x=240 fill=#00c6c7 /><rect x=252 fill=#00c6c7 /><rect x=264 fill=#00c6c7 /><rect x=276 fill=#00c6c7 /><rect x=288 fill=#00c6c7 /><rect x=300 fill=#00c6c7 /><rect x=312 fill=#00c6c7 /><rect x=324 fill=#00c6c7 /><rect x=336 fill=#00c6c7 /><rect x=348 fill=#00c6c7 /><rect x=360 fill=#00c6c7 /><rect x=372 fill=#00c6c7 /><rect x=384 fill=#00c6c7 /><rect x=396 fill=#00c6c7 /><rect x=408 fill=#00c6c7 /><rect x=420 fill=#00c6c7 /><rect x=432 fill=#00c6c7 /><rect x=444 fill=#00c6c7 /><rect x=456 fill=#00c6c7 /><rect x=468 fill=#00c6c7 /><rect x=480 fill=#00c5c7 /><rect x=492 fill=#00c5c7 /><rect x=504 fill=#00c5c7 /><rect x=516 fill=#00c5c7 /><rect x=528 fill=#00c5c7 /><rect x=540 fill=#00c5c7 /><rect x=552 fill=#00c5c7 /><rect x=564 fill=#00c5c7 /><rect x=576 fill=#00c5c7 /><rect x=588 fill=#00c5c7 /><rect x=600 fill=#00c5c7 /><rect x=612 fill=#00c4c7 /><rect x=624 fill=#00c4c7 /><rect x=636 fill=#1fc4c7 /><rect x=648 fill=#3bc4c7 /><rect x=660 fill=#4cc4c7 /><rect x=672 fill=#5ac4c7 /><rect x=684 fill=#66c4c7 /><rect x=696 fill=#71c4c7 /><rect x=708 fill=#7bc4c7 /><rect x=720 fill=#84c4c7 /><rect x=732 fill=#8dc4c7 /><rect x=744 fill=#95c4c7 /><rect x=756 fill=#9dc4c7 /><rect x=768 fill=#a5c3c7 /><rect x=780 fill=#adc3c7 /><rect x=792 fill=#b5c3c7 /><rect x=804 fill=#bcc3c7 /><rect x=816 fill=#c3c3c7 /><rect x=828 fill=#c7c0c3 /><rect x=840 fill=#c7b9bd /><rect x=852 fill=#c7b3b6 /><rect x=864 fill=#c7adb1 /><rect x=876 fill=#c7a8ab /><rect x=888 fill=#c7a3a6 /><rect x=900 fill=#c79ea1 /><rect x=912 fill=#c7999d /><rect x=924 fill=#c79598 /><rect x=936 fill=#c79194 /><rect x=948 fill=#c78d90 /><rect x=960 fill=#c7898d /><rect x=972 fill=#c78689 /><rect x=984 fill=#c78286 /><rect x=996 fill=#c77f82 /><rect x=1008 fill=#c77c7f /><rect x=1020 fill=#c7787c /><rect x=1032 fill=#c77579 /><rect x=1044 fill=#c77276 /><rect x=1056 fill=#c77073 /><rect x=1068 fill=#c76d70 /><rect x=1080 fill=#c76a6e /><rect x=1092 fill=#c7676b /><rect x=1104 fill=#c76568 /><rect x=1116 fill=#c76266 /><rect x=1128 fill=#c76064 /><rect x=1140 fill=#c75d61 /><rect x=1152 fill=#c75b5f /><rect x=1164 fill=#c7595c /><rect x=1176 fill=#c7565a /><rect x=1188 fill=#c75458 /><rect x=1200 fill=#c75256 /><rect x=1212 fill=#c74f53 /><rect x=1224 fill=#c74d51 /><rect x=1236 fill=#c74b4f /><rect x=1248 fill=#c7494d /><rect x=1260 fill=#c7464b /><rect x=1272 fill=#c74449 /><rect x=1284 fill=#c74246 /><rect x=1296 fill=#c74044 /><rect x=1308 fill=#c73d42 /><rect x=1320 fill=#c73b40 /><rect x=1332 fill=#c7393e /><rect x=1344 fill=#c7363c /><rect x=1356 fill=#c73439 /><rect x=1368 fill=#c73237 /><rect x=1380 fill=#c72f35 /><rect x=1392 fill=#c72c33 /><rect x=1404 fill=#c72a30 /><rect x=1416 fill=#c7272e /><rect x=1428 fill=#c7242b /><rect x=1440 fill=#c72129 /><rect x=1452 fill=#c71d26 /><rect x=1464 fill=#c71923 /><rect x=1476 fill=#c71420 /><rect x=1488 fill=#c70d1c /><rect x=1500 fill=#c7001a /><rect x=1512 fill=#c70019 /><rect x=1524 fill=#c70019 /><rect x=1536 fill=#c70019 /><rect x=1548 fill=#c70019 /><rect x=1560 fill=#c70019 /><rect x=1572 fill=#c70019 /><rect x=1584 fill=#c70018 /><rect x=1596 fill=#c70018 /><rect x=1608 fill=#c70018 /><rect x=1620 fill=#c70018 /><rect x=1632 fill=#c70018 /><rect x=1644 fill=#c70018 /><rect x=1656 fill=#c70018 /><rect x=1668 fill=#c70018 /></g>
<g transform="translate(0,720)"><rect x=216 fill=#00c3c7 /><rect x=228 fill=#00c3c7 /><rect x=240 fill=#00c3c7 /><rect x=252 fill=#00c3c7 /><rect x=264 fill=#00c3c7 /><rect x=276 fill=#00c3c7 /><rect x=288 fill=#00c3c7 /><rect x=300 fill=#00c2c7 /><rect x=312 fill=#00c2c7 /><rect x=324 fill=#00c2c7 /><rect x=336 fill=#00c2c7 /><rect x=348 fill=#00c2c7 /><rect x=360 fill=#00c2c7 /><rect x=372 fill=#00c2c7 /><rect x=384 fill=#00c2c7 /><rect x=396 fill=#00c1c7 /><rect x=408 fill=#00c1c7 /><rect x=420 fill=#00c1c7 /><rect x=432 fill=#00c1c7 /><rect x=444 fill=#00c1c7 /><rect x=456 fill=#00c0c7 /><rect x=468 fill=#00c0c7 /><rect x=480 fill=#00c0c7 /><rect x=492 fill=#00c0c7 /><rect x=504 fill=#00bfc7 /><rect x=516 fill=#00bfc7 /><rect x=528 fill=#00bfc7 /><rect x=540 fill=#00bec7 /><rect x=552 fill=#00bec7 /><rect x=564 fill=#00bec7 /><rect x=576 fill=#00bdc7 /><rect x=588 fill=#00bdc7 /><rect x=600 fill=#00bcc7 /><rect x=612 fill=#00bbc7 /><rect x=624 fill=#0ebbc7 /><rect x=636 fill=#33bac7 /><rect x=648 fill=#46bac7 /><rect x=660 fill=#54bac7 /><rect x=672 fill=#60bac7 /><rect x=684 fill=#6bbac7 /><rect x=696 fill=#75bac7 /><rect x=708 fill=#7eb9c7 /><rect x=720 fill=#87b9c7 /><rect x=732 fill=#8fb9c7 /><rect x=744 fill=#97b9c7 /><rect x=756 fill=#9fb8c7 /><rect x=768 fill=#a6b8c7 /><rect x=780 fill=#adb8c7 /><rect x=792 fill=#b5b8c7 /><rect x=804 fill=#bcb7c7 /><rect x=816 fill=#c3b7c7 /><rect x=828 fill=#c7b4c4 /><rect x=840 fill=#c7aebe /><rect x=852 fill=#c7a9b8 /><rect x=864 fill=#c7a3b2 /><rect x=876 fill=#c79ead /><rect x=888 fill=#c799a8 /><rect x=900 fill=#c795a3 /><rect x=912 fill=#c7909f /><rect x=924 fill=#c78c9b /><rect x=936 fill=#c78897 /><rect x=948 fill=#c78593 /><rect x=960 fill=#c7818f /><rect x=972 fill=#c77d8c /><rect x=984 fill=#c77a88 /><rect x=996 fill=#c77785 /><rect x=1008 fill=#c77482 /><rect x=1020 fill=#c7717f /><rect x=1032 fill=#c76e7c /><rect x=1044 fill=#c76b79 /><rect x=1056 fill=#c76876 /><rect x=1068 fill=#c76574 /><rect x=1080 fill=#c76271 /><rect x=1092 fill=#c7606e /><rect x=1104 fill=#c75d6c /><rect x=1116 fill=#c75b69 /><rect x=1128 fill=#c75867 /><rect x=1140 fill=#c75665 /><rect x=1152 fill=#c75362 /><rect x=1164 fill=#c75160 /><rect x=1176 fill=#c74e5e /><rect x=1188 fill=#c74c5c /><rect x=1200 fill=#c74a59 /><rect x=1212 fill=#c74757 /><rect x=1224 fill=#c74555 /><rect x=1236 fill=#c74353 /><rect x=1248 fill=#c74051 /><rect x=1260 fill=#c73e4f /><rect x=1272 fill=#c73b4d /><rect x=1284 fill=#c7394b /><rect x=1296 fill=#c73649 /><rect x=1308 fill=#c73447 /><rect x=1320 fill=#c73145 /><rect x=1332 fill=#c72f43 /><rect x=1344 fill=#c72c41 /><rect x=1356 fill=#c7293f /><rect x=1368 fill=#c7263d /><rect x=1380 fill=#c7233a /><rect x=1392 fill=#c71f38 /><rect x=1404 fill=#c71b36 /><rect x=1416 fill=#c71634 /><rect x=1428 fill=#c71032 /><rect x=1440 fill=#c70030 /><rect x=1452 fill=#c7002f /><rect x=1464 fill=#c7002f /><rect x=1476 fill=#c7002f /><rect x=1488 fill=#c7002e /><rect x=1500 fill=#c7002e /><rect x=1512 fill=#c7002e /><rect x=1524 fill=#c7002d /><rect x=1536 fill=#c7002d /><rect x=1548 fill=#c7002d /><rect x=1560 fill=#c7002c /><rect x=1572 fill=#c7002c /><rect x=1584 fill=#c7002c /><rect x=1596 fill=#c7002b /><rect x=1608 fill=#c7002b /><rect x=1620 fill=#c7002b /><rect x=1632 fill=#c7002b /><rect x=1644 fill=#c7002a /><rect x=1656 fill=#c7002a /><rect x=1668 fill=#c7002a /><rect x=1680 fill=#c7002a /><rect x=1692 fill=#c70029 /></g>
<g transform="translate(0,732)"><rect x=228 fill=#00c0c7 /><rect x=240 fill=#00c0c7 /><rect x=252 fill=#00c0c7 /><rect x=264 fill=#00bfc7 /><rect x=276 fill=#00bfc7 /><rect x=288 fill=#00bfc7 /><rect x=300 fill=#00bfc7 /><rect x=312 fill=#00bfc7 /><rect x=324 fill=#00bec7 /><rect x=336 fill=#00bec7 /><rect x=348 fill=#00bec7 /><rect x=360 fill=#00bec7 /><rect x=372 fill=#00bdc7 /><rect x=384 fill=#00bdc7 /><rect x=396 fill=#00bdc7 /><rect x=408 fill=#00bdc7 /><rect x=420 fill=#00bcc7 /><rect x=432 fill=#00bcc7 /><rect x=444 fill=#00bcc7 /><rect x=456 fill=#00bbc7 /><rect x=468 fill=#00bbc7 /><rect x=480 fill=#00bac7 /><rect x=492 fill=#00bac7 /><rect x=504 fill=#00b9c7 /><rect x=516 fill=#00b9c7 /><rect x=528 fill=#00b8c7 /><rect x=540 fill=#00b7c7 /><rect x=552 fill=#00b7c7 /><rect x=564 fill=#00b6c7 /><rect x=576 fill=#00b5c7 /><rect x=588 fill=#00b4c7 /><rect x=600 fill=#00b3c7 /><rect x=612 fill=#00b2c7 /><rect x=624 fill=#2cb1c7 /><rect x=636 fill=#40b1c7 /><rect x=648 fill=#4fb1c7 /><rect x=660 fill=#5bb0c7 /><rect x=672 fill=#66b0c7 /><rect x=684 fill=#6fb0c7 /><rect x=696 fill=#79afc7 /><rect x=708 fill=#81afc7 /><rect x=720 fill=#89afc7 /><rect x=732 fill=#91aec7 /><rect x=744 fill=#99aec7 /><rect x=756 fill=#a0aec7 /><rect x=768 fill=#a7adc7 /><rect x=780 fill=#aeadc7 /><rect x=792 fill=#b5acc7 /><rect x=804 fill=#bbacc7 /><rect x=816 fill=#c2abc7 /><rect x=828 fill=#c7a9c5 /><rect x=840 fill=#c7a4bf /><rect x=852 fill=#c79eb9 /><rect x=864 fill=#c799b4 /><rect x=876 fill=#c794af /><rect x=888 fill=#c790aa /><rect x=900 fill=#c78ba5 /><rect x=912 fill=#c787a1 /><rect x=924 fill=#c7839d /><rect x=936 fill=#c77f99 /><rect x=948 fill=#c77c95 /><rect x=960 fill=#c77892 /><rect x=972 fill=#c7758e /><rect x=984 fill=#c7728b /><rect x=996 fill=#c76e88 /><rect x=1008 fill=#c76b85 /><rect x=1020 fill=#c76882 /><rect x=1032 fill=#c7657f /><rect x=1044 fill=#c7637c /><rect x=1056 fill=#c76079 /><rect x=1068 fill=#c75d77 /><rect x=1080 fill=#c75a74 /><rect x=1092 fill=#c75871 /><rect x=1104 fill=#c7556f /><rect x=1116 fill=#c7526d /><rect x=1128 fill=#c7506a /><rect x=1140 fill=#c74d68 /><rect x=1152 fill=#c74b66 /><rect x=1164 fill=#c74863 /><rect x=1176 fill=#c74661 /><rect x=1188 fill=#c7435f /><rect x=1200 fill=#c7415d /><rect x=1212 fill=#c73e5b /><rect x=1224 fill=#c73c59 /><rect x=1236 fill=#c73957 /><rect x=1248 fill=#c73655 /><rect x=1260 fill=#c73453 /><rect x=1272 fill=#c73151 /><rect x=1284 fill=#c72e4f /><rect x=1296 fill=#c72b4d /><rect x=1308 fill=#c7284b /><rect x=1320 fill=#c72549 /><rect x=1332 fill=#c72147 /><rect x=1344 fill=#c71d45 /><rect x=1356 fill=#c71843 /><rect x=1368 fill=#c71341 /><rect x=1380 fill=#c7093f /><rect x=1392 fill=#c7003e /><rect x=1404 fill=#c7003e /><rect x=1416 fill=#c7003d /><rect x=1428 fill=#c7003d /><rect x=1440 fill=#c7003c /><rect x=1452 fill=#c7003c /><rect x=1464 fill=#c7003b /><rect x=1476 fill=#c7003b /><rect x=1488 fill=#c7003b /><rect x=1500 fill=#c7003a /><rect x=1512 fill=#c7003a /><rect x=1524 fill=#c70039 /><rect x=1536 fill=#c70039 /><rect x=1548 fill=#c70038 /><rect x=1560 fill=#c70038 /><rect x=1572 fill=#c70038 /><rect x=1584 fill=#c70037 /><rect x=1596 fill=#c70037 /><rect x=1608 fill=#c70037 /><rect x=1620 fill=#c70036 /><rect x=1632 fill=#c70036 /><rect x=1644 fill=#c70036 /><rect x=1656 fill=#c70035 /><rect x=1668 fill=#c70035 /><rect x=1680 fill=#c70035 /><rect x=1692 fill=#c70034 /><rect x=1704 fill=#c70034 /><rect x=1716 fill=#c70034 /></g>
<g transform="translate(0,744)"><rect x=240 fill=#00bcc7 /><rect x=252 fill=#00bcc7 /><rect x=264 fill=#00bcc7 /><rect x=276 fill=#00bcc7 /><rect x=288 fill=#00bbc7 /><rect x=300 fill=#00bbc7 /><rect x=312 fill=#00bbc7 /><rect x=324 fill=#00bbc7 /><rect x=336 fill=#00bac7 /><rect x=348 fill=#00bac7 /><rect x=360 fill=#00b9c7 /><rect x=372 fill=#00b9c7 /><rect x=384 fill=#00b9c7 /><rect x=396 fill=#00b8c7 /><rect x=408 fill=#00b8c7 /><rect x=420 fill=#00b7c7 /><rect x=432 fill=#00b7c7 /><rect x=444 fill=#00b6c7 /><rect x=456 fill=#00b6c7 /><rect x=468 fill=#00b5c7 /><rect x=480 fill=#00b4c7 /><rect x=492 fill=#00b4c7 /><rect x=504 fill=#00b3c7 /><rect x=516 fill=#00b2c7 /><rect x=528 fill=#00b1c7 /><rect x=540 fill=#00b0c7 /><rect x=552 fill=#00afc7 /><rect x=564 fill=#00aec7 /><rect x=576 fill=#00adc7 /><rect x=588 fill=#00abc7 /><rect x=600 fill=#00aac7 /><rect x=612 fill=#23a9c7 /><rect x=624 fill=#3aa8c7 /><rect x=636 fill=#49a8c7 /><rect x=648 fill=#56a7c7 /><rect x=660 fill=#61a7c7 /><rect x=672 fill=#6aa6c7 /><rect x=684 fill=#73a6c7 /><rect x=696 fill=#7ca5c7 /><rect x=708 fill=#84a5c7 /><rect x=720 fill=#8ba4c7 /><rect x=732 fill=#93a4c7 /><rect x=744 fill=#9aa3c7 /><rect x=756 fill=#a1a3c7 /><rect x=768 fill=#a8a2c7 /><rect x=780 fill=#aea2c7 /><rect x=792 fill=#b5a1c7 /><rect x=804 fill=#bba0c7 /><rect x=816 fill=#c1a0c7 /><rect x=828 fill=#c79ec6 /><rect x=840 fill=#c799c0 /><rect x=852 fill=#c794bb /><rect x=864 fill=#c78fb5 /><rect x=876 fill=#c78ab0 /><rect x=888 fill=#c786ac /><rect x=900 fill=#c782a7 /><rect x=912 fill=#c77ea3 /><rect x=924 fill=#c77a9f /><rect x=936 fill=#c7769b /><rect x=948 fill=#c77397 /><rect x=960 fill=#c76f94 /><rect x=972 fill=#c76c91 /><rect x=984 fill=#c7698d /><rect x=996 fill=#c7668a /><rect x=1008 fill=#c76387 /><rect x=1020 fill=#c76084 /><rect x=1032 fill=#c75d81 /><rect x=1044 fill=#c75a7f /><rect x=1056 fill=#c7577c /><rect x=1068 fill=#c75479 /><rect x=1080 fill=#c75277 /><rect x=1092 fill=#c74f74 /><rect x=1104 fill=#c74c72 /><rect x=1116 fill=#c74970 /><rect x=1128 fill=#c7476d /><rect x=1140 fill=#c7446b /><rect x=1152 fill=#c74169 /><rect x=1164 fill=#c73f67 /><rect x=1176 fill=#c73c64 /><rect x=1188 fill=#c73962 /><rect x=1200 fill=#c73660 /><rect x=1212 fill=#c7335e /><rect x=1224 fill=#c7305c /><rect x=1236 fill=#c72d5a /><rect x=1248 fill=#c72a58 /><rect x=1260 fill=#c72756 /><rect x=1272 fill=#c72354 /><rect x=1284 fill=#c71f53 /><rect x=1296 fill=#c71b51 /><rect x=1308 fill=#c7154f /><rect x=1320 fill=#c70d4d /><rect x=1332 fill=#c7004c /><rect x=1344 fill=#c7004b /><rect x=1356 fill=#c7004a /><rect x=1368 fill=#c7004a /><rect x=1380 fill=#c70049 /><rect x=1392 fill=#c70048 /><rect x=1404 fill=#c70048 /><rect x=1416 fill=#c70047 /><rect x=1428 fill=#c70047 /><rect x=1440 fill=#c70046 /><rect x=1452 fill=#c70045 /><rect x=1464 fill=#c70045 /><rect x=1476 fill=#c70044 /><rect x=1488 fill=#c70044 /><rect x=1500 fill=#c70043 /><rect x=1512 fill=#c70043 /><rect x=1524 fill=#c70042 /><rect x=1536 fill=#c70042 /><rect x=1548 fill=#c70042 /><rect x=1560 fill=#c70041 /><rect x=1572 fill=#c70041 /><rect x=1584 fill=#c70040 /><rect x=1596 fill=#c70040 /><rect x=1608 fill=#c7003f /><rect x=1620 fill=#c7003f /><rect x=1632 fill=#c7003f /><rect x=1644 fill=#c7003e /><rect x=1656 fill=#c7003e /><rect x=1668 fill=#c7003e /><rect x=1680 fill=#c7003d /><rect x=1692 fill=#c7003d /><rect x=1704 fill=#c7003d /><rect x=1716 fill=#c7003c /></g>
<g transform="translate(0,756)"><rect x=240 fill=#00b9c7 /><rect x=252 fill=#00b9c7 /><rect x=264 fill=#00b8c7 /><rect x=276 fill=#00b8c7 /><rect x=288 fill=#00b8c7 /><rect x=300 fill=#00b7c7 /><rect x=312 fill=#00b7c7 /><rect x=324 fill=#00b7c7 /><rect x=336 fill=#00b6c7 /><rect x=348 fill=#00b6c7 /><rect x=360 fill=#00b5c7 /><rect x=372 fill=#00b5c7 /><rect x=384 fill=#00b4c7 /><rect x=396 fill=#00b4c7 /><rect x=408 fill=#00b3c7 /><rect x=420 fill=#00b2c7 /><rect x=432 fill=#00b2c7 /><rect x=444 fill=#00b1c7 /><rect x=456 fill=#00b0c7 /><rect x=468 fill=#00afc7 /><rect x=480 fill=#00afc7 /><rect x=492 fill=#00aec7 /><rect x=504 fill=#00adc7 /><rect x=516 fill=#00abc7 /><rect x=528 fill=#00aac7 /><rect x=540 fill=#00a9c7 /><rect x=552 fill=#00a7c7 /><rect x=564 fill=#00a6c7 /><rect x=576 fill=#00a4c7 /><rect x=588 fill=#00a2c7 /><rect x=600 fill=#18a0c7 /><rect x=612 fill=#33a0c7 /><rect x=624 fill=#449fc7 /><rect x=636 fill=#519fc7 /><rect x=648 fill=#5c9ec7 /><rect x=660 fill=#669dc7 /><rect x=672 fill=#6f9dc7 /><rect x=684 fill=#779cc7 /><rect x=696 fill=#7f9cc7 /><rect x=708 fill=#869bc7 /><rect x=720 fill=#8e9ac7 /><rect x=732 fill=#949ac7 /><rect x=744 fill=#9b99c7 /><rect x=756 fill=#a298c7 /><rect x=768 fill=#a898c7 /><rect x=780 fill=#af97c7 /><rect x=792 fill=#b596c7 /><rect x=804 fill=#bb95c7 /><rect x=816 fill=#c194c7 /><rect x=828 fill=#c793c7 /><rect x=840 fill=#c78ec1 /><rect x=852 fill=#c789bc /><rect x=864 fill=#c785b7 /><rect x=876 fill=#c780b2 /><rect x=888 fill=#c77cad /><rect x=900 fill=#c778a9 /><rect x=912 fill=#c774a5 /><rect x=924 fill=#c771a1 /><rect x=936 fill=#c76d9d /><rect x=948 fill=#c76a9a /><rect x=960 fill=#c76696 /><rect x=972 fill=#c76393 /><rect x=984 fill=#c76090 /><rect x=996 fill=#c75c8c /><rect x=1008 fill=#c7598a /><rect x=1020 fill=#c75687 /><rect x=1032 fill=#c75384 /><rect x=1044 fill=#c75081 /><rect x=1056 fill=#c74e7f /><rect x=1068 fill=#c74b7c /><rect x=1080 fill=#c74879 /><rect x=1092 fill=#c74577 /><rect x=1104 fill=#c74275 /><rect x=1116 fill=#c73f72 /><rect x=1128 fill=#c73c70 /><rect x=1140 fill=#c7396e /><rect x=1152 fill=#c7366c /><rect x=1164 fill=#c7336a /><rect x=1176 fill=#c73067 /><rect x=1188 fill=#c72d65 /><rect x=1200 fill=#c72963 /><rect x=1212 fill=#c72561 /><rect x=1224 fill=#c7215f /><rect x=1236 fill=#c71d5d /><rect x=1248 fill=#c7175c /><rect x=1260 fill=#c7105a /><rect x=1272 fill=#c70058 /><rect x=1284 fill=#c70057 /><rect x=1296 fill=#c70056 /><rect x=1308 fill=#c70055 /><rect x=1320 fill=#c70055 /><rect x=1332 fill=#c70054 /><rect x=1344 fill=#c70053 /><rect x=1356 fill=#c70052 /><rect x=1368 fill=#c70052 /><rect x=1380 fill=#c70051 /><rect x=1392 fill=#c70050 /><rect x=1404 fill=#c70050 /><rect x=1416 fill=#c7004f /><rect x=1428 fill=#c7004e /><rect x=1440 fill=#c7004e /><rect x=1452 fill=#c7004d /><rect x=1464 fill=#c7004d /><rect x=1476 fill=#c7004c /><rect x=1488 fill=#c7004c /><rect x=1500 fill=#c7004b /><rect x=1512 fill=#c7004a /><rect x=1524 fill=#c7004a /><rect x=1536 fill=#c70049 /><rect x=1548 fill=#c70049 /><rect x=1560 fill=#c70048 /><rect x=1572 fill=#c70048 /><rect x=1584 fill=#c70048 /><rect x=1596 fill=#c70047 /><rect x=1608 fill=#c70047 /><rect x=1620 fill=#c70046 /><rect x=1632 fill=#c70046 /><rect x=1644 fill=#c70045 /><rect x=1656 fill=#c70045 /><rect x=1668 fill=#c70045 /><rect x=1680 fill=#c70044 /><rect x=1692 fill=#c70044 /><rect x=1704 fill=#c70043 /><rect x=1716 fill=#c70043 /></g>
<g transform="translate(0,768)"><rect x=252 fill=#00b5c7 /><rect x=264 fill=#00b5c7 /><rect x=276 fill=#00b4c7 /><rect x=288 fill=#00b4c7 /><rect x=300 fill=#00b3c7 /><rect x=312 fill=#00b3c7 /><rect x=324 fill=#00b2c7 /><rect x=336 fill=#00b2c7 /><rect x=348 fill=#00b1c7 /><rect x=360 fill=#00b1c7 /><rect x=372 fill=#00b0c7 /><rect x=384 fill=#00afc7 /><rect x=396 fill=#00afc7 /><rect x=408 fill=#00aec7 /><rect x=420 fill=#00adc7 /><rect x=432 fill=#00acc7 /><rect x=444 fill=#00abc7 /><rect x=456 fill=#00aac7 /><rect x=468 fill=#00a9c7 /><rect x=480 fill=#00a8c7 /><rect x=492 fill=#00a7c7 /><rect x=504 fill=#00a6c7 /><rect x=516 fill=#00a4c7 /><rect x=528 fill=#00a3c7 /><rect x=540 fill=#00a1c7 /><rect x=552 fill=#009fc7 /><rect x=564 fill=#009dc7 /><rect x=576 fill=#009bc7 /><rect x=588 fill=#0098c7 /><rect x=600 fill=#2d97c7 /><rect x=612 fill=#3e97c7 /><rect x=624 fill=#4c96c7 /><rect x=636 fill=#5795c7 /><rect x=648 fill=#6195c7 /><rect x=660 fill=#6a94c7 /><rect x=672 fill=#7293c7 /><rect x=684 fill=#7a93c7 /><rect x=696 fill=#8192c7 /><rect x=708 fill=#8991c7 /><rect x=720 fill=#8f90c7 /><rect x=732 fill=#968fc7 /><rect x=744 fill=#9c8fc7 /><rect x=756 fill=#a38ec7 /><rect x=768 fill=#a98dc7 /><rect x=780 fill=#af8cc7 /><rect x=792 fill=#b58bc7 /><rect x=804 fill=#bb8ac7 /><rect x=816 fill=#c189c7 /><rect x=828 fill=#c688c7 /><rect x=840 fill=#c783c2 /><rect x=852 fill=#c77fbd /><rect x=864 fill=#c77ab8 /><rect x=876 fill=#c776b3 /><rect x=888 fill=#c772af /><rect x=900 fill=#c76eaa /><rect x=912 fill=#c76aa6 /><rect x=924 fill=#c767a3 /><rect x=936 fill=#c7639f /><rect x=948 fill=#c7609b /><rect x=960 fill=#c75c98 /><rect x=972 fill=#c75995 /><rect x=984 fill=#c75692 /><rect x=996 fill=#c7528f /><rect x=1008 fill=#c74f8c /><rect x=1020 fill=#c74c89 /><rect x=1032 fill=#c74986 /><rect x=1044 fill=#c74684 /><rect x=1056 fill=#c74381 /><rect x=1068 fill=#c7407e /><rect x=1080 fill=#c73d7c /><rect x=1092 fill=#c7397a /><rect x=1104 fill=#c73677 /><rect x=1116 fill=#c73375 /><rect x=1128 fill=#c72f73 /><rect x=1140 fill=#c72c71 /><rect x=1152 fill=#c7286e /><rect x=1164 fill=#c7246c /><rect x=1176 fill=#c71f6a /><rect x=1188 fill=#c71a68 /><rect x=1200 fill=#c71366 /><rect x=1212 fill=#c70664 /><rect x=1224 fill=#c70063 /><rect x=1236 fill=#c70062 /><rect x=1248 fill=#c70061 /><rect x=1260 fill=#c70060 /><rect x=1272 fill=#c7005f /><rect x=1284 fill=#c7005e /><rect x=1296 fill=#c7005d /><rect x=1308 fill=#c7005c /><rect x=1320 fill=#c7005c /><rect x=1332 fill=#c7005b /><rect x=1344 fill=#c7005a /><rect x=1356 fill=#c70059 /><rect x=1368 fill=#c70059 /><rect x=1380 fill=#c70058 /><rect x=1392 fill=#c70057 /><rect x=1404 fill=#c70056 /><rect x=1416 fill=#c70056 /><rect x=1428 fill=#c70055 /><rect x=1440 fill=#c70054 /><rect x=1452 fill=#c70054 /><rect x=1464 fill=#c70053 /><rect x=1476 fill=#c70053 /><rect x=1488 fill=#c70052 /><rect x=1500 fill=#c70051 /><rect x=1512 fill=#c70051 /><rect x=1524 fill=#c70050 /><rect x=1536 fill=#c70050 /><rect x=1548 fill=#c7004f /><rect x=1560 fill=#c7004f /><rect x=1572 fill=#c7004e /><rect x=1584 fill=#c7004e /><rect x=1596 fill=#c7004d /><rect x=1608 fill=#c7004d /><rect x=1620 fill=#c7004c /><rect x=1632 fill=#c7004c /><rect x=1644 fill=#c7004b /><rect x=1656 fill=#c7004b /><rect x=1668 fill=#c7004b /><rect x=1680 fill=#c7004a /><rect x=1692 fill=#c7004a /><rect x=1704 fill=#c70049 /></g>
<g transform="translate(0,780)"><rect x=264 fill=#00b1c7 /><rect x=276 fill=#00b1c7 /><rect x=288 fill=#00b0c7 /><rect x=300 fill=#00b0c7 /><rect x=312 fill=#00afc7 /><rect x=324 fill=#00aec7 /><rect x=336 fill=#00aec7 /><rect x=348 fill=#00adc7 /><rect x=360 fill=#00acc7 /><rect x=372 fill=#00acc7 /><rect x=384 fill=#00abc7 /><rect x=396 fill=#00aac7 /><rect x=408 fill=#00a9c7 /><rect x=420 fill=#00a8c7 /><rect x=432 fill=#00a7c7 /><rect x=444 fill=#00a6c7 /><rect x=456 fill=#00a5c7 /><rect x=468 fill=#00a3c7 /><rect x=480 fill=#00a2c7 /><rect x=492 fill=#00a0c7 /><rect x=504 fill=#009fc7 /><rect x=516 fill=#009dc7 /><rect x=528 fill=#009bc7 /><rect x=540 fill=#0099c7 /><rect x=552 fill=#0096c7 /><rect x=564 fill=#0094c7 /><rect x=576 fill=#0091c7 /><rect x=588 fill=#268fc7 /><rect x=600 fill=#398fc7 /><rect x=612 fill=#478ec7 /><rect x=624 fill=#528dc7 /><rect x=636 fill=#5c8cc7 /><rect x=648 fill=#658cc7 /><rect x=660 fill=#6e8bc7 /><rect x=672 fill=#758ac7 /><rect x=684 fill=#7d89c7 /><rect x=696 fill=#8488c7 /><rect x=708 fill=#8b87c7 /><rect x=720 fill=#9186c7 /><rect x=732 fill=#9785c7 /><rect x=744 fill=#9e84c7 /><rect x=756 fill=#a483c7 /><rect x=768 fill=#a982c7 /><rect x=780 fill=#af81c7 /><rect x=792 fill=#b580c7 /><rect x=804 fill=#bb7ec7 /><rect x=816 fill=#c07dc7 /><rect x=828 fill=#c67cc7 /><rect x=840 fill=#c778c3 /><rect x=852 fill=#c773be /><rect x=864 fill=#c76fb9 /><rect x=876 fill=#c76bb4 /><rect x=888 fill=#c767b0 /><rect x=900 fill=#c763ac /><rect x=912 fill=#c75fa8 /><rect x=924 fill=#c75ca4 /><rect x=936 fill=#c758a1 /><rect x=948 fill=#c7559d /><rect x=960 fill=#c7519a /><rect x=972 fill=#c74e97 /><rect x=984 fill=#c74b94 /><rect x=996 fill=#c74791 /><rect x=1008 fill=#c7448e /><rect x=1020 fill=#c7408b /><rect x=1032 fill=#c73d88 /><rect x=1044 fill=#c73a86 /><rect x=1056 fill=#c73683 /><rect x=1068 fill=#c73281 /><rect x=1080 fill=#c72f7e /><rect x=1092 fill=#c72b7c /><rect x=1104 fill=#c7277a /><rect x=1116 fill=#c72277 /><rect x=1128 fill=#c71d75 /><rect x=1140 fill=#c71673 /><rect x=1152 fill=#c70c71 /><rect x=1164 fill=#c7006f /><rect x=1176 fill=#c7006e /><rect x=1188 fill=#c7006d /><rect x=1200 fill=#c7006c /><rect x=1212 fill=#c7006b /><rect x=1224 fill=#c70069 /><rect x=1236 fill=#c70068 /><rect x=1248 fill=#c70067 /><rect x=1260 fill=#c70066 /><rect x=1272 fill=#c70065 /><rect x=1284 fill=#c70064 /><rect x=1296 fill=#c70063 /><rect x=1308 fill=#c70063 /><rect x=1320 fill=#c70062 /><rect x=1332 fill=#c70061 /><rect x=1344 fill=#c70060 /><rect x=1356 fill=#c7005f /><rect x=1368 fill=#c7005e /><rect x=1380 fill=#c7005e /><rect x=1392 fill=#c7005d /><rect x=1404 fill=#c7005c /><rect x=1416 fill=#c7005c /><rect x=1428 fill=#c7005b /><rect x=1440 fill=#c7005a /><rect x=1452 fill=#c7005a /><rect x=1464 fill=#c70059 /><rect x=1476 fill=#c70058 /><rect x=1488 fill=#c70058 /><rect x=1500 fill=#c70057 /><rect x=1512 fill=#c70056 /><rect x=1524 fill=#c70056 /><rect x=1536 fill=#c70055 /><rect x=1548 fill=#c70055 /><rect x=1560 fill=#c70054 /><rect x=1572 fill=#c70054 /><rect x=1584 fill=#c70053 /><rect x=1596 fill=#c70053 /><rect x=1608 fill=#c70052 /><rect x=1620 fill=#c70052 /><rect x=1632 fill=#c70051 /><rect x=1644 fill=#c70051 /><rect x=1656 fill=#c70050 /></g>
<g transform="translate(0,792)"><rect x=276 fill=#00adc7 /><rect x=288 fill=#00acc7 /><rect x=300 fill=#00acc7 /><rect x=312 fill=#00abc7 /><rect x=324 fill=#00aac7 /><rect x=336 fill=#00a9c7 /><rect x=348 fill=#00a9c7 /><rect x=360 fill=#00a8c7 /><rect x=372 fill=#00a7c7 /><rect x=384 fill=#00a6c7 /><rect x=396 fill=#00a5c7 /><rect x=408 fill=#00a4c7 /><rect x=420 fill=#00a2c7 /><rect x=432 fill=#00a1c7 /><rect x=444 fill=#00a0c7 /><rect x=456 fill=#009ec7 /><rect x=468 fill=#009dc7 /><rect x=480 fill=#009bc7 /><rect x=492 fill=#0099c7 /><rect x=504 fill=#0097c7 /><rect x=516 fill=#0095c7 /><rect x=528 fill=#0093c7 /><rect x=540 fill=#0090c7 /><rect x=552 fill=#008dc7 /><rect x=564 fill=#008ac7 /><rect x=576 fill=#1d87c7 /><rect x=588 fill=#3487c7 /><rect x=600 fill=#4286c7 /><rect x=612 fill=#4e85c7 /><rect x=624 fill=#5884c7 /><rect x=636 fill=#6183c7 /><rect x=648 fill=#6982c7 /><rect x=660 fill=#7181c7 /><rect x=672 fill=#7880c7 /><rect x=684 fill=#7f7fc7 /><rect x=696 fill=#867ec7 /><rect x=708 fill=#8c7dc7 /><rect x=720 fill=#937cc7 /><rect x=732 fill=#997bc7 /><rect x=744 fill=#9f79c7 /><rect x=756 fill=#a478c7 /><rect x=768 fill=#aa77c7 /><rect x=780 fill=#af76c7 /><rect x=792 fill=#b574c7 /><rect x=804 fill=#ba73c7 /><rect x=816 fill=#c071c7 /><rect x=828 fill=#c570c7 /><rect x=840 fill=#c76cc4 /><rect x=852 fill=#c768bf /><rect x=864 fill=#c763ba /><rect x=876 fill=#c75fb6 /><rect x=888 fill=#c75bb1 /><rect x=900 fill=#c758ad /><rect x=912 fill=#c754a9 /><rect x=924 fill=#c750a6 /><rect x=936 fill=#c74ca2 /><rect x=948 fill=#c7499f /><rect x=960 fill=#c7459c /><rect x=972 fill=#c74199 /><rect x=984 fill=#c73e96 /><rect x=996 fill=#c73a93 /><rect x=1008 fill=#c73690 /><rect x=1020 fill=#c7328d /><rect x=1032 fill=#c72e8a /><rect x=1044 fill=#c72a88 /><rect x=1056 fill=#c72585 /><rect x=1068 fill=#c71f83 /><rect x=1080 fill=#c71981 /><rect x=1092 fill=#c7107e /><rect x=1104 fill=#c7007c /><rect x=1116 fill=#c7007b /><rect x=1128 fill=#c70079 /><rect x=1140 fill=#c70078 /><rect x=1152 fill=#c70076 /><rect x=1164 fill=#c70075 /><rect x=1176 fill=#c70074 /><rect x=1188 fill=#c70072 /><rect x=1200 fill=#c70071 /><rect x=1212 fill=#c70070 /><rect x=1224 fill=#c7006f /><rect x=1236 fill=#c7006e /><rect x=1248 fill=#c7006d /><rect x=1260 fill=#c7006c /><rect x=1272 fill=#c7006b /><rect x=1284 fill=#c7006a /><rect x=1296 fill=#c70069 /><rect x=1308 fill=#c70068 /><rect x=1320 fill=#c70067 /><rect x=1332 fill=#c70066 /><rect x=1344 fill=#c70065 /><rect x=1356 fill=#c70064 /><rect x=1368 fill=#c70064 /><rect x=1380 fill=#c70063 /><rect x=1392 fill=#c70062 /><rect x=1404 fill=#c70061 /><rect x=1416 fill=#c70061 /><rect x=1428 fill=#c70060 /><rect x=1440 fill=#c7005f /><rect x=1452 fill=#c7005f /><rect x=1464 fill=#c7005e /><rect x=1476 fill=#c7005d /><rect x=1488 fill=#c7005d /><rect x=1500 fill=#c7005c /><rect x=1512 fill=#c7005b /><rect x=1524 fill=#c7005b /><rect x=1536 fill=#c7005a /><rect x=1548 fill=#c7005a /><rect x=1560 fill=#c70059 /><rect x=1572 fill=#c70059 /><rect x=1584 fill=#c70058 /></g>
<g transform="translate(0,804)"><rect x=276 fill=#00a9c7 /><rect x=288 fill=#00a8c7 /><rect x=300 fill=#00a7c7 /><rect x=312 fill=#00a7c7 /><rect x=324 fill=#00a6c7 /><rect x=336 fill=#00a5c7 /><rect x=348 fill=#00a4c7 /><rect x=360 fill=#00a3c7 /><rect x=372 fill=#00a2c7 /><rect x=384 fill=#00a1c7 /><rect x=396 fill=#00a0c7 /><rect x=408 fill=#009ec7 /><rect x=420 fill=#009dc7 /><rect x=432 fill=#009bc7 /><rect x=444 fill=#009ac7 /><rect x=456 fill=#0098c7 /><rect x=468 fill=#0096c7 /><rect x=480 fill=#0094c7 /><rect x=492 fill=#0092c7 /><rect x=504 fill=#0090c7 /><rect x=516 fill=#008dc7 /><rect x=528 fill=#008ac7 /><rect x=540 fill=#0087c7 /><rect x=552 fill=#0083c7 /><rect x=564 fill=#1080c7 /><rect x=576 fill=#2e7fc7 /><rect x=588 fill=#3d7ec7 /><rect x=600 fill=#4a7dc7 /><rect x=612 fill=#547cc7 /><rect x=624 fill=#5d7bc7 /><rect x=636 fill=#657ac7 /><rect x=648 fill=#6d79c7 /><rect x=660 fill=#7477c7 /><rect x=672 fill=#7b76c7 /><rect x=684 fill=#8275c7 /><rect x=696 fill=#8874c7 /><rect x=708 fill=#8e73c7 /><rect x=720 fill=#9471c7 /><rect x=732 fill=#9a70c7 /><rect x=744 fill=#9f6ec7 /><rect x=756 fill=#a56dc7 /><rect x=768 fill=#aa6bc7 /><rect x=780 fill=#b06ac7 /><rect x=792 fill=#b568c7 /><rect x=804 fill=#ba66c7 /><rect x=816 fill=#bf64c7 /><rect x=828 fill=#c463c7 /><rect x=840 fill=#c75fc4 /><rect x=852 fill=#c75bbf /><rect x=864 fill=#c757bb /><rect x=876 fill=#c752b7 /><rect x=888 fill=#c74eb3 /><rect x=900 fill=#c74aaf /><rect x=912 fill=#c746ab /><rect x=924 fill=#c742a7 /><rect x=936 fill=#c73ea4 /><rect x=948 fill=#c73aa1 /><rect x=960 fill=#c7369d /><rect x=972 fill=#c7329a /><rect x=984 fill=#c72d97 /><rect x=996 fill=#c72894 /><rect x=1008 fill=#c72392 /><rect x=1020 fill=#c71c8f /><rect x=1032 fill=#c7148c /><rect x=1044 fill=#c7008a /><rect x=1056 fill=#c70088 /><rect x=1068 fill=#c70086 /><rect x=1080 fill=#c70084 /><rect x=1092 fill=#c70083 /><rect x=1104 fill=#c70081 /><rect x=1116 fill=#c7007f /><rect x=1128 fill=#c7007e /><rect x=1140 fill=#c7007c /><rect x=1152 fill=#c7007b /><rect x=1164 fill=#c7007a /><rect x=1176 fill=#c70078 /><rect x=1188 fill=#c70077 /><rect x=1200 fill=#c70076 /><rect x=1212 fill=#c70075 /><rect x=1224 fill=#c70074 /><rect x=1236 fill=#c70073 /><rect x=1248 fill=#c70071 /><rect x=1260 fill=#c70070 /><rect x=1272 fill=#c7006f /><rect x=1284 fill=#c7006e /><rect x=1296 fill=#c7006e /><rect x=1308 fill=#c7006d /><rect x=1320 fill=#c7006c /><rect x=1332 fill=#c7006b /><rect x=1344 fill=#c7006a /><rect x=1356 fill=#c70069 /><rect x=1368 fill=#c70068 /><rect x=1380 fill=#c70068 /><rect x=1392 fill=#c70067 /><rect x=1404 fill=#c70066 /><rect x=1416 fill=#c70065 /><rect x=1428 fill=#c70065 /><rect x=1440 fill=#c70064 /><rect x=1452 fill=#c70063 /><rect x=1464 fill=#c70062 /><rect x=1476 fill=#c70062 /><rect x=1488 fill=#c70061 /><rect x=1500 fill=#c70061 /><rect x=1512 fill=#c70060 /></g>
<g transform="translate(0,816)"><rect x=288 fill=#00a4c7 /><rect x=300 fill=#00a3c7 /><rect x=312 fill=#00a2c7 /><rect x=324 fill=#00a1c7 /><rect x=336 fill=#00a0c7 /><rect x=348 fill=#009fc7 /><rect x=360 fill=#009ec7 /><rect x=372 fill=#009dc7 /><rect x=384 fill=#009bc7 /><rect x=396 fill=#009ac7 /><rect x=408 fill=#0099c7 /><rect x=420 fill=#0097c7 /><rect x=432 fill=#0095c7 /><rect x=444 fill=#0093c7 /><rect x=456 fill=#0091c7 /><rect x=468 fill=#008fc7 /><rect x=480 fill=#008dc7 /><rect x=492 fill=#008ac7 /><rect x=504 fill=#0087c7 /><rect x=516 fill=#0084c7 /><rect x=528 fill=#0081c7 /><rect x=540 fill=#007dc7 /><rect x=552 fill=#0079c7 /><rect x=564 fill=#2777c7 /><rect x=576 fill=#3976c7 /><rect x=588 fill=#4575c7 /><rect x=600 fill=#5074c7 /><rect x=612 fill=#5973c7 /><rect x=624 fill=#6171c7 /><rect x=636 fill=#6970c7 /><rect x=648 fill=#706fc7 /><rect x=660 fill=#776dc7 /><rect x=672 fill=#7e6cc7 /><rect x=684 fill=#846bc7 /><rect x=696 fill=#8a69c7 /><rect x=708 fill=#9068c7 /><rect x=720 fill=#9566c7 /><rect x=732 fill=#9b64c7 /><rect x=744 fill=#a063c7 /><rect x=756 fill=#a661c7 /><rect x=768 fill=#ab5fc7 /><rect x=780 fill=#b05dc7 /><rect x=792 fill=#b55bc7 /><rect x=804 fill=#ba59c7 /><rect x=816 fill=#bf57c7 /><rect x=828 fill=#c454c7 /><rect x=840 fill=#c751c5 /><rect x=852 fill=#c74cc0 /><rect x=864 fill=#c748bc /><rect x=876 fill=#c743b8 /><rect x=888 fill=#c73fb4 /><rect x=900 fill=#c73ab0 /><rect x=912 fill=#c736ac /><rect x=924 fill=#c731a9 /><rect x=936 fill=#c72ca5 /><rect x=948 fill=#c726a2 /><rect x=960 fill=#c7209f /><rect x=972 fill=#c7189c /><rect x=984 fill=#c70a99 /><rect x=996 fill=#c70097 /><rect x=1008 fill=#c70094 /><rect x=1020 fill=#c70092 /><rect x=1032 fill=#c70090 /><rect x=1044 fill=#c7008e /><rect x=1056 fill=#c7008c /><rect x=1068 fill=#c7008a /><rect x=1080 fill=#c70089 /><rect x=1092 fill=#c70087 /><rect x=1104 fill=#c70085 /><rect x=1116 fill=#c70084 /><rect x=1128 fill=#c70082 /><rect x=1140 fill=#c70081 /><rect x=1152 fill=#c7007f /><rect x=1164 fill=#c7007e /><rect x=1176 fill=#c7007d /><rect x=1188 fill=#c7007b /><rect x=1200 fill=#c7007a /><rect x=1212 fill=#c70079 /><rect x=1224 fill=#c70078 /><rect x=1236 fill=#c70077 /><rect x=1248 fill=#c70076 /><rect x=1260 fill=#c70075 /><rect x=1272 fill=#c70074 /><rect x=1284 fill=#c70073 /><rect x=1296 fill=#c70072 /><rect x=1308 fill=#c70071 /><rect x=1320 fill=#c70070 /><rect x=1332 fill=#c7006f /><rect x=1344 fill=#c7006e /><rect x=1356 fill=#c7006d /><rect x=1368 fill=#c7006c /><rect x=1380 fill=#c7006c /><rect x=1392 fill=#c7006b /><rect x=1404 fill=#c7006a /><rect x=1416 fill=#c70069 /><rect x=1428 fill=#c70069 /><rect x=1440 fill=#c70068 /><rect x=1452 fill=#c70067 /></g>
<g transform="translate(0,828)"><rect x=300 fill=#009fc7 /><rect x=312 fill=#009ec7 /><rect x=324 fill=#009dc7 /><rect x=336 fill=#009cc7 /><rect x=348 fill=#009ac7 /><rect x=360 fill=#0099c7 /><rect x=372 fill=#0098c7 /><rect x=384 fill=#0096c7 /><rect x=396 fill=#0094c7 /><rect x=408 fill=#0093c7 /><rect x=420 fill=#0091c7 /><rect x=432 fill=#008fc7 /><rect x=444 fill=#008dc7 /><rect x=456 fill=#008ac7 /><rect x=468 fill=#0088c7 /><rect x=480 fill=#0085c7 /><rect x=492 fill=#0082c7 /><rect x=504 fill=#007fc7 /><rect x=516 fill=#007bc7 /><rect x=528 fill=#0077c7 /><rect x=540 fill=#0072c7 /><rect x=552 fill=#206fc7 /><rect x=564 fill=#346ec7 /><rect x=576 fill=#416dc7 /><rect x=588 fill=#4c6bc7 /><rect x=600 fill=#556ac7 /><rect x=612 fill=#5d69c7 /><rect x=624 fill=#6567c7 /><rect x=636 fill=#6c66c7 /><rect x=648 fill=#7365c7 /><rect x=660 fill=#7a63c7 /><rect x=672 fill=#8061c7 /><rect x=684 fill=#8660c7 /><rect x=696 fill=#8b5ec7 /><rect x=708 fill=#915cc7 /><rect x=720 fill=#975ac7 /><rect x=732 fill=#9c58c7 /><rect x=744 fill=#a156c7 /><rect x=756 fill=#a654c7 /><rect x=768 fill=#ab52c7 /><rect x=780 fill=#b04fc7 /><rect x=792 fill=#b54dc7 /><rect x=804 fill=#ba4ac7 /><rect x=816 fill=#bf47c7 /><rect x=828 fill=#c344c7 /><rect x=840 fill=#c740c6 /><rect x=852 fill=#c73bc1 /><rect x=864 fill=#c736bd /><rect x=876 fill=#c730b9 /><rect x=888 fill=#c72ab5 /><rect x=900 fill=#c724b1 /><rect x=912 fill=#c71cad /><rect x=924 fill=#c710aa /><rect x=936 fill=#c700a7 /><rect x=948 fill=#c700a4 /><rect x=960 fill=#c700a1 /><rect x=972 fill=#c7009f /><rect x=984 fill=#c7009c /><rect x=996 fill=#c7009a /><rect x=1008 fill=#c70098 /><rect x=1020 fill=#c70096 /><rect x=1032 fill=#c70094 /><rect x=1044 fill=#c70092 /><rect x=1056 fill=#c70090 /><rect x=1068 fill=#c7008e /><rect x=1080 fill=#c7008c /><rect x=1092 fill=#c7008b /><rect x=1104 fill=#c70089 /><rect x=1116 fill=#c70087 /><rect x=1128 fill=#c70086 /><rect x=1140 fill=#c70085 /><rect x=1152 fill=#c70083 /><rect x=1164 fill=#c70082 /><rect x=1176 fill=#c70081 /><rect x=1188 fill=#c7007f /><rect x=1200 fill=#c7007e /><rect x=1212 fill=#c7007d /><rect x=1224 fill=#c7007c /><rect x=1236 fill=#c7007b /><rect x=1248 fill=#c7007a /><rect x=1260 fill=#c70079 /><rect x=1272 fill=#c70078 /><rect x=1284 fill=#c70077 /><rect x=1296 fill=#c70076 /><rect x=1308 fill=#c70075 /><rect x=1320 fill=#c70074 /><rect x=1332 fill=#c70073 /><rect x=1344 fill=#c70072 /><rect x=1356 fill=#c70071 /><rect x=1368 fill=#c70070 /><rect x=1380 fill=#c7006f /></g>
<g transform="translate(0,840)"><rect x=312 fill=#0099c7 /><rect x=324 fill=#0098c7 /><rect x=336 fill=#0097c7 /><rect x=348 fill=#0095c7 /><rect x=360 fill=#0094c7 /><rect x=372 fill=#0092c7 /><rect x=384 fill=#0090c7 /><rect x=396 fill=#008fc7 /><rect x=408 fill=#008dc7 /><rect x=420 fill=#008ac7 /><rect x=432 fill=#0088c7 /><rect x=444 fill=#0086c7 /><rect x=456 fill=#0083c7 /><rect x=468 fill=#0080c7 /><rect x=480 fill=#007dc7 /><rect x=492 fill=#0079c7 /><rect x=504 fill=#0075c7 /><rect x=516 fill=#0071c7 /><rect x=528 fill=#006cc7 /><rect x=540 fill=#1767c7 /><rect x=552 fill=#2e66c7 /><rect x=564 fill=#3d65c7 /><rect x=576 fill=#4863c7 /><rect x=588 fill=#5162c7 /><rect x=600 fill=#5a60c7 /><rect x=612 fill=#615fc7 /><rect x=624 fill=#695dc7 /><rect x=636 fill=#6f5bc7 /><rect x=648 fill=#765ac7 /><rect x=660 fill=#7c58c7 /><rect x=672 fill=#8256c7 /><rect x=684 fill=#8854c7 /><rect x=696 fill=#8d52c7 /><rect x=708 fill=#924fc7 /><rect x=720 fill=#984dc7 /><rect x=732 fill=#9d4bc7 /><rect x=744 fill=#a248c7 /><rect x=756 fill=#a745c7 /><rect x=768 fill=#ac42c7 /><rect x=780 fill=#b03fc7 /><rect x=792 fill=#b53bc7 /><rect x=804 fill=#ba37c7 /><rect x=816 fill=#be33c7 /><rect x=828 fill=#c32ec7 /><rect x=840 fill=#c728c6 /><rect x=852 fill=#c720c2 /><rect x=864 fill=#c716be /><rect x=876 fill=#c700ba /><rect x=888 fill=#c700b6 /><rect x=900 fill=#c700b3 /><rect x=912 fill=#c700af /><rect x=924 fill=#c700ac /><rect x=936 fill=#c700a9 /><rect x=948 fill=#c700a7 /><rect x=960 fill=#c700a4 /><rect x=972 fill=#c700a2 /><rect x=984 fill=#c7009f /><rect x=996 fill=#c7009d /><rect x=1008 fill=#c7009b /><rect x=1020 fill=#c70099 /><rect x=1032 fill=#c70097 /><rect x=1044 fill=#c70095 /><rect x=1056 fill=#c70093 /><rect x=1068 fill=#c70091 /><rect x=1080 fill=#c70090 /><rect x=1092 fill=#c7008e /><rect x=1104 fill=#c7008c /><rect x=1116 fill=#c7008b /><rect x=1128 fill=#c70089 /><rect x=1140 fill=#c70088 /><rect x=1152 fill=#c70087 /><rect x=1164 fill=#c70085 /><rect x=1176 fill=#c70084 /><rect x=1188 fill=#c70083 /><rect x=1200 fill=#c70082 /><rect x=1212 fill=#c70080 /><rect x=1224 fill=#c7007f /><rect x=1236 fill=#c7007e /><rect x=1248 fill=#c7007d /><rect x=1260 fill=#c7007c /><rect x=1272 fill=#c7007b /><rect x=1284 fill=#c7007a /><rect x=1296 fill=#c70079 /><rect x=1308 fill=#c70078 /><rect x=1320 fill=#c70077 /></g>
<g transform="translate(0,852)"><rect x=324 fill=#0093c7 /><rect x=336 fill=#0092c7 /><rect x=348 fill=#0090c7 /><rect x=360 fill=#008ec7 /><rect x=372 fill=#008dc7 /><rect x=384 fill=#008bc7 /><rect x=396 fill=#0088c7 /><rect x=408 fill=#0086c7 /><rect x=420 fill=#0084c7 /><rect x=432 fill=#0081c7 /><rect x=444 fill=#007ec7 /><rect x=456 fill=#007bc7 /><rect x=468 fill=#0078c7 /><rect x=480 fill=#0074c7 /><rect x=492 fill=#0070c7 /><rect x=504 fill=#006bc7 /><rect x=516 fill=#0065c7 /><rect x=528 fill=#055fc7 /><rect x=540 fill=#295ec7 /><rect x=552 fill=#385cc7 /><rect x=564 fill=#445bc7 /><rect x=576 fill=#4e59c7 /><rect x=588 fill=#5657c7 /><rect x=600 fill=#5e55c7 /><rect x=612 fill=#6554c7 /><rect x=624 fill=#6c52c7 /><rect x=636 fill=#7250c7 /><rect x=648 fill=#784dc7 /><rect x=660 fill=#7e4bc7 /><rect x=672 fill=#8449c7 /><rect x=684 fill=#8946c7 /><rect x=696 fill=#8e44c7 /><rect x=708 fill=#9441c7 /><rect x=720 fill=#993ec7 /><rect x=732 fill=#9e3ac7 /><rect x=744 fill=#a237c7 /><rect x=756 fill=#a732c7 /><rect x=768 fill=#ac2ec7 /><rect x=780 fill=#b128c7 /><rect x=792 fill=#b522c7 /><rect x=804 fill=#ba19c7 /><rect x=816 fill=#be06c7 /><rect x=828 fill=#c300c7 /><rect x=840 fill=#c700c7 /><rect x=852 fill=#c700c3 /><rect x=864 fill=#c700bf /><rect x=876 fill=#c700bb /><rect x=888 fill=#c700b8 /><rect x=900 fill=#c700b4 /><rect x=912 fill=#c700b1 /><rect x=924 fill=#c700ae /><rect x=936 fill=#c700ac /><rect x=948 fill=#c700a9 /><rect x=960 fill=#c700a6 /><rect x=972 fill=#c700a4 /><rect x=984 fill=#c700a2 /><rect x=996 fill=#c700a0 /><rect x=1008 fill=#c7009e /><rect x=1020 fill=#c7009c /><rect x=1032 fill=#c7009a /><rect x=1044 fill=#c70098 /><rect x=1056 fill=#c70096 /><rect x=1068 fill=#c70094 /><rect x=1080 fill=#c70093 /><rect x=1092 fill=#c70091 /><rect x=1104 fill=#c7008f /><rect x=1116 fill=#c7008e /><rect x=1128 fill=#c7008d /><rect x=1140 fill=#c7008b /><rect x=1152 fill=#c7008a /><rect x=1164 fill=#c70088 /><rect x=1176 fill=#c70087 /><rect x=1188 fill=#c70086 /><rect x=1200 fill=#c70085 /><rect x=1212 fill=#c70084 /><rect x=1224 fill=#c70082 /><rect x=1236 fill=#c70081 /><rect x=1248 fill=#c70080 /></g>
<g transform="translate(0,864)"><rect x=336 fill=#008cc7 /><rect x=348 fill=#008bc7 /><rect x=360 fill=#0089c7 /><rect x=372 fill=#0087c7 /><rect x=384 fill=#0084c7 /><rect x=396 fill=#0082c7 /><rect x=408 fill=#007fc7 /><rect x=420 fill=#007dc7 /><rect x=432 fill=#007ac7 /><rect x=444 fill=#0076c7 /><rect x=456 fill=#0073c7 /><rect x=468 fill=#006fc7 /><rect x=480 fill=#006ac7 /><rect x=492 fill=#0065c7 /><rect x=504 fill=#005fc7 /><rect x=516 fill=#0058c7 /><rect x=528 fill=#2355c7 /><rect x=540 fill=#3453c7 /><rect x=552 fill=#4052c7 /><rect x=564 fill=#4a50c7 /><rect x=576 fill=#534ec7 /><rect x=588 fill=#5a4cc7 /><rect x=600 fill=#6249c7 /><rect x=612 fill=#6847c7 /><rect x=624 fill=#6f45c7 /><rect x=636 fill=#7542c7 /><rect x=648 fill=#7b3fc7 /><rect x=660 fill=#803cc7 /><rect x=672 fill=#8639c7 /><rect x=684 fill=#8b36c7 /><rect x=696 fill=#9032c7 /><rect x=708 fill=#952ec7 /><rect x=720 fill=#9a29c7 /><rect x=732 fill=#9e23c7 /><rect x=744 fill=#a31bc7 /><rect x=756 fill=#a80ec7 /><rect x=768 fill=#ac00c7 /><rect x=780 fill=#b100c7 /><rect x=792 fill=#b600c7 /><rect x=804 fill=#ba00c7 /><rect x=816 fill=#be00c7 /><rect x=828 fill=#c200c7 /><rect x=840 fill=#c700c7 /><rect x=852 fill=#c700c3 /><rect x=864 fill=#c700c0 /><rect x=876 fill=#c700bc /><rect x=888 fill=#c700b9 /><rect x=900 fill=#c700b6 /><rect x=912 fill=#c700b3 /><rect x=924 fill=#c700b0 /><rect x=936 fill=#c700ae /><rect x=948 fill=#c700ab /><rect x=960 fill=#c700a9 /><rect x=972 fill=#c700a6 /><rect x=984 fill=#c700a4 /><rect x=996 fill=#c700a2 /><rect x=1008 fill=#c700a0 /><rect x=1020 fill=#c7009e /><rect x=1032 fill=#c7009c /><rect x=1044 fill=#c7009a /><rect x=1056 fill=#c70099 /><rect x=1068 fill=#c70097 /><rect x=1080 fill=#c70095 /><rect x=1092 fill=#c70094 /><rect x=1104 fill=#c70092 /><rect x=1116 fill=#c70091 /><rect x=1128 fill=#c7008f /><rect x=1140 fill=#c7008e /><rect x=1152 fill=#c7008d /><rect x=1164 fill=#c7008b /><rect x=1176 fill=#c7008a /></g>
<g transform="translate(0,876)"><rect x=336 fill=#0087c7 /><rect x=348 fill=#0085c7 /><rect x=360 fill=#0083c7 /><rect x=372 fill=#0080c7 /><rect x=384 fill=#007ec7 /><rect x=396 fill=#007bc7 /><rect x=408 fill=#0078c7 /><rect x=420 fill=#0075c7 /><rect x=432 fill=#0072c7 /><rect x=444 fill=#006ec7 /><rect x=456 fill=#0069c7 /><rect x=468 fill=#0065c7 /><rect x=480 fill=#005fc7 /><rect x=492 fill=#0059c7 /><rect x=504 fill=#0052c7 /><rect x=516 fill=#1c4cc7 /><rect x=528 fill=#2f4ac7 /><rect x=540 fill=#3c48c7 /><rect x=552 fill=#4646c7 /><rect x=564 fill=#4f43c7 /><rect x=576 fill=#5741c7 /><rect x=588 fill=#5e3ec7 /><rect x=600 fill=#653bc7 /><rect x=612 fill=#6b38c7 /><rect x=624 fill=#7135c7 /><rect x=636 fill=#7731c7 /><rect x=648 fill=#7d2dc7 /><rect x=660 fill=#8229c7 /><rect x=672 fill=#8723c7 /><rect x=684 fill=#8c1cc7 /><rect x=696 fill=#9112c7 /><rect x=708 fill=#9600c7 /><rect x=720 fill=#9b00c7 /><rect x=732 fill=#a000c7 /><rect x=744 fill=#a500c7 /><rect x=756 fill=#a900c7 /><rect x=768 fill=#ae00c7 /><rect x=780 fill=#b200c7 /><rect x=792 fill=#b600c7 /><rect x=804 fill=#ba00c7 /><rect x=816 fill=#be00c7 /><rect x=828 fill=#c200c7 /><rect x=840 fill=#c600c7 /><rect x=852 fill=#c700c4 /><rect x=864 fill=#c700c1 /><rect x=876 fill=#c700bd /><rect x=888 fill=#c700ba /><rect x=900 fill=#c700b7 /><rect x=912 fill=#c700b4 /><rect x=924 fill=#c700b2 /><rect x=936 fill=#c700af /><rect x=948 fill=#c700ad /><rect x=960 fill=#c700ab /><rect x=972 fill=#c700a8 /><rect x=984 fill=#c700a6 /><rect x=996 fill=#c700a4 /><rect x=1008 fill=#c700a2 /><rect x=1020 fill=#c700a0 /><rect x=1032 fill=#c7009e /><rect x=1044 fill=#c7009d /><rect x=1056 fill=#c7009b /><rect x=1068 fill=#c70099 /><rect x=1080 fill=#c70098 /><rect x=1092 fill=#c70096 /><rect x=1104 fill=#c70095 /><rect x=1116 fill=#c70093 /></g>
<g transform="translate(0,888)"><rect x=348 fill=#007fc7 /><rect x=360 fill=#007dc7 /><rect x=372 fill=#007ac7 /><rect x=384 fill=#0077c7 /><rect x=396 fill=#0074c7 /><rect x=408 fill=#0071c7 /><rect x=420 fill=#006dc7 /><rect x=432 fill=#0069c7 /><rect x=444 fill=#0064c7 /><rect x=456 fill=#005fc7 /><rect x=468 fill=#0059c7 /><rect x=480 fill=#0053c7 /><rect x=492 fill=#004bc7 /><rect x=504 fill=#1242c7 /><rect x=516 fill=#2a40c7 /><rect x=528 fill=#383dc7 /><rect x=540 fill=#433bc7 /><rect x=552 fill=#4c38c7 /><rect x=564 fill=#5435c7 /><rect x=576 fill=#5b31c7 /><rect x=588 fill=#622dc7 /><rect x=600 fill=#6829c7 /><rect x=612 fill=#6e24c7 /><rect x=624 fill=#741ec7 /><rect x=636 fill=#7915c7 /><rect x=648 fill=#7f00c7 /><rect x=660 fill=#8500c7 /><rect x=672 fill=#8a00c7 /><rect x=684 fill=#8f00c7 /><rect x=696 fill=#9400c7 /><rect x=708 fill=#9900c7 /><rect x=720 fill=#9e00c7 /><rect x=732 fill=#a200c7 /><rect x=744 fill=#a700c7 /><rect x=756 fill=#ab00c7 /><rect x=768 fill=#af00c7 /><rect x=780 fill=#b300c7 /><rect x=792 fill=#b700c7 /><rect x=804 fill=#bb00c7 /><rect x=816 fill=#bf00c7 /><rect x=828 fill=#c200c7 /><rect x=840 fill=#c600c7 /><rect x=852 fill=#c700c5 /><rect x=864 fill=#c700c1 /><rect x=876 fill=#c700be /><rect x=888 fill=#c700bb /><rect x=900 fill=#c700b9 /><rect x=912 fill=#c700b6 /><rect x=924 fill=#c700b3 /><rect x=936 fill=#c700b1 /><rect x=948 fill=#c700af /><rect x=960 fill=#c700ac /><rect x=972 fill=#c700aa /><rect x=984 fill=#c700a8 /><rect x=996 fill=#c700a6 /><rect x=1008 fill=#c700a4 /><rect x=1020 fill=#c700a2 /><rect x=1032 fill=#c700a1 /><rect x=1044 fill=#c7009f /></g>
<g transform="translate(0,900)"><rect x=360 fill=#0076c7 /><rect x=372 fill=#0073c7 /><rect x=384 fill=#0070c7 /><rect x=396 fill=#006cc7 /><rect x=408 fill=#0068c7 /><rect x=420 fill=#0064c7 /><rect x=432 fill=#005fc7 /><rect x=444 fill=#005ac7 /><rect x=456 fill=#0054c7 /><rect x=468 fill=#004cc7 /><rect x=480 fill=#0043c7 /><rect x=492 fill=#0038c7 /><rect x=504 fill=#2534c7 /><rect x=516 fill=#3431c7 /><rect x=528 fill=#3f2dc7 /><rect x=540 fill=#4829c7 /><rect x=552 fill=#5024c7 /><rect x=564 fill=#581fc7 /><rect x=576 fill=#5f17c7 /><rect x=588 fill=#6509c7 /><rect x=600 fill=#6c00c7 /><rect x=612 fill=#7200c7 /><rect x=624 fill=#7900c7 /><rect x=636 fill=#7e00c7 /><rect x=648 fill=#8400c7 /><rect x=660 fill=#8900c7 /><rect x=672 fill=#8e00c7 /><rect x=684 fill=#9300c7 /><rect x=696 fill=#9800c7 /><rect x=708 fill=#9c00c7 /><rect x=720 fill=#a000c7 /><rect x=732 fill=#a400c7 /><rect x=744 fill=#a900c7 /><rect x=756 fill=#ac00c7 /><rect x=768 fill=#b000c7 /><rect x=780 fill=#b400c7 /><rect x=792 fill=#b800c7 /><rect x=804 fill=#bb00c7 /><rect x=816 fill=#bf00c7 /><rect x=828 fill=#c200c7 /><rect x=840 fill=#c500c7 /><rect x=852 fill=#c700c5 /><rect x=864 fill=#c700c2 /><rect x=876 fill=#c700bf /><rect x=888 fill=#c700bc /><rect x=900 fill=#c700ba /><rect x=912 fill=#c700b7 /><rect x=924 fill=#c700b5 /><rect x=936 fill=#c700b2 /><rect x=948 fill=#c700b0 /><rect x=960 fill=#c700ae /><rect x=972 fill=#c700ac /></g>
<g transform="translate(0,912)"><rect x=372 fill=#006cc7 /><rect x=384 fill=#0068c7 /><rect x=396 fill=#0064c7 /><rect x=408 fill=#005fc7 /><rect x=420 fill=#005ac7 /><rect x=432 fill=#0054c7 /><rect x=444 fill=#004ec7 /><rect x=456 fill=#0046c7 /><rect x=468 fill=#003cc7 /><rect x=480 fill=#002ec7 /><rect x=492 fill=#1f25c7 /><rect x=504 fill=#3020c7 /><rect x=516 fill=#3b19c7 /><rect x=528 fill=#450ec7 /><rect x=540 fill=#4e00c7 /><rect x=552 fill=#5700c7 /><rect x=564 fill=#5f00c7 /><rect x=576 fill=#6600c7 /><rect x=588 fill=#6d00c7 /><rect x=600 fill=#7300c7 /><rect x=612 fill=#7900c7 /><rect x=624 fill=#7e00c7 /><rect x=636 fill=#8300c7 /><rect x=648 fill=#8800c7 /><rect x=660 fill=#8d00c7 /><rect x=672 fill=#9200c7 /><rect x=684 fill=#9600c7 /><rect x=696 fill=#9a00c7 /><rect x=708 fill=#9e00c7 /><rect x=720 fill=#a200c7 /><rect x=732 fill=#a600c7 /><rect x=744 fill=#aa00c7 /><rect x=756 fill=#ae00c7 /><rect x=768 fill=#b100c7 /><rect x=780 fill=#b500c7 /><rect x=792 fill=#b800c7 /><rect x=804 fill=#bc00c7 /><rect x=816 fill=#bf00c7 /><rect x=828 fill=#c200c7 /><rect x=840 fill=#c500c7 /><rect x=852 fill=#c700c6 /><rect x=864 fill=#c700c3 /><rect x=876 fill=#c700c0 /><rect x=888 fill=#c700bd /><rect x=900 fill=#c700bb /><rect x=912 fill=#c700b8 /></g>
<g transform="translate(0,924)"><rect x=396 fill=#005bc7 /><rect x=408 fill=#0055c7 /><rect x=420 fill=#004fc7 /><rect x=432 fill=#0048c7 /><rect x=444 fill=#003fc7 /><rect x=456 fill=#0033c7 /><rect x=468 fill=#0022c7 /><rect x=480 fill=#1900c7 /><rect x=492 fill=#3000c7 /><rect x=504 fill=#3d00c7 /><rect x=516 fill=#4800c7 /><rect x=528 fill=#5100c7 /><rect x=540 fill=#5900c7 /><rect x=552 fill=#6100c7 /><rect x=564 fill=#6700c7 /><rect x=576 fill=#6d00c7 /><rect x=588 fill=#7300c7 /><rect x=600 fill=#7900c7 /><rect x=612 fill=#7e00c7 /><rect x=624 fill=#8300c7 /><rect x=636 fill=#8800c7 /><rect x=648 fill=#8c00c7 /><rect x=660 fill=#9000c7 /><rect x=672 fill=#9500c7 /><rect x=684 fill=#9900c7 /><rect x=696 fill=#9d00c7 /><rect x=708 fill=#a000c7 /><rect x=720 fill=#a400c7 /><rect x=732 fill=#a800c7 /><rect x=744 fill=#ab00c7 /><rect x=756 fill=#af00c7 /><rect x=768 fill=#b200c7 /><rect x=780 fill=#b500c7 /><rect x=792 fill=#b900c7 /><rect x=804 fill=#bc00c7 /><rect x=816 fill=#bf00c7 /><rect x=828 fill=#c200c7 /><rect x=840 fill=#c500c7 /></g>
<g transform="translate(0,936)"><rect x=408 fill=#0049c7 /><rect x=420 fill=#0041c7 /><rect x=432 fill=#0037c7 /><rect x=444 fill=#002ac7 /><rect x=456 fill=#000ec7 /><rect x=468 fill=#2700c7 /><rect x=480 fill=#3700c7 /><rect x=492 fill=#4200c7 /><rect x=504 fill=#4c00c7 /><rect x=516 fill=#5400c7 /><rect x=528 fill=#5b00c7 /><rect x=540 fill=#6200c7 /><rect x=552 fill=#6800c7 /><rect x=564 fill=#6e00c7 /><rect x=576 fill=#7400c7 /><rect x=588 fill=#7900c7 /><rect x=600 fill=#7e00c7 /><rect x=612 fill=#8200c7 /><rect x=624 fill=#8700c7 /><rect x=636 fill=#8b00c7 /><rect x=648 fill=#8f00c7 /><rect x=660 fill=#9300c7 /><rect x=672 fill=#9700c7 /><rect x=684 fill=#9b00c7 /><rect x=696 fill=#9f00c7 /><rect x=708 fill=#a200c7 /><rect x=720 fill=#a600c7 /><rect x=732 fill=#a900c7 /><rect x=744 fill=#ac00c7 /><rect x=756 fill=#b000c7 /><rect x=768 fill=#b300c7 /></g>
<g transform="translate(0,948)"><rect x=420 fill=#002fc7 /><rect x=432 fill=#001dc7 /><rect x=444 fill=#1d00c7 /><rect x=456 fill=#3000c7 /><rect x=468 fill=#3c00c7 /><rect x=480 fill=#4600c7 /><rect x=492 fill=#4f00c7 /><rect x=504 fill=#5600c7 /><rect x=516 fill=#5d00c7 /><rect x=528 fill=#6300c7 /><rect x=540 fill=#6900c7 /><rect x=552 fill=#6f00c7 /><rect x=564 fill=#7400c7 /><rect x=576 fill=#7900c7 /><rect x=588 fill=#7d00c7 /><rect x=600 fill=#8200c7 /><rect x=612 fill=#8600c7 /><rect x=624 fill=#8a00c7 /><rect x=636 fill=#8e00c7 /><rect x=648 fill=#9200c7 /><rect x=660 fill=#9600c7 /><rect x=672 fill=#9a00c7 /><rect x=684 fill=#9d00c7 /><rect x=696 fill=#a100c7 /><rect x=708 fill=#a400c7 /></g>
<g transform="translate(0,960)"><rect x=432 fill=#2800c7 /><rect x=444 fill=#3600c7 /><rect x=456 fill=#4100c7 /><rect x=468 fill=#4a00c7 /><rect x=480 fill=#5100c7 /><rect x=492 fill=#5800c7 /><rect x=504 fill=#5f00c7 /><rect x=516 fill=#6500c7 /><rect x=528 fill=#6a00c7 /><rect x=540 fill=#6f00c7 /><rect x=552 fill=#7400c7 /><rect x=564 fill=#7900c7 /><rect x=576 fill=#7d00c7 /><rect x=588 fill=#8200c7 /><rect x=600 fill=#8600c7 /><rect x=612 fill=#8a00c7 /><rect x=624 fill=#8d00c7 /><rect x=636 fill=#9100c7 /></g>
<g transform="translate(0,972)"><rect x=456 fill=#4c00c7 /><rect x=468 fill=#5300c7 /><rect x=480 fill=#5a00c7 /><rect x=492 fill=#6000c7 /><rect x=504 fill=#6500c7 /><rect x=516 fill=#6b00c7 /><rect x=528 fill=#7000c7 /><rect x=540 fill=#7400c7 /><rect x=552 fill=#7900c7 /><rect x=564 fill=#7d00c7 /></g>
<g transform="translate(0,984)"><rect x=480 fill=#5a00c7 /><rect x=492 fill=#6000c7 /><rect x=504 fill=#6500c7 /></g>
</g></g>
<g fill="#454545" clip-path="url(#cc)">
<rect x="162" y="202" width="1" height="817"/>
<rect x="375" y="202" width="1" height="817"/>
<rect x="587" y="202" width="1" height="817"/>
<rect x="800" y="202" width="1" height="817"/>
<rect x="1013" y="202" width="1" height="817"/>
<rect x="1226" y="202" width="1" height="817"/>
<rect x="1438" y="202" width="1" height="817"/>
<rect x="1650" y="202" width="1" height="817"/>
<rect x="3" y="244" width="1914" height="1"/>
<rect x="3" y="325" width="1914" height="1"/>
<rect x="3" y="407" width="1914" height="1"/>
<rect x="3" y="488" width="1914" height="1"/>
<rect x="3" y="570" width="1914" height="1"/>
<rect x="3" y="652" width="1914" height="1"/>
<rect x="3" y="733" width="1914" height="1"/>
<rect x="3" y="815" width="1914" height="1"/>
<rect x="3" y="897" width="1914" height="1"/>
</g>
<g clip-path="url(#ch)"><g class="c" filter="url(#bl)">
<g transform="translate(0,420)"><rect x=828 fill=#53ff00 /></g>
<g transform="translate(0,432)"><rect x=804 fill=#37ff00 /><rect x=816 fill=#47ff00 /><rect x=828 fill=#53ff00 /><rect x=840 fill=#5eff00 /><rect x=852 fill=#68ff00 /><rect x=864 fill=#70ff00 /></g>
<g transform="translate(0,444)"><rect x=804 fill=#35ff00 /><rect x=816 fill=#47ff00 /><rect x=828 fill=#54ff00 /><rect x=840 fill=#5fff00 /><rect x=852 fill=#69ff00 /><rect x=864 fill=#71ff00 /><rect x=876 fill=#79ff00 /><rect x=888 fill=#81ff00 /></g>
<g transform="translate(0,456)"><rect x=792 fill=#0eff00 /><rect x=804 fill=#34ff00 /><rect x=816 fill=#46ff00 /><rect x=828 fill=#54ff00 /><rect x=840 fill=#60ff00 /><rect x=852 fill=#6aff00 /><rect x=864 fill=#73ff00 /><rect x=876 fill=#7bff00 /><rect x=888 fill=#83ff00 /><rect x=900 fill=#8aff00 /><rect x=912 fill=#90ff00 /><rect x=924 fill=#97ff00 /></g>
<g transform="translate(0,468)"><rect x=780 fill=#00ff34 /><rect x=792 fill=#00ff0f /><rect x=804 fill=#32ff00 /><rect x=816 fill=#46ff00 /><rect x=828 fill=#54ff00 /><rect x=840 fill=#60ff00 /><rect x=852 fill=#6bff00 /><rect x=864 fill=#74ff00 /><rect x=876 fill=#7dff00 /><rect x=888 fill=#85ff00 /><rect x=900 fill=#8cff00 /><rect x=912 fill=#93ff00 /><rect x=924 fill=#99ff00 /><rect x=936 fill=#a0ff00 /><rect x=948 fill=#a6ff00 /><rect x=960 fill=#abff00 /></g>
<g transform="translate(0,480)"><rect x=780 fill=#00ff38 /><rect x=792 fill=#00ff19 /><rect x=804 fill=#30ff00 /><rect x=816 fill=#45ff00 /><rect x=828 fill=#55ff00 /><rect x=840 fill=#61ff00 /><rect x=852 fill=#6cff00 /><rect x=864 fill=#76ff00 /><rect x=876 fill=#7fff00 /><rect x=888 fill=#87ff00 /><rect x=900 fill=#8eff00 /><rect x=912 fill=#96ff00 /><rect x=924 fill=#9cff00 /><rect x=936 fill=#a3ff00 /><rect x=948 fill=#a9ff00 /><rect x=960 fill=#afff00 /><rect x=972 fill=#b4ff00 /><rect x=984 fill=#baff00 /><rect x=996 fill=#bfff00 /></g>
<g transform="translate(0,492)"><rect x=768 fill=#00ff4d /><rect x=780 fill=#00ff3c /><rect x=792 fill=#1dff2a /><rect x=804 fill=#37ff22 /><rect x=816 fill=#47ff17 /><rect x=828 fill=#55ff00 /><rect x=840 fill=#62ff00 /><rect x=852 fill=#6eff00 /><rect x=864 fill=#78ff00 /><rect x=876 fill=#81ff00 /><rect x=888 fill=#89ff00 /><rect x=900 fill=#91ff00 /><rect x=912 fill=#98ff00 /><rect x=924 fill=#9fff00 /><rect x=936 fill=#a6ff00 /><rect x=948 fill=#acff00 /><rect x=960 fill=#b2ff00 /><rect x=972 fill=#b8ff00 /><rect x=984 fill=#beff00 /><rect x=996 fill=#c3ff00 /><rect x=1008 fill=#c9ff00 /><rect x=1020 fill=#ceff00 /></g>
<g transform="translate(0,504)"><rect x=756 fill=#00ff5d /><rect x=768 fill=#00ff50 /><rect x=780 fill=#0dff41 /><rect x=792 fill=#32ff3d /><rect x=804 fill=#44ff38 /><rect x=816 fill=#52ff33 /><rect x=828 fill=#5eff2d /><rect x=840 fill=#68ff25 /><rect x=852 fill=#71ff1b /><rect x=864 fill=#7aff00 /><rect x=876 fill=#83ff00 /><rect x=888 fill=#8cff00 /><rect x=900 fill=#94ff00 /><rect x=912 fill=#9cff00 /><rect x=924 fill=#a3ff00 /><rect x=936 fill=#aaff00 /><rect x=948 fill=#b0ff00 /><rect x=960 fill=#b6ff00 /><rect x=972 fill=#bcff00 /><rect x=984 fill=#c2ff00 /><rect x=996 fill=#c8ff00 /><rect x=1008 fill=#cdff00 /><rect x=1020 fill=#d2ff00 /><rect x=1032 fill=#d8ff00 /><rect x=1044 fill=#dcff00 /><rect x=1056 fill=#e1ff00 /></g>
<g transform="translate(0,516)"><rect x=756 fill=#00ff60 /><rect x=768 fill=#00ff54 /><rect x=780 fill=#2cff4f /><rect x=792 fill=#41ff4b /><rect x=804 fill=#50ff48 /><rect x=816 fill=#5cff44 /><rect x=828 fill=#66ff40 /><rect x=840 fill=#70ff3b /><rect x=852 fill=#79ff36 /><rect x=864 fill=#81ff30 /><rect x=876 fill=#89ff28 /><rect x=888 fill=#90ff1f /><rect x=900 fill=#98ff0f /><rect x=912 fill=#9fff00 /><rect x=924 fill=#a7ff00 /><rect x=936 fill=#aeff00 /><rect x=948 fill=#b4ff00 /><rect x=960 fill=#bbff00 /><rect x=972 fill=#c1ff00 /><rect x=984 fill=#c7ff00 /><rect x=996 fill=#cdff00 /><rect x=1008 fill=#d2ff00 /><rect x=1020 fill=#d8ff00 /><rect x=1032 fill=#ddff00 /><rect x=1044 fill=#e2ff00 /><rect x=1056 fill=#e7ff00 /><rect x=1068 fill=#ecff00 /><rect x=1080 fill=#f1ff00 /><rect x=1092 fill=#f5ff00 /></g>
<g transform="translate(0,528)"><rect x=744 fill=#00ff6e /><rect x=756 fill=#00ff64 /><rect x=768 fill=#25ff5d /><rect x=780 fill=#3dff5b /><rect x=792 fill=#4dff58 /><rect x=804 fill=#5aff55 /><rect x=816 fill=#65ff52 /><rect x=828 fill=#6fff4e /><rect x=840 fill=#78ff4b /><rect x=852 fill=#81ff47 /><rect x=864 fill=#89ff43 /><rect x=876 fill=#91ff3e /><rect x=888 fill=#98ff39 /><rect x=900 fill=#9fff33 /><rect x=912 fill=#a6ff2c /><rect x=924 fill=#acff23 /><rect x=936 fill=#b3ff16 /><rect x=948 fill=#b9ff00 /><rect x=960 fill=#c0ff00 /><rect x=972 fill=#c6ff00 /><rect x=984 fill=#ccff00 /><rect x=996 fill=#d2ff00 /><rect x=1008 fill=#d8ff00 /><rect x=1020 fill=#deff00 /><rect x=1032 fill=#e3ff00 /><rect x=1044 fill=#e8ff00 /><rect x=1056 fill=#eeff00 /><rect x=1068 fill=#f3ff00 /><rect x=1080 fill=#f7ff00 /><rect x=1092 fill=#fcff00 /><rect x=1104 fill=#fffd00 /><rect x=1116 fill=#fff900 /><rect x=1128 fill=#fff500 /></g>
<g transform="translate(0,540)"><rect x=732 fill=#00ff7b /><rect x=744 fill=#00ff72 /><rect x=756 fill=#1aff6a /><rect x=768 fill=#38ff68 /><rect x=780 fill=#4aff66 /><rect x=792 fill=#58ff63 /><rect x=804 fill=#64ff61 /><rect x=816 fill=#6eff5e /><rect x=828 fill=#78ff5b /><rect x=840 fill=#80ff58 /><rect x=852 fill=#89ff55 /><rect x=864 fill=#91ff52 /><rect x=876 fill=#98ff4e /><rect x=888 fill=#9fff4a /><rect x=900 fill=#a6ff46 /><rect x=912 fill=#adff41 /><rect x=924 fill=#b4ff3c /><rect x=936 fill=#baff36 /><rect x=948 fill=#c0ff2f /><rect x=960 fill=#c6ff27 /><rect x=972 fill=#ccff1b /><rect x=984 fill=#d2ff00 /><rect x=996 fill=#d8ff00 /><rect x=1008 fill=#deff00 /><rect x=1020 fill=#e4ff00 /><rect x=1032 fill=#eaff00 /><rect x=1044 fill=#efff00 /><rect x=1056 fill=#f5ff00 /><rect x=1068 fill=#faff00 /><rect x=1080 fill=#ffff00 /><rect x=1092 fill=#fffa00 /><rect x=1104 fill=#fff600 /><rect x=1116 fill=#fff100 /><rect x=1128 fill=#ffed00 /><rect x=1140 fill=#ffe900 /><rect x=1152 fill=#ffe600 /><rect x=1164 fill=#ffe200 /></g>
<g transform="translate(0,552)"><rect x=720 fill=#00ff86 /><rect x=732 fill=#00ff7f /><rect x=744 fill=#00ff77 /><rect x=756 fill=#32ff74 /><rect x=768 fill=#46ff72 /><rect x=780 fill=#55ff70 /><rect x=792 fill=#62ff6e /><rect x=804 fill=#6dff6c /><rect x=816 fill=#77ff69 /><rect x=828 fill=#80ff67 /><rect x=840 fill=#89ff64 /><rect x=852 fill=#91ff62 /><rect x=864 fill=#98ff5f /><rect x=876 fill=#a0ff5c /><rect x=888 fill=#a7ff59 /><rect x=900 fill=#aeff55 /><rect x=912 fill=#b5ff52 /><rect x=924 fill=#bbff4e /><rect x=936 fill=#c2ff4a /><rect x=948 fill=#c8ff45 /><rect x=960 fill=#ceff40 /><rect x=972 fill=#d4ff3a /><rect x=984 fill=#daff33 /><rect x=996 fill=#e0ff2b /><rect x=1008 fill=#e6ff20 /><rect x=1020 fill=#ecff09 /><rect x=1032 fill=#f1ff00 /><rect x=1044 fill=#f7ff00 /><rect x=1056 fill=#fdff00 /><rect x=1068 fill=#fffc00 /><rect x=1080 fill=#fff700 /><rect x=1092 fill=#fff200 /><rect x=1104 fill=#ffee00 /><rect x=1116 fill=#ffea00 /><rect x=1128 fill=#ffe600 /><rect x=1140 fill=#ffe200 /><rect x=1152 fill=#ffde00 /><rect x=1164 fill=#ffdb00 /><rect x=1176 fill=#ffd800 /><rect x=1188 fill=#ffd500 /><rect x=1200 fill=#ffd200 /></g>
<g transform="translate(0,564)"><rect x=720 fill=#00ff8b /><rect x=732 fill=#00ff84 /><rect x=744 fill=#2cff80 /><rect x=756 fill=#43ff7e /><rect x=768 fill=#53ff7c /><rect x=780 fill=#60ff7a /><rect x=792 fill=#6cff78 /><rect x=804 fill=#76ff76 /><rect x=816 fill=#7fff74 /><rect x=828 fill=#88ff72 /><rect x=840 fill=#91ff70 /><rect x=852 fill=#99ff6d /><rect x=864 fill=#a0ff6b /><rect x=876 fill=#a8ff68 /><rect x=888 fill=#afff66 /><rect x=900 fill=#b6ff63 /><rect x=912 fill=#bdff60 /><rect x=924 fill=#c3ff5d /><rect x=936 fill=#caff59 /><rect x=948 fill=#d0ff56 /><rect x=960 fill=#d6ff52 /><rect x=972 fill=#dcff4d /><rect x=984 fill=#e2ff49 /><rect x=996 fill=#e8ff44 /><rect x=1008 fill=#eeff3e /><rect x=1020 fill=#f4ff37 /><rect x=1032 fill=#faff2f /><rect x=1044 fill=#fffe25 /><rect x=1056 fill=#fff913 /><rect x=1068 fill=#fff300 /><rect x=1080 fill=#ffef00 /><rect x=1092 fill=#ffea00 /><rect x=1104 fill=#ffe600 /><rect x=1116 fill=#ffe200 /><rect x=1128 fill=#ffde00 /><rect x=1140 fill=#ffda00 /><rect x=1152 fill=#ffd700 /><rect x=1164 fill=#ffd300 /><rect x=1176 fill=#ffd000 /><rect x=1188 fill=#ffcd00 /><rect x=1200 fill=#ffca00 /><rect x=1212 fill=#ffc800 /><rect x=1224 fill=#ffc500 /><rect x=1236 fill=#ffc200 /></g>
<g transform="translate(0,576)"><rect x=708 fill=#00ff96 /><rect x=720 fill=#00ff90 /><rect x=732 fill=#23ff8b /><rect x=744 fill=#3eff89 /><rect x=756 fill=#50ff88 /><rect x=768 fill=#5eff86 /><rect x=780 fill=#6aff84 /><rect x=792 fill=#75ff83 /><rect x=804 fill=#7fff81 /><rect x=816 fill=#88ff7f /><rect x=828 fill=#91ff7d /><rect x=840 fill=#99ff7b /><rect x=852 fill=#a1ff79 /><rect x=864 fill=#a9ff77 /><rect x=876 fill=#b0ff74 /><rect x=888 fill=#b7ff72 /><rect x=900 fill=#beff6f /><rect x=912 fill=#c5ff6d /><rect x=924 fill=#cbff6a /><rect x=936 fill=#d2ff67 /><rect x=948 fill=#d8ff64 /><rect x=960 fill=#dfff61 /><rect x=972 fill=#e5ff5e /><rect x=984 fill=#ebff5a /><rect x=996 fill=#f1ff56 /><rect x=1008 fill=#f7ff52 /><rect x=1020 fill=#fdff4d /><rect x=1032 fill=#fffb47 /><rect x=1044 fill=#fff53f /><rect x=1056 fill=#fff038 /><rect x=1068 fill=#ffeb2f /><rect x=1080 fill=#ffe626 /><rect x=1092 fill=#ffe118 /><rect x=1104 fill=#ffdd00 /><rect x=1116 fill=#ffd900 /><rect x=1128 fill=#ffd500 /><rect x=1140 fill=#ffd200 /><rect x=1152 fill=#ffce00 /><rect x=1164 fill=#ffcb00 /><rect x=1176 fill=#ffc800 /><rect x=1188 fill=#ffc500 /><rect x=1200 fill=#ffc300 /><rect x=1212 fill=#ffc000 /><rect x=1224 fill=#ffbd00 /><rect x=1236 fill=#ffbb00 /><rect x=1248 fill=#ffb900 /><rect x=1260 fill=#ffb600 /><rect x=1272 fill=#ffb400 /></g>
<g transform="translate(0,588)"><rect x=696 fill=#00ffa0 /><rect x=708 fill=#00ff9b /><rect x=720 fill=#14ff96 /><rect x=732 fill=#39ff94 /><rect x=744 fill=#4dff93 /><rect x=756 fill=#5cff91 /><rect x=768 fill=#69ff90 /><rect x=780 fill=#74ff8e /><rect x=792 fill=#7eff8d /><rect x=804 fill=#88ff8b /><rect x=816 fill=#91ff89 /><rect x=828 fill=#9aff88 /><rect x=840 fill=#a2ff86 /><rect x=852 fill=#aaff84 /><rect x=864 fill=#b1ff82 /><rect x=876 fill=#b8ff80 /><rect x=888 fill=#c0ff7e /><rect x=900 fill=#c7ff7c /><rect x=912 fill=#cdff79 /><rect x=924 fill=#d4ff77 /><rect x=936 fill=#dbff74 /><rect x=948 fill=#e1ff72 /><rect x=960 fill=#e8ff6f /><rect x=972 fill=#eeff6c /><rect x=984 fill=#f4ff69 /><rect x=996 fill=#fbff66 /><rect x=1008 fill=#fffd62 /><rect x=1020 fill=#fff75c /><rect x=1032 fill=#fff256 /><rect x=1044 fill=#ffec50 /><rect x=1056 fill=#ffe74a /><rect x=1068 fill=#ffe244 /><rect x=1080 fill=#ffde3d /><rect x=1092 fill=#ffd936 /><rect x=1104 fill=#ffd52f /><rect x=1116 fill=#ffd126 /><rect x=1128 fill=#ffcd1b /><rect x=1140 fill=#ffc900 /><rect x=1152 fill=#ffc600 /><rect x=1164 fill=#ffc300 /><rect x=1176 fill=#ffc000 /><rect x=1188 fill=#ffbd00 /><rect x=1200 fill=#ffba00 /><rect x=1212 fill=#ffb800 /><rect x=1224 fill=#ffb500 /><rect x=1236 fill=#ffb300 /><rect x=1248 fill=#ffb100 /><rect x=1260 fill=#ffaf00 /><rect x=1272 fill=#ffad00 /><rect x=1284 fill=#ffab00 /><rect x=1296 fill=#ffa900 /></g>
<g transform="translate(0,600)"><rect x=696 fill=#00ffa6 /><rect x=708 fill=#00ffa1 /><rect x=720 fill=#33ff9f /><rect x=732 fill=#49ff9e /><rect x=744 fill=#59ff9c /><rect x=756 fill=#67ff9b /><rect x=768 fill=#73ff9a /><rect x=780 fill=#7eff98 /><rect x=792 fill=#88ff97 /><rect x=804 fill=#91ff95 /><rect x=816 fill=#9aff94 /><rect x=828 fill=#a2ff92 /><rect x=840 fill=#aaff91 /><rect x=852 fill=#b2ff8f /><rect x=864 fill=#baff8d /><rect x=876 fill=#c1ff8b /><rect x=888 fill=#c8ff89 /><rect x=900 fill=#d0ff88 /><rect x=912 fill=#d6ff86 /><rect x=924 fill=#ddff83 /><rect x=936 fill=#e4ff81 /><rect x=948 fill=#ebff7f /><rect x=960 fill=#f1ff7c /><rect x=972 fill=#f8ff7a /><rect x=984 fill=#feff77 /><rect x=996 fill=#fffa72 /><rect x=1008 fill=#fff46d /><rect x=1020 fill=#ffee67 /><rect x=1032 fill=#ffe962 /><rect x=1044 fill=#ffe45d /><rect x=1056 fill=#ffdf57 /><rect x=1068 fill=#ffda52 /><rect x=1080 fill=#ffd64d /><rect x=1092 fill=#ffd147 /><rect x=1104 fill=#ffcd42 /><rect x=1116 fill=#ffc93c /><rect x=1128 fill=#ffc535 /><rect x=1140 fill=#ffc12f /><rect x=1152 fill=#ffbe27 /><rect x=1164 fill=#ffba1d /><rect x=1176 fill=#ffb70c /><rect x=1188 fill=#ffb400 /><rect x=1200 fill=#ffb200 /><rect x=1212 fill=#ffaf00 /><rect x=1224 fill=#ffad00 /><rect x=1236 fill=#ffab00 /><rect x=1248 fill=#ffa800 /><rect x=1260 fill=#ffa600 /><rect x=1272 fill=#ffa400 /><rect x=1284 fill=#ffa300 /><rect x=1296 fill=#ffa100 /><rect x=1308 fill=#ff9f00 /><rect x=1320 fill=#ff9d00 /><rect x=1332 fill=#ff9c00 /></g>
<g transform="translate(0,612)"><rect x=684 fill=#00ffb1 /><rect x=696 fill=#00ffac /><rect x=708 fill=#2bffa9 /><rect x=720 fill=#45ffa8 /><rect x=732 fill=#57ffa7 /><rect x=744 fill=#65ffa6 /><rect x=756 fill=#72ffa5 /><rect x=768 fill=#7dffa4 /><rect x=780 fill=#88ffa2 /><rect x=792 fill=#91ffa1 /><rect x=804 fill=#9affa0 /><rect x=816 fill=#a3ff9e /><rect x=828 fill=#acff9d /><rect x=840 fill=#b4ff9c /><rect x=852 fill=#bbff9a /><rect x=864 fill=#c3ff98 /><rect x=876 fill=#caff97 /><rect x=888 fill=#d2ff95 /><rect x=900 fill=#d9ff93 /><rect x=912 fill=#e0ff92 /><rect x=924 fill=#e7ff90 /><rect x=936 fill=#eeff8e /><rect x=948 fill=#f4ff8c /><rect x=960 fill=#fbff8a /><rect x=972 fill=#fffc86 /><rect x=984 fill=#fff680 /><rect x=996 fill=#fff07b /><rect x=1008 fill=#ffea76 /><rect x=1020 fill=#ffe571 /><rect x=1032 fill=#ffe06c /><rect x=1044 fill=#ffdb67 /><rect x=1056 fill=#ffd662 /><rect x=1068 fill=#ffd25d /><rect x=1080 fill=#ffcd58 /><rect x=1092 fill=#ffc954 /><rect x=1104 fill=#ffc54f /><rect x=1116 fill=#ffc14a /><rect x=1128 fill=#ffbe45 /><rect x=1140 fill=#ffba40 /><rect x=1152 fill=#ffb63a /><rect x=1164 fill=#ffb334 /><rect x=1176 fill=#ffb02e /><rect x=1188 fill=#ffac27 /><rect x=1200 fill=#ffa91e /><rect x=1212 fill=#ffa612 /><rect x=1224 fill=#ffa400 /><rect x=1236 fill=#ffa200 /><rect x=1248 fill=#ffa000 /><rect x=1260 fill=#ff9e00 /><rect x=1272 fill=#ff9c00 /><rect x=1284 fill=#ff9a00 /><rect x=1296 fill=#ff9800 /><rect x=1308 fill=#ff9600 /><rect x=1320 fill=#ff9500 /><rect x=1332 fill=#ff9300 /><rect x=1344 fill=#ff9200 /><rect x=1356 fill=#ff9000 /><rect x=1368 fill=#ff8f00 /></g>
<g transform="translate(0,624)"><rect x=672 fill=#00ffbb /><rect x=684 fill=#00ffb7 /><rect x=696 fill=#20ffb4 /><rect x=708 fill=#40ffb3 /><rect x=720 fill=#54ffb2 /><rect x=732 fill=#63ffb1 /><rect x=744 fill=#71ffb0 /><rect x=756 fill=#7cffaf /><rect x=768 fill=#87ffae /><rect x=780 fill=#91ffad /><rect x=792 fill=#9bffac /><rect x=804 fill=#a4ffaa /><rect x=816 fill=#adffa9 /><rect x=828 fill=#b5ffa8 /><rect x=840 fill=#bdffa7 /><rect x=852 fill=#c5ffa5 /><rect x=864 fill=#cdffa4 /><rect x=876 fill=#d4ffa2 /><rect x=888 fill=#dcffa1 /><rect x=900 fill=#e3ff9f /><rect x=912 fill=#eaff9e /><rect x=924 fill=#f1ff9c /><rect x=936 fill=#f8ff9a /><rect x=948 fill=#ffff99 /><rect x=960 fill=#fff893 /><rect x=972 fill=#fff28d /><rect x=984 fill=#ffec88 /><rect x=996 fill=#ffe683 /><rect x=1008 fill=#ffe17e /><rect x=1020 fill=#ffdc79 /><rect x=1032 fill=#ffd774 /><rect x=1044 fill=#ffd270 /><rect x=1056 fill=#ffce6b /><rect x=1068 fill=#ffc966 /><rect x=1080 fill=#ffc562 /><rect x=1092 fill=#ffc15e /><rect x=1104 fill=#ffbd59 /><rect x=1116 fill=#ffb955 /><rect x=1128 fill=#ffb651 /><rect x=1140 fill=#ffb24c /><rect x=1152 fill=#ffaf48 /><rect x=1164 fill=#ffac43 /><rect x=1176 fill=#ffa83e /><rect x=1188 fill=#ffa539 /><rect x=1200 fill=#ffa234 /><rect x=1212 fill=#ff9f2e /><rect x=1224 fill=#ff9c27 /><rect x=1236 fill=#ff9920 /><rect x=1248 fill=#ff9715 /><rect x=1260 fill=#ff9400 /><rect x=1272 fill=#ff9200 /><rect x=1284 fill=#ff9100 /><rect x=1296 fill=#ff8f00 /><rect x=1308 fill=#ff8d00 /><rect x=1320 fill=#ff8c00 /><rect x=1332 fill=#ff8a00 /><rect x=1344 fill=#ff8900 /><rect x=1356 fill=#ff8800 /><rect x=1368 fill=#ff8600 /><rect x=1380 fill=#ff8500 /><rect x=1392 fill=#ff8400 /><rect x=1404 fill=#ff8200 /></g>
<g transform="translate(0,636)"><rect x=672 fill=#00ffc2 /><rect x=684 fill=#03ffbe /><rect x=696 fill=#3affbe /><rect x=708 fill=#50ffbd /><rect x=720 fill=#61ffbc /><rect x=732 fill=#6fffbb /><rect x=744 fill=#7cffba /><rect x=756 fill=#87ffb9 /><rect x=768 fill=#91ffb8 /><rect x=780 fill=#9bffb7 /><rect x=792 fill=#a5ffb6 /><rect x=804 fill=#aeffb5 /><rect x=816 fill=#b6ffb4 /><rect x=828 fill=#bfffb3 /><rect x=840 fill=#c7ffb2 /><rect x=852 fill=#cfffb1 /><rect x=864 fill=#d7ffb0 /><rect x=876 fill=#deffae /><rect x=888 fill=#e6ffad /><rect x=900 fill=#edffac /><rect x=912 fill=#f5ffaa /><rect x=924 fill=#fcffa9 /><rect x=936 fill=#fffba5 /><rect x=948 fill=#fff49f /><rect x=960 fill=#ffee99 /><rect x=972 fill=#ffe894 /><rect x=984 fill=#ffe28f /><rect x=996 fill=#ffdd8a /><rect x=1008 fill=#ffd885 /><rect x=1020 fill=#ffd380 /><rect x=1032 fill=#ffce7c /><rect x=1044 fill=#ffc977 /><rect x=1056 fill=#ffc573 /><rect x=1068 fill=#ffc16f /><rect x=1080 fill=#ffbd6a /><rect x=1092 fill=#ffb966 /><rect x=1104 fill=#ffb562 /><rect x=1116 fill=#ffb15e /><rect x=1128 fill=#ffae5a /><rect x=1140 fill=#ffab56 /><rect x=1152 fill=#ffa752 /><rect x=1164 fill=#ffa44e /><rect x=1176 fill=#ffa14a /><rect x=1188 fill=#ff9e46 /><rect x=1200 fill=#ff9b41 /><rect x=1212 fill=#ff983d /><rect x=1224 fill=#ff9538 /><rect x=1236 fill=#ff9233 /><rect x=1248 fill=#ff8f2e /><rect x=1260 fill=#ff8d28 /><rect x=1272 fill=#ff8a21 /><rect x=1284 fill=#ff8718 /><rect x=1296 fill=#ff8500 /><rect x=1308 fill=#ff8300 /><rect x=1320 fill=#ff8200 /><rect x=1332 fill=#ff8100 /><rect x=1344 fill=#ff7f00 /><rect x=1356 fill=#ff7e00 /><rect x=1368 fill=#ff7d00 /><rect x=1380 fill=#ff7c00 /><rect x=1392 fill=#ff7a00 /><rect x=1404 fill=#ff7900 /><rect x=1416 fill=#ff7800 /><rect x=1428 fill=#ff7700 /><rect x=1440 fill=#ff7600 /></g>
<g transform="translate(0,648)"><rect x=660 fill=#00ffcd /><rect x=672 fill=#00ffca /><rect x=684 fill=#33ffc8 /><rect x=696 fill=#4cffc8 /><rect x=708 fill=#5fffc7 /><rect x=720 fill=#6effc6 /><rect x=732 fill=#7bffc6 /><rect x=744 fill=#87ffc5 /><rect x=756 fill=#92ffc4 /><rect x=768 fill=#9cffc3 /><rect x=780 fill=#a6ffc2 /><rect x=792 fill=#afffc2 /><rect x=804 fill=#b8ffc1 /><rect x=816 fill=#c1ffc0 /><rect x=828 fill=#c9ffbf /><rect x=840 fill=#d1ffbe /><rect x=852 fill=#daffbd /><rect x=864 fill=#e1ffbc /><rect x=876 fill=#e9ffbb /><rect x=888 fill=#f1ffba /><rect x=900 fill=#f9ffb8 /><rect x=912 fill=#fffeb6 /><rect x=924 fill=#fff7b0 /><rect x=936 fill=#fff0aa /><rect x=948 fill=#ffeaa4 /><rect x=960 fill=#ffe49f /><rect x=972 fill=#ffde9a /><rect x=984 fill=#ffd895 /><rect x=996 fill=#ffd390 /><rect x=1008 fill=#ffce8b /><rect x=1020 fill=#ffc987 /><rect x=1032 fill=#ffc582 /><rect x=1044 fill=#ffc17e /><rect x=1056 fill=#ffbc7a /><rect x=1068 fill=#ffb876 /><rect x=1080 fill=#ffb472 /><rect x=1092 fill=#ffb16e /><rect x=1104 fill=#ffad6a /><rect x=1116 fill=#ffa966 /><rect x=1128 fill=#ffa662 /><rect x=1140 fill=#ffa35e /><rect x=1152 fill=#ff9f5b /><rect x=1164 fill=#ff9c57 /><rect x=1176 fill=#ff9953 /><rect x=1188 fill=#ff964f /><rect x=1200 fill=#ff934c /><rect x=1212 fill=#ff9048 /><rect x=1224 fill=#ff8d44 /><rect x=1236 fill=#ff8b40 /><rect x=1248 fill=#ff883c /><rect x=1260 fill=#ff8537 /><rect x=1272 fill=#ff8333 /><rect x=1284 fill=#ff802e /><rect x=1296 fill=#ff7e28 /><rect x=1308 fill=#ff7b22 /><rect x=1320 fill=#ff791a /><rect x=1332 fill=#ff760d /><rect x=1344 fill=#ff7500 /><rect x=1356 fill=#ff7300 /><rect x=1368 fill=#ff7200 /><rect x=1380 fill=#ff7100 /><rect x=1392 fill=#ff7000 /><rect x=1404 fill=#ff6f00 /><rect x=1416 fill=#ff6e00 /><rect x=1428 fill=#ff6d00 /><rect x=1440 fill=#ff6c00 /><rect x=1452 fill=#ff6b00 /><rect x=1464 fill=#ff6a00 /><rect x=1476 fill=#ff6900 /></g>
<g transform="translate(0,660)"><rect x=648 fill=#00ffd7 /><rect x=660 fill=#00ffd5 /><rect x=672 fill=#2affd3 /><rect x=684 fill=#48ffd3 /><rect x=696 fill=#5cffd2 /><rect x=708 fill=#6cffd2 /><rect x=720 fill=#7affd1 /><rect x=732 fill=#86ffd1 /><rect x=744 fill=#92ffd0 /><rect x=756 fill=#9dffcf /><rect x=768 fill=#a7ffcf /><rect x=780 fill=#b0ffce /><rect x=792 fill=#baffcd /><rect x=804 fill=#c3ffcc /><rect x=816 fill=#ccffcc /><rect x=828 fill=#d4ffcb /><rect x=840 fill=#ddffca /><rect x=852 fill=#e5ffc9 /><rect x=864 fill=#edffc8 /><rect x=876 fill=#f5ffc8 /><rect x=888 fill=#fdffc7 /><rect x=900 fill=#fff9c1 /><rect x=912 fill=#fff2bb /><rect x=924 fill=#ffebb5 /><rect x=936 fill=#ffe5af /><rect x=948 fill=#ffdfa9 /><rect x=960 fill=#ffd9a4 /><rect x=972 fill=#ffd49f /><rect x=984 fill=#ffcf9a /><rect x=996 fill=#ffca95 /><rect x=1008 fill=#ffc591 /><rect x=1020 fill=#ffc08c /><rect x=1032 fill=#ffbc88 /><rect x=1044 fill=#ffb884 /><rect x=1056 fill=#ffb480 /><rect x=1068 fill=#ffb07c /><rect x=1080 fill=#ffac78 /><rect x=1092 fill=#ffa874 /><rect x=1104 fill=#ffa571 /><rect x=1116 fill=#ffa16d /><rect x=1128 fill=#ff9e69 /><rect x=1140 fill=#ff9b66 /><rect x=1152 fill=#ff9762 /><rect x=1164 fill=#ff945f /><rect x=1176 fill=#ff915b /><rect x=1188 fill=#ff8e58 /><rect x=1200 fill=#ff8b54 /><rect x=1212 fill=#ff8951 /><rect x=1224 fill=#ff864d /><rect x=1236 fill=#ff834a /><rect x=1248 fill=#ff8046 /><rect x=1260 fill=#ff7e42 /><rect x=1272 fill=#ff7b3f /><rect x=1284 fill=#ff783b /><rect x=1296 fill=#ff7636 /><rect x=1308 fill=#ff7332 /><rect x=1320 fill=#ff712d /><rect x=1332 fill=#ff6e28 /><rect x=1344 fill=#ff6c22 /><rect x=1356 fill=#ff6a1b /><rect x=1368 fill=#ff6711 /><rect x=1380 fill=#ff6500 /><rect x=1392 fill=#ff6400 /><rect x=1404 fill=#ff6400 /><rect x=1416 fill=#ff6300 /><rect x=1428 fill=#ff6200 /><rect x=1440 fill=#ff6100 /><rect x=1452 fill=#ff6000 /><rect x=1464 fill=#ff5f00 /><rect x=1476 fill=#ff5e00 /><rect x=1488 fill=#ff5e00 /><rect x=1500 fill=#ff5d00 /><rect x=1512 fill=#ff5c00 /></g>
<g transform="translate(0,672)"><rect x=636 fill=#00ffe2 /><rect x=648 fill=#00ffe0 /><rect x=660 fill=#1cffdf /><rect x=672 fill=#43ffde /><rect x=684 fill=#59ffde /><rect x=696 fill=#6affdd /><rect x=708 fill=#79ffdd /><rect x=720 fill=#86ffdd /><rect x=732 fill=#92ffdc /><rect x=744 fill=#9dffdc /><rect x=756 fill=#a8ffdb /><rect x=768 fill=#b2ffdb /><rect x=780 fill=#bcffda /><rect x=792 fill=#c5ffd9 /><rect x=804 fill=#ceffd9 /><rect x=816 fill=#d7ffd8 /><rect x=828 fill=#e0ffd8 /><rect x=840 fill=#e8ffd7 /><rect x=852 fill=#f1ffd7 /><rect x=864 fill=#f9ffd6 /><rect x=876 fill=#fffdd3 /><rect x=888 fill=#fff5cc /><rect x=900 fill=#ffeec5 /><rect x=912 fill=#ffe7bf /><rect x=924 fill=#ffe0b9 /><rect x=936 fill=#ffdab3 /><rect x=948 fill=#ffd4ae /><rect x=960 fill=#ffcfa9 /><rect x=972 fill=#ffcaa4 /><rect x=984 fill=#ffc59f /><rect x=996 fill=#ffc09a /><rect x=1008 fill=#ffbb96 /><rect x=1020 fill=#ffb792 /><rect x=1032 fill=#ffb38d /><rect x=1044 fill=#ffaf89 /><rect x=1056 fill=#ffab85 /><rect x=1068 fill=#ffa782 /><rect x=1080 fill=#ffa37e /><rect x=1092 fill=#ffa07a /><rect x=1104 fill=#ff9c77 /><rect x=1116 fill=#ff9973 /><rect x=1128 fill=#ff9670 /><rect x=1140 fill=#ff926c /><rect x=1152 fill=#ff8f69 /><rect x=1164 fill=#ff8c66 /><rect x=1176 fill=#ff8962 /><rect x=1188 fill=#ff865f /><rect x=1200 fill=#ff835c /><rect x=1212 fill=#ff8159 /><rect x=1224 fill=#ff7e55 /><rect x=1236 fill=#ff7b52 /><rect x=1248 fill=#ff784f /><rect x=1260 fill=#ff764b /><rect x=1272 fill=#ff7348 /><rect x=1284 fill=#ff7045 /><rect x=1296 fill=#ff6e41 /><rect x=1308 fill=#ff6b3d /><rect x=1320 fill=#ff693a /><rect x=1332 fill=#ff6636 /><rect x=1344 fill=#ff6432 /><rect x=1356 fill=#ff612d /><rect x=1368 fill=#ff5f28 /><rect x=1380 fill=#ff5c23 /><rect x=1392 fill=#ff5a1c /><rect x=1404 fill=#ff5714 /><rect x=1416 fill=#ff5500 /><rect x=1428 fill=#ff5500 /><rect x=1440 fill=#ff5400 /><rect x=1452 fill=#ff5300 /><rect x=1464 fill=#ff5200 /><rect x=1476 fill=#ff5200 /><rect x=1488 fill=#ff5100 /><rect x=1500 fill=#ff5000 /><rect x=1512 fill=#ff5000 /><rect x=1524 fill=#ff4f00 /><rect x=1536 fill=#ff4e00 /><rect x=1548 fill=#ff4e00 /></g>
<g transform="translate(0,684)"><rect x=636 fill=#00ffec /><rect x=648 fill=#00ffea /><rect x=660 fill=#3cffea /><rect x=672 fill=#55ffea /><rect x=684 fill=#68ffe9 /><rect x=696 fill=#78ffe9 /><rect x=708 fill=#86ffe9 /><rect x=720 fill=#92ffe9 /><rect x=732 fill=#9effe8 /><rect x=744 fill=#a9ffe8 /><rect x=756 fill=#b4ffe8 /><rect x=768 fill=#beffe7 /><rect x=780 fill=#c8ffe7 /><rect x=792 fill=#d1ffe7 /><rect x=804 fill=#daffe6 /><rect x=816 fill=#e3ffe6 /><rect x=828 fill=#ecffe5 /><rect x=840 fill=#f5ffe5 /><rect x=852 fill=#feffe5 /><rect x=864 fill=#fff8de /><rect x=876 fill=#fff0d6 /><rect x=888 fill=#ffe9cf /><rect x=900 fill=#ffe2c9 /><rect x=912 fill=#ffdbc3 /><rect x=924 fill=#ffd5bd /><rect x=936 fill=#ffcfb7 /><rect x=948 fill=#ffcab2 /><rect x=960 fill=#ffc5ad /><rect x=972 fill=#ffc0a8 /><rect x=984 fill=#ffbba3 /><rect x=996 fill=#ffb69f /><rect x=1008 fill=#ffb29b /><rect x=1020 fill=#ffae96 /><rect x=1032 fill=#ffaa92 /><rect x=1044 fill=#ffa68e /><rect x=1056 fill=#ffa28b /><rect x=1068 fill=#ff9e87 /><rect x=1080 fill=#ff9b83 /><rect x=1092 fill=#ff9780 /><rect x=1104 fill=#ff947c /><rect x=1116 fill=#ff9079 /><rect x=1128 fill=#ff8d76 /><rect x=1140 fill=#ff8a72 /><rect x=1152 fill=#ff876f /><rect x=1164 fill=#ff846c /><rect x=1176 fill=#ff8169 /><rect x=1188 fill=#ff7e66 /><rect x=1200 fill=#ff7b62 /><rect x=1212 fill=#ff785f /><rect x=1224 fill=#ff755c /><rect x=1236 fill=#ff7359 /><rect x=1248 fill=#ff7056 /><rect x=1260 fill=#ff6d53 /><rect x=1272 fill=#ff6b50 /><rect x=1284 fill=#ff684d /><rect x=1296 fill=#ff654a /><rect x=1308 fill=#ff6346 /><rect x=1320 fill=#ff6043 /><rect x=1332 fill=#ff5d40 /><rect x=1344 fill=#ff5b3c /><rect x=1356 fill=#ff5839 /><rect x=1368 fill=#ff5635 /><rect x=1380 fill=#ff5331 /><rect x=1392 fill=#ff512d /><rect x=1404 fill=#ff4e29 /><rect x=1416 fill=#ff4b23 /><rect x=1428 fill=#ff491d /><rect x=1440 fill=#ff4616 /><rect x=1452 fill=#ff4307 /><rect x=1464 fill=#ff4200 /><rect x=1476 fill=#ff4200 /><rect x=1488 fill=#ff4100 /><rect x=1500 fill=#ff4100 /><rect x=1512 fill=#ff4000 /><rect x=1524 fill=#ff4000 /><rect x=1536 fill=#ff3f00 /><rect x=1548 fill=#ff3f00 /><rect x=1560 fill=#ff3e00 /><rect x=1572 fill=#ff3e00 /></g>
<g transform="translate(0,696)"><rect x=624 fill=#00fff7 /><rect x=636 fill=#00fff6 /><rect x=648 fill=#34fff6 /><rect x=660 fill=#51fff6 /><rect x=672 fill=#66fff6 /><rect x=684 fill=#76fff6 /><rect x=696 fill=#85fff6 /><rect x=708 fill=#92fff5 /><rect x=720 fill=#9ffff5 /><rect x=732 fill=#aafff5 /><rect x=744 fill=#b5fff5 /><rect x=756 fill=#c0fff5 /><rect x=768 fill=#cafff5 /><rect x=780 fill=#d4fff5 /><rect x=792 fill=#defff5 /><rect x=804 fill=#e7fff4 /><rect x=816 fill=#f1fff4 /><rect x=828 fill=#fafff4 /><rect x=840 fill=#fffbf0 /><rect x=852 fill=#fff3e8 /><rect x=864 fill=#ffebe0 /><rect x=876 fill=#ffe3d9 /><rect x=888 fill=#ffddd2 /><rect x=900 fill=#ffd6cc /><rect x=912 fill=#ffd0c6 /><rect x=924 fill=#ffcac0 /><rect x=936 fill=#ffc5bb /><rect x=948 fill=#ffbfb6 /><rect x=960 fill=#ffbab1 /><rect x=972 fill=#ffb6ac /><rect x=984 fill=#ffb1a7 /><rect x=996 fill=#ffada3 /><rect x=1008 fill=#ffa89f /><rect x=1020 fill=#ffa49b /><rect x=1032 fill=#ffa097 /><rect x=1044 fill=#ff9c93 /><rect x=1056 fill=#ff998f /><rect x=1068 fill=#ff958c /><rect x=1080 fill=#ff9188 /><rect x=1092 fill=#ff8e85 /><rect x=1104 fill=#ff8b81 /><rect x=1116 fill=#ff877e /><rect x=1128 fill=#ff847b /><rect x=1140 fill=#ff8178 /><rect x=1152 fill=#ff7e74 /><rect x=1164 fill=#ff7b71 /><rect x=1176 fill=#ff786e /><rect x=1188 fill=#ff756b /><rect x=1200 fill=#ff7268 /><rect x=1212 fill=#ff6f65 /><rect x=1224 fill=#ff6c62 /><rect x=1236 fill=#ff6a60 /><rect x=1248 fill=#ff675d /><rect x=1260 fill=#ff645a /><rect x=1272 fill=#ff6157 /><rect x=1284 fill=#ff5f54 /><rect x=1296 fill=#ff5c51 /><rect x=1308 fill=#ff594e /><rect x=1320 fill=#ff564b /><rect x=1332 fill=#ff5448 /><rect x=1344 fill=#ff5145 /><rect x=1356 fill=#ff4e42 /><rect x=1368 fill=#ff4c3f /><rect x=1380 fill=#ff493c /><rect x=1392 fill=#ff4638 /><rect x=1404 fill=#ff4335 /><rect x=1416 fill=#ff4031 /><rect x=1428 fill=#ff3d2d /><rect x=1440 fill=#ff3a29 /><rect x=1452 fill=#ff3724 /><rect x=1464 fill=#ff331e /><rect x=1476 fill=#ff3018 /><rect x=1488 fill=#ff2c0d /><rect x=1500 fill=#ff2a00 /><rect x=1512 fill=#ff2a00 /><rect x=1524 fill=#ff2900 /><rect x=1536 fill=#ff2900 /><rect x=1548 fill=#ff2900 /><rect x=1560 fill=#ff2800 /><rect x=1572 fill=#ff2800 /><rect x=1584 fill=#ff2800 /></g>
<g transform="translate(0,708)"><rect x=612 fill=#00fcff /><rect x=624 fill=#00fcff /><rect x=636 fill=#28fbff /><rect x=648 fill=#4bfbff /><rect x=660 fill=#61fbff /><rect x=672 fill=#73fbff /><rect x=684 fill=#83fbff /><rect x=696 fill=#90fbff /><rect x=708 fill=#9dfbff /><rect x=720 fill=#a9fbff /><rect x=732 fill=#b4fbff /><rect x=744 fill=#bffbff /><rect x=756 fill=#cafbff /><rect x=768 fill=#d4fbff /><rect x=780 fill=#defbff /><rect x=792 fill=#e7faff /><rect x=804 fill=#f1faff /><rect x=816 fill=#fafaff /><rect x=828 fill=#fff6fa /><rect x=840 fill=#ffedf2 /><rect x=852 fill=#ffe5ea /><rect x=864 fill=#ffdee3 /><rect x=876 fill=#ffd7dc /><rect x=888 fill=#ffd0d5 /><rect x=900 fill=#ffcacf /><rect x=912 fill=#ffc5c9 /><rect x=924 fill=#ffbfc3 /><rect x=936 fill=#ffbabe /><rect x=948 fill=#ffb5b9 /><rect x=960 fill=#ffb0b4 /><rect x=972 fill=#ffabb0 /><rect x=984 fill=#ffa7ab /><rect x=996 fill=#ffa3a7 /><rect x=1008 fill=#ff9ea3 /><rect x=1020 fill=#ff9a9f /><rect x=1032 fill=#ff979b /><rect x=1044 fill=#ff9397 /><rect x=1056 fill=#ff8f94 /><rect x=1068 fill=#ff8c90 /><rect x=1080 fill=#ff888d /><rect x=1092 fill=#ff8589 /><rect x=1104 fill=#ff8186 /><rect x=1116 fill=#ff7e83 /><rect x=1128 fill=#ff7b80 /><rect x=1140 fill=#ff787c /><rect x=1152 fill=#ff7579 /><rect x=1164 fill=#ff7276 /><rect x=1176 fill=#ff6f74 /><rect x=1188 fill=#ff6c71 /><rect x=1200 fill=#ff696e /><rect x=1212 fill=#ff666b /><rect x=1224 fill=#ff6368 /><rect x=1236 fill=#ff6065 /><rect x=1248 fill=#ff5d63 /><rect x=1260 fill=#ff5a60 /><rect x=1272 fill=#ff575d /><rect x=1284 fill=#ff545a /><rect x=1296 fill=#ff5258 /><rect x=1308 fill=#ff4f55 /><rect x=1320 fill=#ff4c52 /><rect x=1332 fill=#ff494f /><rect x=1344 fill=#ff464c /><rect x=1356 fill=#ff434a /><rect x=1368 fill=#ff4047 /><rect x=1380 fill=#ff3c44 /><rect x=1392 fill=#ff3941 /><rect x=1404 fill=#ff363e /><rect x=1416 fill=#ff323b /><rect x=1428 fill=#ff2e38 /><rect x=1440 fill=#ff2a34 /><rect x=1452 fill=#ff2531 /><rect x=1464 fill=#ff202d /><rect x=1476 fill=#ff1a29 /><rect x=1488 fill=#ff1124 /><rect x=1500 fill=#ff0021 /><rect x=1512 fill=#ff0021 /><rect x=1524 fill=#ff0020 /><rect x=1536 fill=#ff0020 /><rect x=1548 fill=#ff0020 /><rect x=1560 fill=#ff0020 /><rect x=1572 fill=#ff0020 /><rect x=1584 fill=#ff001f /></g>
<g transform="translate(0,720)"><rect x=612 fill=#00f0ff /><rect x=624 fill=#12efff /><rect x=636 fill=#42efff /><rect x=648 fill=#5aefff /><rect x=660 fill=#6cefff /><rect x=672 fill=#7beeff /><rect x=684 fill=#89eeff /><rect x=696 fill=#96eeff /><rect x=708 fill=#a2eeff /><rect x=720 fill=#adedff /><rect x=732 fill=#b7edff /><rect x=744 fill=#c2edff /><rect x=756 fill=#cbecff /><rect x=768 fill=#d5ecff /><rect x=780 fill=#deecff /><rect x=792 fill=#e8ebff /><rect x=804 fill=#f1ebff /><rect x=816 fill=#f9ebff /><rect x=828 fill=#ffe7fc /><rect x=840 fill=#ffdff3 /><rect x=852 fill=#ffd8ec /><rect x=864 fill=#ffd1e5 /><rect x=876 fill=#ffcbde /><rect x=888 fill=#ffc4d8 /><rect x=900 fill=#ffbfd2 /><rect x=912 fill=#ffb9cc /><rect x=924 fill=#ffb4c6 /><rect x=936 fill=#ffafc1 /><rect x=948 fill=#ffaabc /><rect x=960 fill=#ffa5b8 /><rect x=972 fill=#ffa1b3 /><rect x=984 fill=#ff9caf /><rect x=996 fill=#ff98ab /><rect x=1008 fill=#ff94a7 /><rect x=1020 fill=#ff90a3 /><rect x=1032 fill=#ff8d9f /><rect x=1044 fill=#ff899b /><rect x=1056 fill=#ff8598 /><rect x=1068 fill=#ff8294 /><rect x=1080 fill=#ff7e91 /><rect x=1092 fill=#ff7b8e /><rect x=1104 fill=#ff788a /><rect x=1116 fill=#ff7487 /><rect x=1128 fill=#ff7184 /><rect x=1140 fill=#ff6e81 /><rect x=1152 fill=#ff6b7e /><rect x=1164 fill=#ff687b /><rect x=1176 fill=#ff6478 /><rect x=1188 fill=#ff6175 /><rect x=1200 fill=#ff5e73 /><rect x=1212 fill=#ff5b70 /><rect x=1224 fill=#ff586d /><rect x=1236 fill=#ff556a /><rect x=1248 fill=#ff5268 /><rect x=1260 fill=#ff4f65 /><rect x=1272 fill=#ff4c63 /><rect x=1284 fill=#ff4960 /><rect x=1296 fill=#ff465d /><rect x=1308 fill=#ff425b /><rect x=1320 fill=#ff3f58 /><rect x=1332 fill=#ff3c56 /><rect x=1344 fill=#ff3853 /><rect x=1356 fill=#ff3450 /><rect x=1368 fill=#ff314e /><rect x=1380 fill=#ff2c4b /><rect x=1392 fill=#ff2848 /><rect x=1404 fill=#ff2346 /><rect x=1416 fill=#ff1d43 /><rect x=1428 fill=#ff1540 /><rect x=1440 fill=#ff003d /><rect x=1452 fill=#ff003d /><rect x=1464 fill=#ff003c /><rect x=1476 fill=#ff003c /><rect x=1488 fill=#ff003b /><rect x=1500 fill=#ff003b /><rect x=1512 fill=#ff003a /><rect x=1524 fill=#ff003a /><rect x=1536 fill=#ff003a /><rect x=1548 fill=#ff0039 /><rect x=1560 fill=#ff0039 /><rect x=1572 fill=#ff0038 /></g>
<g transform="translate(0,732)"><rect x=600 fill=#00e6ff /><rect x=612 fill=#00e4ff /><rect x=624 fill=#38e3ff /><rect x=636 fill=#52e3ff /><rect x=648 fill=#65e3ff /><rect x=660 fill=#74e2ff /><rect x=672 fill=#82e2ff /><rect x=684 fill=#8fe1ff /><rect x=696 fill=#9be1ff /><rect x=708 fill=#a6e0ff /><rect x=720 fill=#b0e0ff /><rect x=732 fill=#badfff /><rect x=744 fill=#c4dfff /><rect x=756 fill=#cddeff /><rect x=768 fill=#d6deff /><rect x=780 fill=#dfddff /><rect x=792 fill=#e8ddff /><rect x=804 fill=#f0dcff /><rect x=816 fill=#f9dcff /><rect x=828 fill=#ffd9fd /><rect x=840 fill=#ffd2f5 /><rect x=852 fill=#ffcbee /><rect x=864 fill=#ffc4e7 /><rect x=876 fill=#ffbee0 /><rect x=888 fill=#ffb8da /><rect x=900 fill=#ffb3d4 /><rect x=912 fill=#ffadcf /><rect x=924 fill=#ffa8c9 /><rect x=936 fill=#ffa3c4 /><rect x=948 fill=#ff9fbf /><rect x=960 fill=#ff9abb /><rect x=972 fill=#ff96b6 /><rect x=984 fill=#ff92b2 /><rect x=996 fill=#ff8eae /><rect x=1008 fill=#ff8aaa /><rect x=1020 fill=#ff86a6 /><rect x=1032 fill=#ff82a2 /><rect x=1044 fill=#ff7e9f /><rect x=1056 fill=#ff7b9b /><rect x=1068 fill=#ff7798 /><rect x=1080 fill=#ff7495 /><rect x=1092 fill=#ff7091 /><rect x=1104 fill=#ff6d8e /><rect x=1116 fill=#ff6a8b /><rect x=1128 fill=#ff6688 /><rect x=1140 fill=#ff6385 /><rect x=1152 fill=#ff6082 /><rect x=1164 fill=#ff5d7f /><rect x=1176 fill=#ff597d /><rect x=1188 fill=#ff567a /><rect x=1200 fill=#ff5377 /><rect x=1212 fill=#ff5075 /><rect x=1224 fill=#ff4c72 /><rect x=1236 fill=#ff496f /><rect x=1248 fill=#ff466d /><rect x=1260 fill=#ff426a /><rect x=1272 fill=#ff3f68 /><rect x=1284 fill=#ff3b65 /><rect x=1296 fill=#ff3763 /><rect x=1308 fill=#ff3360 /><rect x=1320 fill=#ff2f5e /><rect x=1332 fill=#ff2a5b /><rect x=1344 fill=#ff2559 /><rect x=1356 fill=#ff1f56 /><rect x=1368 fill=#ff1854 /><rect x=1380 fill=#ff0b51 /><rect x=1392 fill=#ff0050 /><rect x=1404 fill=#ff004f /><rect x=1416 fill=#ff004f /><rect x=1428 fill=#ff004e /><rect x=1440 fill=#ff004d /><rect x=1452 fill=#ff004d /><rect x=1464 fill=#ff004c /><rect x=1476 fill=#ff004c /><rect x=1488 fill=#ff004b /><rect x=1500 fill=#ff004b /><rect x=1512 fill=#ff004a /><rect x=1524 fill=#ff0049 /><rect x=1536 fill=#ff0049 /><rect x=1548 fill=#ff0048 /></g>
<g transform="translate(0,744)"><rect x=588 fill=#00dcff /><rect x=600 fill=#00d9ff /><rect x=612 fill=#2dd8ff /><rect x=624 fill=#4ad8ff /><rect x=636 fill=#5ed7ff /><rect x=648 fill=#6ed7ff /><rect x=660 fill=#7cd6ff /><rect x=672 fill=#88d5ff /><rect x=684 fill=#94d5ff /><rect x=696 fill=#9fd4ff /><rect x=708 fill=#a9d4ff /><rect x=720 fill=#b3d3ff /><rect x=732 fill=#bcd2ff /><rect x=744 fill=#c5d2ff /><rect x=756 fill=#ced1ff /><rect x=768 fill=#d7d0ff /><rect x=780 fill=#dfcfff /><rect x=792 fill=#e8cfff /><rect x=804 fill=#f0ceff /><rect x=816 fill=#f8cdff /><rect x=828 fill=#ffcbfe /><rect x=840 fill=#ffc4f6 /><rect x=852 fill=#ffbeef /><rect x=864 fill=#ffb7e8 /><rect x=876 fill=#ffb2e2 /><rect x=888 fill=#ffacdc /><rect x=900 fill=#ffa7d6 /><rect x=912 fill=#ffa1d1 /><rect x=924 fill=#ff9dcc /><rect x=936 fill=#ff98c7 /><rect x=948 fill=#ff93c2 /><rect x=960 fill=#ff8fbe /><rect x=972 fill=#ff8bb9 /><rect x=984 fill=#ff86b5 /><rect x=996 fill=#ff82b1 /><rect x=1008 fill=#ff7fad /><rect x=1020 fill=#ff7baa /><rect x=1032 fill=#ff77a6 /><rect x=1044 fill=#ff73a2 /><rect x=1056 fill=#ff709f /><rect x=1068 fill=#ff6c9c /><rect x=1080 fill=#ff6898 /><rect x=1092 fill=#ff6595 /><rect x=1104 fill=#ff6292 /><rect x=1116 fill=#ff5e8f /><rect x=1128 fill=#ff5b8c /><rect x=1140 fill=#ff5789 /><rect x=1152 fill=#ff5486 /><rect x=1164 fill=#ff5084 /><rect x=1176 fill=#ff4d81 /><rect x=1188 fill=#ff497e /><rect x=1200 fill=#ff467b /><rect x=1212 fill=#ff4279 /><rect x=1224 fill=#ff3e76 /><rect x=1236 fill=#ff3a74 /><rect x=1248 fill=#ff3671 /><rect x=1260 fill=#ff326f /><rect x=1272 fill=#ff2d6c /><rect x=1284 fill=#ff286a /><rect x=1296 fill=#ff2267 /><rect x=1308 fill=#ff1b65 /><rect x=1320 fill=#ff1063 /><rect x=1332 fill=#ff0061 /><rect x=1344 fill=#ff0060 /><rect x=1356 fill=#ff005f /><rect x=1368 fill=#ff005e /><rect x=1380 fill=#ff005d /><rect x=1392 fill=#ff005d /><rect x=1404 fill=#ff005c /><rect x=1416 fill=#ff005b /><rect x=1428 fill=#ff005a /><rect x=1440 fill=#ff005a /><rect x=1452 fill=#ff0059 /><rect x=1464 fill=#ff0058 /><rect x=1476 fill=#ff0058 /><rect x=1488 fill=#ff0057 /></g>
<g transform="translate(0,756)"><rect x=588 fill=#00d0ff /><rect x=600 fill=#1fcdff /><rect x=612 fill=#42cdff /><rect x=624 fill=#57ccff /><rect x=636 fill=#67cbff /><rect x=648 fill=#76cbff /><rect x=660 fill=#82caff /><rect x=672 fill=#8ec9ff /><rect x=684 fill=#98c8ff /><rect x=696 fill=#a3c8ff /><rect x=708 fill=#acc7ff /><rect x=720 fill=#b5c6ff /><rect x=732 fill=#bec5ff /><rect x=744 fill=#c7c4ff /><rect x=756 fill=#cfc3ff /><rect x=768 fill=#d8c2ff /><rect x=780 fill=#e0c1ff /><rect x=792 fill=#e8c0ff /><rect x=804 fill=#f0bfff /><rect x=816 fill=#f7beff /><rect x=828 fill=#ffbdff /><rect x=840 fill=#ffb6f8 /><rect x=852 fill=#ffb0f1 /><rect x=864 fill=#ffaaea /><rect x=876 fill=#ffa5e4 /><rect x=888 fill=#ff9fde /><rect x=900 fill=#ff9ad9 /><rect x=912 fill=#ff95d3 /><rect x=924 fill=#ff90ce /><rect x=936 fill=#ff8cc9 /><rect x=948 fill=#ff87c5 /><rect x=960 fill=#ff83c0 /><rect x=972 fill=#ff7fbc /><rect x=984 fill=#ff7bb8 /><rect x=996 fill=#ff77b4 /><rect x=1008 fill=#ff73b0 /><rect x=1020 fill=#ff6fad /><rect x=1032 fill=#ff6ba9 /><rect x=1044 fill=#ff67a6 /><rect x=1056 fill=#ff63a2 /><rect x=1068 fill=#ff609f /><rect x=1080 fill=#ff5c9c /><rect x=1092 fill=#ff5899 /><rect x=1104 fill=#ff5596 /><rect x=1116 fill=#ff5193 /><rect x=1128 fill=#ff4d90 /><rect x=1140 fill=#ff498d /><rect x=1152 fill=#ff468a /><rect x=1164 fill=#ff4287 /><rect x=1176 fill=#ff3d85 /><rect x=1188 fill=#ff3982 /><rect x=1200 fill=#ff357f /><rect x=1212 fill=#ff307d /><rect x=1224 fill=#ff2b7a /><rect x=1236 fill=#ff2578 /><rect x=1248 fill=#ff1e75 /><rect x=1260 fill=#ff1573 /><rect x=1272 fill=#ff0071 /><rect x=1284 fill=#ff0070 /><rect x=1296 fill=#ff006f /><rect x=1308 fill=#ff006e /><rect x=1320 fill=#ff006d /><rect x=1332 fill=#ff006c /><rect x=1344 fill=#ff006b /><rect x=1356 fill=#ff006a /><rect x=1368 fill=#ff0069 /><rect x=1380 fill=#ff0068 /><rect x=1392 fill=#ff0067 /><rect x=1404 fill=#ff0066 /><rect x=1416 fill=#ff0065 /><rect x=1428 fill=#ff0065 /></g>
<g transform="translate(0,768)"><rect x=576 fill=#00c6ff /><rect x=588 fill=#00c3ff /><rect x=600 fill=#3ac2ff /><rect x=612 fill=#50c1ff /><rect x=624 fill=#61c0ff /><rect x=636 fill=#70c0ff /><rect x=648 fill=#7cbfff /><rect x=660 fill=#88beff /><rect x=672 fill=#92bdff /><rect x=684 fill=#9cbcff /><rect x=696 fill=#a6bbff /><rect x=708 fill=#afbaff /><rect x=720 fill=#b8b9ff /><rect x=732 fill=#c0b8ff /><rect x=744 fill=#c9b7ff /><rect x=756 fill=#d1b6ff /><rect x=768 fill=#d9b5ff /><rect x=780 fill=#e0b3ff /><rect x=792 fill=#e8b2ff /><rect x=804 fill=#efb1ff /><rect x=816 fill=#f7afff /><rect x=828 fill=#feaeff /><rect x=840 fill=#ffa8f9 /><rect x=852 fill=#ffa2f2 /><rect x=864 fill=#ff9dec /><rect x=876 fill=#ff97e6 /><rect x=888 fill=#ff92e0 /><rect x=900 fill=#ff8ddb /><rect x=912 fill=#ff88d5 /><rect x=924 fill=#ff83d1 /><rect x=936 fill=#ff7fcc /><rect x=948 fill=#ff7bc7 /><rect x=960 fill=#ff76c3 /><rect x=972 fill=#ff72bf /><rect x=984 fill=#ff6ebb /><rect x=996 fill=#ff6ab7 /><rect x=1008 fill=#ff66b3 /><rect x=1020 fill=#ff62b0 /><rect x=1032 fill=#ff5eac /><rect x=1044 fill=#ff5aa9 /><rect x=1056 fill=#ff56a5 /><rect x=1068 fill=#ff52a2 /><rect x=1080 fill=#ff4e9f /><rect x=1092 fill=#ff4a9c /><rect x=1104 fill=#ff4599 /><rect x=1116 fill=#ff4196 /><rect x=1128 fill=#ff3d93 /><rect x=1140 fill=#ff3890 /><rect x=1152 fill=#ff338e /><rect x=1164 fill=#ff2e8b /><rect x=1176 fill=#ff2888 /><rect x=1188 fill=#ff2186 /><rect x=1200 fill=#ff1883 /><rect x=1212 fill=#ff0881 /><rect x=1224 fill=#ff007f /><rect x=1236 fill=#ff007e /><rect x=1248 fill=#ff007c /><rect x=1260 fill=#ff007b /><rect x=1272 fill=#ff007a /><rect x=1284 fill=#ff0079 /><rect x=1296 fill=#ff0078 /><rect x=1308 fill=#ff0077 /><rect x=1320 fill=#ff0076 /><rect x=1332 fill=#ff0074 /><rect x=1344 fill=#ff0073 /><rect x=1356 fill=#ff0072 /><rect x=1368 fill=#ff0071 /><rect x=1380 fill=#ff0071 /></g>
<g transform="translate(0,780)"><rect x=564 fill=#00beff /><rect x=576 fill=#00baff /><rect x=588 fill=#30b8ff /><rect x=600 fill=#49b7ff /><rect x=612 fill=#5bb6ff /><rect x=624 fill=#6ab5ff /><rect x=636 fill=#76b4ff /><rect x=648 fill=#82b3ff /><rect x=660 fill=#8db2ff /><rect x=672 fill=#97b1ff /><rect x=684 fill=#a0b0ff /><rect x=696 fill=#a9aeff /><rect x=708 fill=#b2adff /><rect x=720 fill=#baacff /><rect x=732 fill=#c2abff /><rect x=744 fill=#caa9ff /><rect x=756 fill=#d2a8ff /><rect x=768 fill=#d9a7ff /><rect x=780 fill=#e1a5ff /><rect x=792 fill=#e8a4ff /><rect x=804 fill=#efa2ff /><rect x=816 fill=#f6a0ff /><rect x=828 fill=#fd9fff /><rect x=840 fill=#ff9afa /><rect x=852 fill=#ff94f3 /><rect x=864 fill=#ff8fed /><rect x=876 fill=#ff89e7 /><rect x=888 fill=#ff84e2 /><rect x=900 fill=#ff7fdc /><rect x=912 fill=#ff7ad7 /><rect x=924 fill=#ff76d3 /><rect x=936 fill=#ff71ce /><rect x=948 fill=#ff6dca /><rect x=960 fill=#ff68c5 /><rect x=972 fill=#ff64c1 /><rect x=984 fill=#ff60bd /><rect x=996 fill=#ff5bba /><rect x=1008 fill=#ff57b6 /><rect x=1020 fill=#ff53b2 /><rect x=1032 fill=#ff4eaf /><rect x=1044 fill=#ff4aab /><rect x=1056 fill=#ff45a8 /><rect x=1068 fill=#ff41a5 /><rect x=1080 fill=#ff3ca2 /><rect x=1092 fill=#ff379f /><rect x=1104 fill=#ff319c /><rect x=1116 fill=#ff2b99 /><rect x=1128 fill=#ff2596 /><rect x=1140 fill=#ff1c94 /><rect x=1152 fill=#ff0f91 /><rect x=1164 fill=#ff008f /><rect x=1176 fill=#ff008d /><rect x=1188 fill=#ff008c /><rect x=1200 fill=#ff008a /><rect x=1212 fill=#ff0089 /><rect x=1224 fill=#ff0087 /><rect x=1236 fill=#ff0086 /><rect x=1248 fill=#ff0084 /><rect x=1260 fill=#ff0083 /><rect x=1272 fill=#ff0082 /><rect x=1284 fill=#ff0081 /><rect x=1296 fill=#ff007f /><rect x=1308 fill=#ff007e /><rect x=1320 fill=#ff007d /></g>
<g transform="translate(0,792)"><rect x=552 fill=#00b5ff /><rect x=564 fill=#00b1ff /><rect x=576 fill=#25aeff /><rect x=588 fill=#42adff /><rect x=600 fill=#55acff /><rect x=612 fill=#64aaff /><rect x=624 fill=#71a9ff /><rect x=636 fill=#7ca8ff /><rect x=648 fill=#87a7ff /><rect x=660 fill=#91a6ff /><rect x=672 fill=#9aa4ff /><rect x=684 fill=#a3a3ff /><rect x=696 fill=#aca2ff /><rect x=708 fill=#b4a0ff /><rect x=720 fill=#bc9fff /><rect x=732 fill=#c49dff /><rect x=744 fill=#cb9cff /><rect x=756 fill=#d39aff /><rect x=768 fill=#da98ff /><rect x=780 fill=#e197ff /><rect x=792 fill=#e895ff /><rect x=804 fill=#ef93ff /><rect x=816 fill=#f691ff /><rect x=828 fill=#fd8fff /><rect x=840 fill=#ff8bfb /><rect x=852 fill=#ff85f4 /><rect x=864 fill=#ff80ee /><rect x=876 fill=#ff7ae9 /><rect x=888 fill=#ff75e3 /><rect x=900 fill=#ff70de /><rect x=912 fill=#ff6bd9 /><rect x=924 fill=#ff67d5 /><rect x=936 fill=#ff62d0 /><rect x=948 fill=#ff5dcc /><rect x=960 fill=#ff58c8 /><rect x=972 fill=#ff54c4 /><rect x=984 fill=#ff4fc0 /><rect x=996 fill=#ff4abc /><rect x=1008 fill=#ff45b8 /><rect x=1020 fill=#ff40b5 /><rect x=1032 fill=#ff3bb1 /><rect x=1044 fill=#ff35ae /><rect x=1056 fill=#ff2fab /><rect x=1068 fill=#ff28a8 /><rect x=1080 fill=#ff20a5 /><rect x=1092 fill=#ff15a2 /><rect x=1104 fill=#ff009f /><rect x=1116 fill=#ff009d /><rect x=1128 fill=#ff009b /><rect x=1140 fill=#ff0099 /><rect x=1152 fill=#ff0098 /><rect x=1164 fill=#ff0096 /><rect x=1176 fill=#ff0094 /><rect x=1188 fill=#ff0093 /><rect x=1200 fill=#ff0091 /><rect x=1212 fill=#ff0090 /><rect x=1224 fill=#ff008e /><rect x=1236 fill=#ff008d /><rect x=1248 fill=#ff008b /><rect x=1260 fill=#ff008a /><rect x=1272 fill=#ff0089 /></g>
<g transform="translate(0,804)"><rect x=552 fill=#00a8ff /><rect x=564 fill=#15a4ff /><rect x=576 fill=#3ba3ff /><rect x=588 fill=#4fa1ff /><rect x=600 fill=#5ea0ff /><rect x=612 fill=#6c9fff /><rect x=624 fill=#779dff /><rect x=636 fill=#829cff /><rect x=648 fill=#8c9bff /><rect x=660 fill=#9599ff /><rect x=672 fill=#9e98ff /><rect x=684 fill=#a696ff /><rect x=696 fill=#ae95ff /><rect x=708 fill=#b693ff /><rect x=720 fill=#be91ff /><rect x=732 fill=#c58fff /><rect x=744 fill=#cc8eff /><rect x=756 fill=#d38cff /><rect x=768 fill=#da8aff /><rect x=780 fill=#e188ff /><rect x=792 fill=#e885ff /><rect x=804 fill=#ef83ff /><rect x=816 fill=#f581ff /><rect x=828 fill=#fc7eff /><rect x=840 fill=#ff7afc /><rect x=852 fill=#ff75f6 /><rect x=864 fill=#ff6ff0 /><rect x=876 fill=#ff6aea /><rect x=888 fill=#ff64e5 /><rect x=900 fill=#ff5fe0 /><rect x=912 fill=#ff5adb /><rect x=924 fill=#ff55d6 /><rect x=936 fill=#ff50d2 /><rect x=948 fill=#ff4ace /><rect x=960 fill=#ff45ca /><rect x=972 fill=#ff3fc6 /><rect x=984 fill=#ff3ac2 /><rect x=996 fill=#ff33be /><rect x=1008 fill=#ff2cbb /><rect x=1020 fill=#ff24b7 /><rect x=1032 fill=#ff1ab4 /><rect x=1044 fill=#ff00b1 /><rect x=1056 fill=#ff00ae /><rect x=1068 fill=#ff00ac /><rect x=1080 fill=#ff00aa /><rect x=1092 fill=#ff00a7 /><rect x=1104 fill=#ff00a5 /><rect x=1116 fill=#ff00a3 /><rect x=1128 fill=#ff00a1 /><rect x=1140 fill=#ff00a0 /><rect x=1152 fill=#ff009e /><rect x=1164 fill=#ff009c /><rect x=1176 fill=#ff009a /><rect x=1188 fill=#ff0099 /><rect x=1200 fill=#ff0097 /><rect x=1212 fill=#ff0096 /></g>
<g transform="translate(0,816)"><rect x=540 fill=#00a0ff /><rect x=552 fill=#009bff /><rect x=564 fill=#3398ff /><rect x=576 fill=#4997ff /><rect x=588 fill=#5996ff /><rect x=600 fill=#6694ff /><rect x=612 fill=#7293ff /><rect x=624 fill=#7d91ff /><rect x=636 fill=#8790ff /><rect x=648 fill=#908eff /><rect x=660 fill=#998cff /><rect x=672 fill=#a18bff /><rect x=684 fill=#a989ff /><rect x=696 fill=#b187ff /><rect x=708 fill=#b885ff /><rect x=720 fill=#bf83ff /><rect x=732 fill=#c781ff /><rect x=744 fill=#cd7fff /><rect x=756 fill=#d47cff /><rect x=768 fill=#db7aff /><rect x=780 fill=#e277ff /><rect x=792 fill=#e875ff /><rect x=804 fill=#ef72ff /><rect x=816 fill=#f56fff /><rect x=828 fill=#fb6cff /><rect x=840 fill=#ff68fd /><rect x=852 fill=#ff62f7 /><rect x=864 fill=#ff5cf1 /><rect x=876 fill=#ff56eb /><rect x=888 fill=#ff51e6 /><rect x=900 fill=#ff4be1 /><rect x=912 fill=#ff45dd /><rect x=924 fill=#ff3fd8 /><rect x=936 fill=#ff38d4 /><rect x=948 fill=#ff31d0 /><rect x=960 fill=#ff29cc /><rect x=972 fill=#ff1ec8 /><rect x=984 fill=#ff0dc4 /><rect x=996 fill=#ff00c1 /><rect x=1008 fill=#ff00be /><rect x=1020 fill=#ff00bb /><rect x=1032 fill=#ff00b9 /><rect x=1044 fill=#ff00b6 /><rect x=1056 fill=#ff00b4 /><rect x=1068 fill=#ff00b1 /><rect x=1080 fill=#ff00af /><rect x=1092 fill=#ff00ad /><rect x=1104 fill=#ff00ab /><rect x=1116 fill=#ff00a9 /><rect x=1128 fill=#ff00a7 /><rect x=1140 fill=#ff00a5 /><rect x=1152 fill=#ff00a3 /><rect x=1164 fill=#ff00a2 /></g>
<g transform="translate(0,828)"><rect x=528 fill=#0098ff /><rect x=540 fill=#0092ff /><rect x=552 fill=#298eff /><rect x=564 fill=#428dff /><rect x=576 fill=#538bff /><rect x=588 fill=#618aff /><rect x=600 fill=#6d88ff /><rect x=612 fill=#7886ff /><rect x=624 fill=#8285ff /><rect x=636 fill=#8b83ff /><rect x=648 fill=#9481ff /><rect x=660 fill=#9c7fff /><rect x=672 fill=#a47dff /><rect x=684 fill=#ab7bff /><rect x=696 fill=#b378ff /><rect x=708 fill=#ba76ff /><rect x=720 fill=#c174ff /><rect x=732 fill=#c871ff /><rect x=744 fill=#ce6eff /><rect x=756 fill=#d56cff /><rect x=768 fill=#dc69ff /><rect x=780 fill=#e266ff /><rect x=792 fill=#e862ff /><rect x=804 fill=#ee5fff /><rect x=816 fill=#f55bff /><rect x=828 fill=#fb57ff /><rect x=840 fill=#ff52fd /><rect x=852 fill=#ff4bf8 /><rect x=864 fill=#ff45f2 /><rect x=876 fill=#ff3eed /><rect x=888 fill=#ff36e8 /><rect x=900 fill=#ff2ee3 /><rect x=912 fill=#ff24de /><rect x=924 fill=#ff15da /><rect x=936 fill=#ff00d6 /><rect x=948 fill=#ff00d2 /><rect x=960 fill=#ff00cf /><rect x=972 fill=#ff00cb /><rect x=984 fill=#ff00c8 /><rect x=996 fill=#ff00c5 /><rect x=1008 fill=#ff00c2 /><rect x=1020 fill=#ff00c0 /><rect x=1032 fill=#ff00bd /><rect x=1044 fill=#ff00bb /><rect x=1056 fill=#ff00b8 /><rect x=1068 fill=#ff00b6 /><rect x=1080 fill=#ff00b4 /><rect x=1092 fill=#ff00b2 /><rect x=1104 fill=#ff00b0 /></g>
<g transform="translate(0,840)"><rect x=528 fill=#008aff /><rect x=540 fill=#1e84ff /><rect x=552 fill=#3c83ff /><rect x=564 fill=#4e81ff /><rect x=576 fill=#5c7fff /><rect x=588 fill=#687dff /><rect x=600 fill=#737bff /><rect x=612 fill=#7d79ff /><rect x=624 fill=#8677ff /><rect x=636 fill=#8f75ff /><rect x=648 fill=#9773ff /><rect x=660 fill=#9f70ff /><rect x=672 fill=#a66eff /><rect x=684 fill=#ae6bff /><rect x=696 fill=#b569ff /><rect x=708 fill=#bc66ff /><rect x=720 fill=#c263ff /><rect x=732 fill=#c960ff /><rect x=744 fill=#cf5cff /><rect x=756 fill=#d659ff /><rect x=768 fill=#dc55ff /><rect x=780 fill=#e251ff /><rect x=792 fill=#e84cff /><rect x=804 fill=#ee47ff /><rect x=816 fill=#f441ff /><rect x=828 fill=#fa3bff /><rect x=840 fill=#ff33fe /><rect x=852 fill=#ff29f8 /><rect x=864 fill=#ff1cf3 /><rect x=876 fill=#ff00ee /><rect x=888 fill=#ff00e9 /><rect x=900 fill=#ff00e5 /><rect x=912 fill=#ff00e1 /><rect x=924 fill=#ff00dd /><rect x=936 fill=#ff00d9 /><rect x=948 fill=#ff00d6 /><rect x=960 fill=#ff00d2 /><rect x=972 fill=#ff00cf /><rect x=984 fill=#ff00cc /><rect x=996 fill=#ff00c9 /><rect x=1008 fill=#ff00c6 /><rect x=1020 fill=#ff00c4 /><rect x=1032 fill=#ff00c1 /><rect x=1044 fill=#ff00bf /></g>
<g transform="translate(0,852)"><rect x=516 fill=#0082ff /><rect x=528 fill=#067aff /><rect x=540 fill=#3478ff /><rect x=552 fill=#4876ff /><rect x=564 fill=#5774ff /><rect x=576 fill=#6372ff /><rect x=588 fill=#6e70ff /><rect x=600 fill=#786dff /><rect x=612 fill=#826bff /><rect x=624 fill=#8a69ff /><rect x=636 fill=#9266ff /><rect x=648 fill=#9a63ff /><rect x=660 fill=#a260ff /><rect x=672 fill=#a95dff /><rect x=684 fill=#b05aff /><rect x=696 fill=#b757ff /><rect x=708 fill=#bd53ff /><rect x=720 fill=#c44fff /><rect x=732 fill=#ca4bff /><rect x=744 fill=#d046ff /><rect x=756 fill=#d641ff /><rect x=768 fill=#dc3bff /><rect x=780 fill=#e234ff /><rect x=792 fill=#e82bff /><rect x=804 fill=#ee20ff /><rect x=816 fill=#f407ff /><rect x=828 fill=#fa00ff /><rect x=840 fill=#ff00ff /><rect x=852 fill=#ff00f9 /><rect x=864 fill=#ff00f4 /><rect x=876 fill=#ff00f0 /><rect x=888 fill=#ff00eb /><rect x=900 fill=#ff00e7 /><rect x=912 fill=#ff00e3 /><rect x=924 fill=#ff00e0 /><rect x=936 fill=#ff00dc /><rect x=948 fill=#ff00d9 /><rect x=960 fill=#ff00d5 /><rect x=972 fill=#ff00d2 /><rect x=984 fill=#ff00cf /><rect x=996 fill=#ff00cd /></g>
<g transform="translate(0,864)"><rect x=504 fill=#007aff /><rect x=516 fill=#0071ff /><rect x=528 fill=#2d6dff /><rect x=540 fill=#426bff /><rect x=552 fill=#5269ff /><rect x=564 fill=#5f66ff /><rect x=576 fill=#6a64ff /><rect x=588 fill=#7461ff /><rect x=600 fill=#7d5eff /><rect x=612 fill=#865bff /><rect x=624 fill=#8e58ff /><rect x=636 fill=#9655ff /><rect x=648 fill=#9d51ff /><rect x=660 fill=#a44eff /><rect x=672 fill=#ab49ff /><rect x=684 fill=#b245ff /><rect x=696 fill=#b840ff /><rect x=708 fill=#bf3aff /><rect x=720 fill=#c534ff /><rect x=732 fill=#cb2cff /><rect x=744 fill=#d123ff /><rect x=756 fill=#d712ff /><rect x=768 fill=#dd00ff /><rect x=780 fill=#e300ff /><rect x=792 fill=#e900ff /><rect x=804 fill=#ef00ff /><rect x=816 fill=#f400ff /><rect x=828 fill=#f900ff /><rect x=840 fill=#ff00ff /><rect x=852 fill=#ff00fa /><rect x=864 fill=#ff00f6 /><rect x=876 fill=#ff00f1 /><rect x=888 fill=#ff00ed /><rect x=900 fill=#ff00e9 /><rect x=912 fill=#ff00e5 /><rect x=924 fill=#ff00e2 /><rect x=936 fill=#ff00de /></g>
<g transform="translate(0,876)"><rect x=504 fill=#0069ff /><rect x=516 fill=#2362ff /><rect x=528 fill=#3c5fff /><rect x=540 fill=#4d5cff /><rect x=552 fill=#5a59ff /><rect x=564 fill=#6556ff /><rect x=576 fill=#7053ff /><rect x=588 fill=#7950ff /><rect x=600 fill=#824cff /><rect x=612 fill=#8a48ff /><rect x=624 fill=#9144ff /><rect x=636 fill=#993fff /><rect x=648 fill=#a03aff /><rect x=660 fill=#a734ff /><rect x=672 fill=#ad2dff /><rect x=684 fill=#b424ff /><rect x=696 fill=#ba17ff /><rect x=708 fill=#c000ff /><rect x=720 fill=#c700ff /><rect x=732 fill=#cd00ff /><rect x=744 fill=#d300ff /><rect x=756 fill=#d900ff /><rect x=768 fill=#df00ff /><rect x=780 fill=#e500ff /><rect x=792 fill=#ea00ff /><rect x=804 fill=#ef00ff /><rect x=816 fill=#f400ff /><rect x=828 fill=#f900ff /><rect x=840 fill=#fe00ff /><rect x=852 fill=#ff00fb /><rect x=864 fill=#ff00f7 /><rect x=876 fill=#ff00f3 /><rect x=888 fill=#ff00ef /></g>
<g transform="translate(0,888)"><rect x=492 fill=#0060ff /><rect x=504 fill=#1755ff /><rect x=516 fill=#3652ff /><rect x=528 fill=#484fff /><rect x=540 fill=#554bff /><rect x=552 fill=#6147ff /><rect x=564 fill=#6b43ff /><rect x=576 fill=#753fff /><rect x=588 fill=#7d3aff /><rect x=600 fill=#8634ff /><rect x=612 fill=#8d2eff /><rect x=624 fill=#9526ff /><rect x=636 fill=#9c1bff /><rect x=648 fill=#a200ff /><rect x=660 fill=#aa00ff /><rect x=672 fill=#b100ff /><rect x=684 fill=#b800ff /><rect x=696 fill=#be00ff /><rect x=708 fill=#c500ff /><rect x=720 fill=#cb00ff /><rect x=732 fill=#d000ff /><rect x=744 fill=#d600ff /><rect x=756 fill=#db00ff /><rect x=768 fill=#e100ff /><rect x=780 fill=#e600ff /><rect x=792 fill=#eb00ff /><rect x=804 fill=#f000ff /><rect x=816 fill=#f400ff /><rect x=828 fill=#f900ff /></g>
<g transform="translate(0,900)"><rect x=480 fill=#0056ff /><rect x=492 fill=#0048ff /><rect x=504 fill=#2f43ff /><rect x=516 fill=#423eff /><rect x=528 fill=#513aff /><rect x=540 fill=#5d35ff /><rect x=552 fill=#672fff /><rect x=564 fill=#7127ff /><rect x=576 fill=#791eff /><rect x=588 fill=#810cff /><rect x=600 fill=#8a00ff /><rect x=612 fill=#9300ff /><rect x=624 fill=#9b00ff /><rect x=636 fill=#a200ff /><rect x=648 fill=#a900ff /><rect x=660 fill=#b000ff /><rect x=672 fill=#b600ff /><rect x=684 fill=#bc00ff /><rect x=696 fill=#c200ff /><rect x=708 fill=#c800ff /><rect x=720 fill=#ce00ff /><rect x=732 fill=#d300ff /><rect x=744 fill=#d800ff /><rect x=756 fill=#dd00ff /></g>
<g transform="translate(0,912)"><rect x=480 fill=#003bff /><rect x=492 fill=#272fff /><rect x=504 fill=#3d28ff /><rect x=516 fill=#4c20ff /><rect x=528 fill=#5813ff /><rect x=540 fill=#6400ff /><rect x=552 fill=#7000ff /><rect x=564 fill=#7a00ff /><rect x=576 fill=#8300ff /><rect x=588 fill=#8b00ff /><rect x=600 fill=#9300ff /><rect x=612 fill=#9b00ff /><rect x=624 fill=#a200ff /><rect x=636 fill=#a800ff /><rect x=648 fill=#af00ff /><rect x=660 fill=#b500ff /><rect x=672 fill=#bb00ff /><rect x=684 fill=#c000ff /></g>
<g transform="translate(0,924)"><rect x=468 fill=#002cff /><rect x=480 fill=#2000ff /><rect x=492 fill=#3d00ff /><rect x=504 fill=#4f00ff /><rect x=516 fill=#5d00ff /><rect x=528 fill=#6800ff /><rect x=540 fill=#7300ff /><rect x=552 fill=#7c00ff /><rect x=564 fill=#8400ff /><rect x=576 fill=#8c00ff /><rect x=588 fill=#9400ff /><rect x=600 fill=#9b00ff /><rect x=612 fill=#a100ff /><rect x=624 fill=#a800ff /></g>
<g transform="translate(0,936)"><rect x=480 fill=#4600ff /><rect x=492 fill=#5500ff /><rect x=504 fill=#6100ff /><rect x=516 fill=#6c00ff /><rect x=528 fill=#7500ff /><rect x=540 fill=#7e00ff /><rect x=552 fill=#8600ff /></g>
</g></g>
<circle cx="835" cy="700" r="200" fill="url(#glow)" clip-path="url(#ch)"/>
<defs><filter id="sh" x="-50%" y="-50%" width="200%" height="200%"><feGaussianBlur stdDeviation="1.5"/></filter></defs>
<g clip-path="url(#cc)">
<polygon points="331.7,292.0 371.7,292.0 470.0,306.7 545.0,324.5 587.5,337.2 679.2,365.8 790.0,405.5 972.5,472.5 1110.0,525.0 1179.2,550.8 1225.0,568.3 1320.8,605.3 1430.0,648.3 1500.0,674.2 1650.0,732.5 1700.8,753.0 1500.0,788.4 620.0,944.2 550.0,956.2 510.0,964.6 498.3,965.8 488.3,963.7 476.7,959.2 456.7,947.5 426.7,925.8 393.3,896.3 375.0,879.2 316.7,815.0 274.2,760.0 255.8,733.3 241.7,709.2 210.0,651.7 195.8,620.0 181.7,570.0 174.2,533.3 170.8,495.0 170.3,440.0 170.8,418.3 178.3,381.7 190.8,352.5 215.0,326.7 240.0,313.3 270.0,302.5 301.7,295.8" fill="none" stroke="#ffa600" stroke-width="2" stroke-linejoin="round"/>
<line x1="362.0" y1="291.0" x2="402.0" y2="258.0" stroke="#b8b8c8" stroke-width="1" /><text x="403.0" y="266.5" font-family="Liberation Serif, serif" font-size="16.8" fill="#ececec" textLength="83" lengthAdjust="spacingAndGlyphs">520 nm</text>
<line x1="679.0" y1="366.0" x2="720.0" y2="333.0" stroke="#b8b8c8" stroke-width="1" /><text x="722.0" y="340.5" font-family="Liberation Serif, serif" font-size="16.8" fill="#ececec" textLength="83" lengthAdjust="spacingAndGlyphs">540 nm</text>
<line x1="972.5" y1="472.5" x2="1013.0" y2="440.0" stroke="#b8b8c8" stroke-width="1" /><text x="1014.0" y="447.5" font-family="Liberation Serif, serif" font-size="16.8" fill="#ececec" textLength="83" lengthAdjust="spacingAndGlyphs">560 nm</text>
<line x1="1179.0" y1="551.0" x2="1219.0" y2="518.0" stroke="#b8b8c8" stroke-width="1" /><text x="1220.0" y="525.5" font-family="Liberation Serif, serif" font-size="16.8" fill="#ececec" textLength="83" lengthAdjust="spacingAndGlyphs">580 nm</text>
<line x1="1321.0" y1="605.0" x2="1361.0" y2="573.0" stroke="#b8b8c8" stroke-width="1" /><text x="1362.0" y="580.5" font-family="Liberation Serif, serif" font-size="16.8" fill="#ececec" textLength="83" lengthAdjust="spacingAndGlyphs">600 nm</text>
<line x1="1454.0" y1="658.0" x2="1495.0" y2="625.0" stroke="#b8b8c8" stroke-width="1" /><text x="1496.0" y="632.5" font-family="Liberation Serif, serif" font-size="16.8" fill="#ececec" textLength="83" lengthAdjust="spacingAndGlyphs">620 nm</text>
<line x1="1606.0" y1="708.0" x2="1640.0" y2="680.0" stroke="#b8b8c8" stroke-width="1" /><text x="1641.0" y="687.5" font-family="Liberation Serif, serif" font-size="16.8" fill="#ececec" textLength="83" lengthAdjust="spacingAndGlyphs">640 nm</text>
<line x1="1663.0" y1="737.0" x2="1703.0" y2="705.0" stroke="#b8b8c8" stroke-width="1" /><text x="1705.0" y="712.5" font-family="Liberation Serif, serif" font-size="16.8" fill="#ececec" textLength="83" lengthAdjust="spacingAndGlyphs">660 nm</text>
<line x1="1689.0" y1="748.0" x2="1729.0" y2="716.0" stroke="#b8b8c8" stroke-width="1" /><text x="1730.0" y="722.5" font-family="Liberation Serif, serif" font-size="16.8" fill="#ececec" textLength="83" lengthAdjust="spacingAndGlyphs">680 nm</text>
<line x1="171.0" y1="495.0" x2="132.0" y2="503.0" stroke="#b8b8c8" stroke-width="1" /><text x="62.0" y="518.5" font-family="Liberation Serif, serif" font-size="16.8" fill="#ececec" textLength="83" lengthAdjust="spacingAndGlyphs">500 nm</text>
<line x1="330.0" y1="836.0" x2="292.0" y2="843.0" stroke="#b8b8c8" stroke-width="1" /><text x="223.0" y="857.5" font-family="Liberation Serif, serif" font-size="16.8" fill="#ececec" textLength="83" lengthAdjust="spacingAndGlyphs">480 nm</text>
<line x1="427.0" y1="926.0" x2="387.0" y2="934.0" stroke="#b8b8c8" stroke-width="1" /><text x="317.0" y="948.5" font-family="Liberation Serif, serif" font-size="16.8" fill="#ececec" textLength="83" lengthAdjust="spacingAndGlyphs">460 nm</text>
<line x1="456.0" y1="948.0" x2="417.0" y2="956.0" stroke="#b8b8c8" stroke-width="1" /><text x="347.0" y="970.5" font-family="Liberation Serif, serif" font-size="16.8" fill="#ececec" textLength="83" lengthAdjust="spacingAndGlyphs">440 nm</text>
<line x1="476.0" y1="959.0" x2="438.0" y2="966.0" stroke="#b8b8c8" stroke-width="1" /><text x="368.0" y="981.5" font-family="Liberation Serif, serif" font-size="16.8" fill="#ececec" textLength="83" lengthAdjust="spacingAndGlyphs">420 nm</text>
<text x="6" y="890.5" font-family="Liberation Serif, serif" font-size="20" fill="#fff">0.1</text>
<text x="6" y="808.8" font-family="Liberation Serif, serif" font-size="20" fill="#fff">0.2</text>
<text x="6" y="727.1" font-family="Liberation Serif, serif" font-size="20" fill="#fff">0.3</text>
<text x="6" y="645.4" font-family="Liberation Serif, serif" font-size="20" fill="#fff">0.4</text>
<text x="6" y="563.7" font-family="Liberation Serif, serif" font-size="20" fill="#fff">0.5</text>
<text x="6" y="481.9" font-family="Liberation Serif, serif" font-size="20" fill="#fff">0.6</text>
<text x="6" y="400.2" font-family="Liberation Serif, serif" font-size="20" fill="#fff">0.7</text>
<text x="6" y="318.5" font-family="Liberation Serif, serif" font-size="20" fill="#fff">0.8</text>
<text x="378.0" y="1013.5" font-family="Liberation Serif, serif" font-size="20" fill="#fff">0.1</text>
<text x="590.5" y="1013.5" font-family="Liberation Serif, serif" font-size="20" fill="#fff">0.2</text>
<text x="803.1" y="1013.5" font-family="Liberation Serif, serif" font-size="20" fill="#fff">0.3</text>
<text x="1015.6" y="1013.5" font-family="Liberation Serif, serif" font-size="20" fill="#fff">0.4</text>
<text x="1228.2" y="1013.5" font-family="Liberation Serif, serif" font-size="20" fill="#fff">0.5</text>
<text x="1440.8" y="1013.5" font-family="Liberation Serif, serif" font-size="20" fill="#fff">0.6</text>
<text x="1653.3" y="1013.5" font-family="Liberation Serif, serif" font-size="20" fill="#fff">0.7</text>
<text x="1670" y="927" font-family="Liberation Sans, sans-serif" font-weight="bold" font-size="23.5" fill="#3b3e40" textLength="232" lengthAdjust="spacingAndGlyphs">hcfr.sourceforge.net</text>
<g clip-path="url(#cl)" stroke="#d8ccd2" stroke-width="1.6" stroke-opacity=".75" stroke-dasharray="5.7 3.47"><line x1="827.5" y1="212" x2="827.5" y2="1019"/><line x1="10" y1="709.5" x2="1906" y2="709.5"/></g>
<line x1="732.7" y1="418.6" x2="661.6" y2="565.5" stroke="#008000" stroke-width="4.5" /><line x1="661.6" y1="565.5" x2="593.3" y2="706.7" stroke="#008080" stroke-width="4.5" />
<line x1="593.3" y1="706.7" x2="537.7" y2="820.4" stroke="#008080" stroke-width="4.5" /><line x1="537.7" y1="820.4" x2="484.2" y2="929.6" stroke="#000080" stroke-width="4.5" />
<line x1="484.2" y1="929.6" x2="655.6" y2="896.9" stroke="#000080" stroke-width="4.5" /><line x1="655.6" y1="896.9" x2="882.8" y2="853.6" stroke="#800080" stroke-width="4.5" />
<line x1="882.8" y1="853.6" x2="1099.6" y2="813.0" stroke="#800080" stroke-width="4.5" /><line x1="1099.6" y1="813.0" x2="1605.5" y2="718.3" stroke="#800000" stroke-width="4.5" />
<line x1="732.7" y1="418.6" x2="946.0" y2="491.2" stroke="#008000" stroke-width="4.5" /><line x1="946.0" y1="491.2" x2="1094.2" y2="541.7" stroke="#808000" stroke-width="4.5" />
<line x1="1094.2" y1="541.7" x2="1283.4" y2="607.0" stroke="#808000" stroke-width="4.5" /><line x1="1283.4" y1="607.0" x2="1605.5" y2="718.3" stroke="#800000" stroke-width="4.5" />
<polygon points="1567.0,708.5 1051.3,532.5 832.5,450.8 652.0,708.0 499.2,926.7 865.5,861.9" fill="none" stroke="#fff" stroke-width="4" stroke-linejoin="round"/>
<line x1="832.5" y1="450.8" x2="865.5" y2="861.9" stroke="#3a3a3a" stroke-width="1.15" stroke-dasharray="6 6"/>
<line x1="1567.0" y1="709.5" x2="652.0" y2="709.5" stroke="#3a3a3a" stroke-width="1.15" stroke-dasharray="6 6"/>
<line x1="499.2" y1="926.7" x2="1051.3" y2="532.5" stroke="#3a3a3a" stroke-width="1.15" stroke-dasharray="6 6"/>
<path d="M690.8 778.1C697.3 774.8 716.6 764.8 730.0 758.0C743.4 751.2 755.7 744.5 771.0 737.1C786.3 729.7 805.0 720.2 822.0 713.5C839.0 706.8 859.2 700.9 872.7 696.9C886.2 692.9 885.8 694.8 902.9 689.5C920.0 684.2 952.4 671.6 975.2 665.2C998.1 658.8 1020.0 654.5 1040.0 651.0C1060.0 647.5 1077.8 646.5 1095.0 644.4C1112.2 642.3 1131.7 639.6 1142.9 638.5C1154.1 637.4 1159.1 637.8 1162.3 637.7" fill="none" stroke="#111" stroke-width="1.7"/>
<circle cx="772.5" cy="739.1" r="4.2" fill="#000" fill-opacity=".4" filter="url(#sh)"/><circle cx="771.0" cy="737.1" r="4.2" fill="#fff" stroke="#222" stroke-opacity=".9" stroke-width="1.3"/>
<circle cx="874.2" cy="698.9" r="4.2" fill="#000" fill-opacity=".4" filter="url(#sh)"/><circle cx="872.7" cy="696.9" r="4.2" fill="#fff" stroke="#222" stroke-opacity=".9" stroke-width="1.3"/>
<circle cx="976.7" cy="667.2" r="4.2" fill="#000" fill-opacity=".4" filter="url(#sh)"/><circle cx="975.2" cy="665.2" r="4.2" fill="#fff" stroke="#222" stroke-opacity=".9" stroke-width="1.3"/>
<circle cx="1096.5" cy="646.4" r="4.2" fill="#000" fill-opacity=".4" filter="url(#sh)"/><circle cx="1095.0" cy="644.4" r="4.2" fill="#fff" stroke="#222" stroke-opacity=".9" stroke-width="1.3"/>
<circle cx="1144.4" cy="640.5" r="4.2" fill="#000" fill-opacity=".4" filter="url(#sh)"/><circle cx="1142.9" cy="638.5" r="4.2" fill="#fff" stroke="#222" stroke-opacity=".9" stroke-width="1.3"/>
<circle cx="904.4" cy="692.8" r="4.2" fill="#000" fill-opacity=".4" filter="url(#sh)"/><circle cx="902.9" cy="690.8" r="4.2" fill="#00e000" stroke="#222" stroke-opacity=".9" stroke-width="1.3"/>
<circle cx="1114.4" cy="647.8" r="4.2" fill="#000" fill-opacity=".4" filter="url(#sh)"/><circle cx="1112.9" cy="645.8" r="4.2" fill="#00e000" stroke="#222" stroke-opacity=".9" stroke-width="1.3"/>
<text x="778.0" y="707.5" font-family="Liberation Serif, serif" font-size="20" fill="#1a1a1a" textLength="36" lengthAdjust="spacingAndGlyphs">D65</text>
<text x="829.5" y="687.0" font-family="Liberation Serif, serif" font-size="20" fill="#1a1a1a" textLength="40" lengthAdjust="spacingAndGlyphs">5500</text>
<text x="727.5" y="728.5" font-family="Liberation Serif, serif" font-size="20" fill="#1a1a1a" textLength="40" lengthAdjust="spacingAndGlyphs">9300</text>
<text x="828.0" y="742.0" font-family="Liberation Serif, serif" font-size="20" fill="#1a1a1a" textLength="11" lengthAdjust="spacingAndGlyphs">C</text>
<text x="931.0" y="656.5" font-family="Liberation Serif, serif" font-size="20" fill="#1a1a1a" textLength="41" lengthAdjust="spacingAndGlyphs">4000</text>
<text x="1057.0" y="635.0" font-family="Liberation Serif, serif" font-size="20" fill="#1a1a1a" textLength="41" lengthAdjust="spacingAndGlyphs">3000</text>
<text x="1140.5" y="629.0" font-family="Liberation Serif, serif" font-size="20" fill="#1a1a1a" textLength="41" lengthAdjust="spacingAndGlyphs">2700</text>
<text x="1110.0" y="670.0" font-family="Liberation Serif, serif" font-size="20" fill="#1a1a1a" textLength="13" lengthAdjust="spacingAndGlyphs">A</text>
<text x="910.0" y="714.5" font-family="Liberation Serif, serif" font-size="20" fill="#1a1a1a" textLength="12" lengthAdjust="spacingAndGlyphs">B</text>
<path d="M772.0 503.5h-22M771.5 504.0v-22M750.5 504.0v-11" stroke="#e0284a" stroke-width="1.2" fill="none"/><path d="M750.0 482.5h21M750.5 482.0v11" stroke="#06246a" stroke-width="1.2" fill="none"/><path d="M751 483h20v20h-20zM754 486v14h14v-14z" fill="#3cff00" fill-rule="evenodd"/>
<path d="M787.0 574.5h-22M786.5 575.0v-22M765.5 575.0v-11" stroke="#e0284a" stroke-width="1.2" fill="none"/><path d="M765.0 553.5h21M765.5 553.0v11" stroke="#06246a" stroke-width="1.2" fill="none"/><path d="M766 554h20v20h-20zM769 557v14h14v-14z" fill="#30ff00" fill-rule="evenodd"/>
<path d="M820.0 647.5h-22M819.5 648.0v-22M798.5 648.0v-11" stroke="#e0284a" stroke-width="1.2" fill="none"/><path d="M798.0 626.5h21M798.5 626.0v11" stroke="#06246a" stroke-width="1.2" fill="none"/><path d="M799 627h20v20h-20zM802 630v14h14v-14z" fill="#30ff00" fill-rule="evenodd"/>
<path d="M661.0 718.5h-22M660.5 719.0v-22M639.5 719.0v-11" stroke="#e0284a" stroke-width="1.2" fill="none"/><path d="M639.0 697.5h21M639.5 697.0v11" stroke="#06246a" stroke-width="1.2" fill="none"/><path d="M640 698h20v20h-20zM643 701v14h14v-14z" fill="#40ffff" fill-rule="evenodd"/>
<path d="M730.0 716.5h-22M729.5 717.0v-22M708.5 717.0v-11" stroke="#e0284a" stroke-width="1.2" fill="none"/><path d="M708.0 695.5h21M708.5 695.0v11" stroke="#06246a" stroke-width="1.2" fill="none"/><path d="M709 696h20v20h-20zM712 699v14h14v-14z" fill="#40ffff" fill-rule="evenodd"/>
<path d="M778.0 718.5h-22M777.5 719.0v-22M756.5 719.0v-11" stroke="#e0284a" stroke-width="1.2" fill="none"/><path d="M756.0 697.5h21M756.5 697.0v11" stroke="#06246a" stroke-width="1.2" fill="none"/><path d="M757 698h20v20h-20zM760 701v14h14v-14z" fill="#40ffff" fill-rule="evenodd"/>
<path d="M751.0 772.5h-22M750.5 773.0v-22M729.5 773.0v-11" stroke="#e0284a" stroke-width="1.2" fill="none"/><path d="M729.0 751.5h21M729.5 751.0v11" stroke="#06246a" stroke-width="1.2" fill="none"/><path d="M730 752h20v20h-20zM733 755v14h14v-14z" fill="#4000ff" fill-rule="evenodd"/>
<path d="M668.0 831.5h-22M667.5 832.0v-22M646.5 832.0v-11" stroke="#e0284a" stroke-width="1.2" fill="none"/><path d="M646.0 810.5h21M646.5 810.0v11" stroke="#06246a" stroke-width="1.2" fill="none"/><path d="M647 811h20v20h-20zM650 814v14h14v-14z" fill="#4020ff" fill-rule="evenodd"/>
<path d="M576.0 886.5h-22M575.5 887.0v-22M554.5 887.0v-11" stroke="#e0284a" stroke-width="1.2" fill="none"/><path d="M554.0 865.5h21M554.5 865.0v11" stroke="#06246a" stroke-width="1.2" fill="none"/><path d="M555 866h20v20h-20zM558 869v14h14v-14z" fill="#3820ff" fill-rule="evenodd"/>
<path d="M844.0 759.5h-22M843.5 760.0v-22M822.5 760.0v-11" stroke="#e0284a" stroke-width="1.2" fill="none"/><path d="M822.0 738.5h21M822.5 738.0v11" stroke="#06246a" stroke-width="1.2" fill="none"/><path d="M823 739h20v20h-20zM826 742v14h14v-14z" fill="#ff00e0" fill-rule="evenodd"/>
<path d="M868.0 792.5h-22M867.5 793.0v-22M846.5 793.0v-11" stroke="#e0284a" stroke-width="1.2" fill="none"/><path d="M846.0 771.5h21M846.5 771.0v11" stroke="#06246a" stroke-width="1.2" fill="none"/><path d="M847 772h20v20h-20zM850 775v14h14v-14z" fill="#ff10e0" fill-rule="evenodd"/>
<path d="M882.0 829.5h-22M881.5 830.0v-22M860.5 830.0v-11" stroke="#e0284a" stroke-width="1.2" fill="none"/><path d="M860.0 808.5h21M860.5 808.0v11" stroke="#06246a" stroke-width="1.2" fill="none"/><path d="M861 809h20v20h-20zM864 812v14h14v-14z" fill="#ff20d8" fill-rule="evenodd"/>
<path d="M895.0 680.5h-22M894.5 681.0v-22M873.5 681.0v-11" stroke="#e0284a" stroke-width="1.2" fill="none"/><path d="M873.0 659.5h21M873.5 659.0v11" stroke="#06246a" stroke-width="1.2" fill="none"/><path d="M874 660h20v20h-20zM877 663v14h14v-14z" fill="#ffd800" fill-rule="evenodd"/>
<path d="M969.0 641.5h-22M968.5 642.0v-22M947.5 642.0v-11" stroke="#e0284a" stroke-width="1.2" fill="none"/><path d="M947.0 620.5h21M947.5 620.0v11" stroke="#06246a" stroke-width="1.2" fill="none"/><path d="M948 621h20v20h-20zM951 624v14h14v-14z" fill="#ffd800" fill-rule="evenodd"/>
<path d="M1042.0 598.5h-22M1041.5 599.0v-22M1020.5 599.0v-11" stroke="#e0284a" stroke-width="1.2" fill="none"/><path d="M1020.0 577.5h21M1020.5 577.0v11" stroke="#06246a" stroke-width="1.2" fill="none"/><path d="M1021 578h20v20h-20zM1024 581v14h14v-14z" fill="#ffd400" fill-rule="evenodd"/>
<path d="M1029.0 718.5h-22M1028.5 719.0v-22M1007.5 719.0v-11" stroke="#e0284a" stroke-width="1.2" fill="none"/><path d="M1007.0 697.5h21M1007.5 697.0v11" stroke="#06246a" stroke-width="1.2" fill="none"/><path d="M1008 698h20v20h-20zM1011 701v14h14v-14z" fill="#ff0000" fill-rule="evenodd"/>
<path d="M1237.0 725.5h-22M1236.5 726.0v-22M1215.5 726.0v-11" stroke="#e0284a" stroke-width="1.2" fill="none"/><path d="M1215.0 704.5h21M1215.5 704.0v11" stroke="#06246a" stroke-width="1.2" fill="none"/><path d="M1216 705h20v20h-20zM1219 708v14h14v-14z" fill="#ff0000" fill-rule="evenodd"/>
<path d="M1426.0 727.5h-22M1425.5 728.0v-22M1404.5 728.0v-11" stroke="#e0284a" stroke-width="1.2" fill="none"/><path d="M1404.0 706.5h21M1404.5 706.0v11" stroke="#06246a" stroke-width="1.2" fill="none"/><path d="M1405 707h20v20h-20zM1408 710v14h14v-14z" fill="#ff0000" fill-rule="evenodd"/>
<circle cx="650.5" cy="712" r="1.2" fill="#c00000"/>
<path d="M744.0 429.5h-22M743.5 430.0v-22M722.5 430.0v-11" stroke="#e0284a" stroke-width="1.2" fill="none"/><path d="M722.0 408.5h21M722.5 408.0v11" stroke="#06246a" stroke-width="1.2" fill="none"/><rect x="723" y="409" width="20" height="20" fill="#50ff00"/><rect x="726" y="412" width="13" height="13" rx="1.5" fill="#164700"/><path d="M727.0 415.5q0 -2.500 2.500 -2.500h6q4 1 1 7q-3 5 -6 5q-3.500 -1 -3.500 -5z" fill="#9fff73" fill-opacity=".9"/><path d="M727.9 417.4h7.400M731.6 413.7v7.400" stroke="#000" stroke-width="1.4" fill="none"/>
<path d="M604.0 717.5h-22M603.5 718.0v-22M582.5 718.0v-11" stroke="#e0284a" stroke-width="1.2" fill="none"/><path d="M582.0 696.5h21M582.5 696.0v11" stroke="#06246a" stroke-width="1.2" fill="none"/><rect x="583" y="697" width="20" height="20" fill="#40ffff"/><rect x="586" y="700" width="13" height="13" rx="1.5" fill="#124747"/><path d="M587.0 703.5q0 -2.500 2.500 -2.500h6q4 1 1 7q-3 5 -6 5q-3.500 -1 -3.500 -5z" fill="#96ffff" fill-opacity=".9"/><path d="M587.9 705.4h7.400M591.6 701.7v7.400" stroke="#000" stroke-width="1.4" fill="none"/>
<path d="M495.0 940.5h-22M494.5 941.0v-22M473.5 941.0v-11" stroke="#e0284a" stroke-width="1.2" fill="none"/><path d="M473.0 919.5h21M473.5 919.0v11" stroke="#06246a" stroke-width="1.2" fill="none"/><rect x="474" y="920" width="20" height="20" fill="#4010ff"/><rect x="477" y="923" width="13" height="13" rx="1.5" fill="#120447"/><path d="M478.0 926.5q0 -2.500 2.500 -2.500h6q4 1 1 7q-3 5 -6 5q-3.500 -1 -3.500 -5z" fill="#967cff" fill-opacity=".9"/><path d="M478.9 928.4h7.400M482.6 924.7v7.400" stroke="#fff" stroke-width="1.4" fill="none"/>
<path d="M894.0 864.5h-22M893.5 865.0v-22M872.5 865.0v-11" stroke="#e0284a" stroke-width="1.2" fill="none"/><path d="M872.0 843.5h21M872.5 843.0v11" stroke="#06246a" stroke-width="1.2" fill="none"/><rect x="873" y="844" width="20" height="20" fill="#ff20e8"/><rect x="876" y="847" width="13" height="13" rx="1.5" fill="#470941"/><path d="M877.0 850.5q0 -2.500 2.500 -2.500h6q4 1 1 7q-3 5 -6 5q-3.500 -1 -3.500 -5z" fill="#ff84f2" fill-opacity=".9"/><path d="M877.9 852.4h7.400M881.6 848.7v7.400" stroke="#000" stroke-width="1.4" fill="none"/>
<path d="M1105.0 552.5h-22M1104.5 553.0v-22M1083.5 553.0v-11" stroke="#e0284a" stroke-width="1.2" fill="none"/><path d="M1083.0 531.5h21M1083.5 531.0v11" stroke="#06246a" stroke-width="1.2" fill="none"/><rect x="1084" y="532" width="20" height="20" fill="#ffd800"/><rect x="1087" y="535" width="13" height="13" rx="1.5" fill="#473c00"/><path d="M1088.0 538.5q0 -2.500 2.500 -2.500h6q4 1 1 7q-3 5 -6 5q-3.500 -1 -3.500 -5z" fill="#ffea73" fill-opacity=".9"/><path d="M1088.9 540.4h7.400M1092.6 536.7v7.400" stroke="#000" stroke-width="1.4" fill="none"/>
<path d="M1616.0 728.5h-22M1615.5 729.0v-22M1594.5 729.0v-11" stroke="#e0284a" stroke-width="1.2" fill="none"/><path d="M1594.0 707.5h21M1594.5 707.0v11" stroke="#06246a" stroke-width="1.2" fill="none"/><rect x="1595" y="708" width="20" height="20" fill="#ff0000"/><rect x="1598" y="711" width="13" height="13" rx="1.5" fill="#470000"/><path d="M1599.0 714.5q0 -2.500 2.500 -2.500h6q4 1 1 7q-3 5 -6 5q-3.500 -1 -3.500 -5z" fill="#ff7373" fill-opacity=".9"/><path d="M1599.9 716.4h7.400M1603.6 712.7v7.400" stroke="#fff" stroke-width="1.4" fill="none"/>
<circle cx="551.7" cy="698.3" r="7.5" fill="#000" fill-opacity=".4" filter="url(#sh)"/><circle cx="550.2" cy="696.3" r="7.5" fill="#c4ccf4" stroke="#222" stroke-opacity=".9" stroke-width="1.3"/>
<circle cx="887.5" cy="654.5" r="7.5" fill="#000" fill-opacity=".4" filter="url(#sh)"/><circle cx="886.0" cy="652.5" r="7.5" fill="#c4ccf4" stroke="#222" stroke-opacity=".9" stroke-width="1.3"/>
<circle cx="1088.8" cy="727.0" r="7.5" fill="#000" fill-opacity=".4" filter="url(#sh)"/><circle cx="1087.3" cy="725.0" r="7.5" fill="#c4ccf4" stroke="#222" stroke-opacity=".9" stroke-width="1.3"/>
<circle cx="536.5" cy="976.2" r="7.5" fill="#000" fill-opacity=".4" filter="url(#sh)"/><circle cx="535.0" cy="974.2" r="7.5" fill="#c4ccf4" stroke="#222" stroke-opacity=".9" stroke-width="1.3"/>
<circle cx="1545.2" cy="716.2" r="7.5" fill="#000" fill-opacity=".4" filter="url(#sh)"/><circle cx="1543.7" cy="714.2" r="7.5" fill="#c4ccf4" stroke="#222" stroke-opacity=".9" stroke-width="1.3"/>
<circle cx="1565.5" cy="710.3" r="7.5" fill="#000" fill-opacity=".4" filter="url(#sh)"/><circle cx="1564.0" cy="708.3" r="7.5" fill="#c4ccf4" stroke="#222" stroke-opacity=".9" stroke-width="1.3"/>
<circle cx="1571.5" cy="710.0" r="7.5" fill="#000" fill-opacity=".4" filter="url(#sh)"/><circle cx="1570.0" cy="708.0" r="7.5" fill="#c4ccf4" stroke="#222" stroke-opacity=".9" stroke-width="1.3"/>
<circle cx="834.0" cy="452.8" r="8.5" fill="#000" fill-opacity=".4" filter="url(#sh)"/><radialGradient id="bg832_450" cx=".45" cy=".45" r=".6"><stop offset="0" stop-color="#40e840"/><stop offset=".6" stop-color="#00e000"/><stop offset="1" stop-color="#006500"/></radialGradient><circle cx="832.5" cy="450.8" r="8.5" fill="url(#bg832_450)"/><circle cx="832.5" cy="450.8" r="1" fill="#111"/>
<circle cx="1052.8" cy="534.5" r="8.5" fill="#000" fill-opacity=".4" filter="url(#sh)"/><radialGradient id="bg1051_532" cx=".45" cy=".45" r=".6"><stop offset="0" stop-color="#f8f8ac"/><stop offset=".6" stop-color="#f6f690"/><stop offset="1" stop-color="#6f6f41"/></radialGradient><circle cx="1051.3" cy="532.5" r="8.5" fill="url(#bg1051_532)"/><circle cx="1051.3" cy="532.5" r="1" fill="#111"/>
<circle cx="867.0" cy="863.9" r="8.5" fill="#000" fill-opacity=".4" filter="url(#sh)"/><radialGradient id="bg865_861" cx=".45" cy=".45" r=".6"><stop offset="0" stop-color="#ee40ee"/><stop offset=".6" stop-color="#e800e8"/><stop offset="1" stop-color="#680068"/></radialGradient><circle cx="865.5" cy="861.9" r="8.5" fill="url(#bg865_861)"/><circle cx="865.5" cy="861.9" r="1" fill="#111"/>
<circle cx="500.7" cy="928.7" r="8.0" fill="#000" fill-opacity=".4" filter="url(#sh)"/><radialGradient id="bg499_926" cx=".45" cy=".45" r=".6"><stop offset="0" stop-color="#6767f4"/><stop offset=".6" stop-color="#3434f0"/><stop offset="1" stop-color="#17176c"/></radialGradient><circle cx="499.2" cy="926.7" r="8.0" fill="url(#bg499_926)"/>
<circle cx="812.2" cy="729.5" r="7.0" fill="#000" fill-opacity=".4" filter="url(#sh)"/><circle cx="810.7" cy="727.5" r="7.0" fill="#f2f2f2" stroke="#000" stroke-opacity=".9" stroke-width="1.3"/>
<circle cx="816.5" cy="724.0" r="7.0" fill="#000" fill-opacity=".4" filter="url(#sh)"/><circle cx="815.0" cy="722.0" r="7.0" fill="#f2f2f2" stroke="#000" stroke-opacity=".9" stroke-width="1.3"/>
<circle cx="820.5" cy="719.5" r="7.0" fill="#000" fill-opacity=".4" filter="url(#sh)"/><circle cx="819.0" cy="717.5" r="7.0" fill="#f2f2f2" stroke="#000" stroke-opacity=".9" stroke-width="1.3"/>
<circle cx="832.5" cy="710.5" r="7.0" fill="#000" fill-opacity=".4" filter="url(#sh)"/><circle cx="831.0" cy="708.5" r="7.0" fill="#f2f2f2" stroke="#000" stroke-opacity=".9" stroke-width="1.3"/>
<circle cx="829.0" cy="712.0" r="7.0" fill="#000" fill-opacity=".4" filter="url(#sh)"/><circle cx="827.5" cy="710.0" r="7.0" fill="#f2f2f2" stroke="#000" stroke-opacity=".9" stroke-width="1.3"/>
<circle cx="825.5" cy="714.0" r="7.0" fill="#000" fill-opacity=".4" filter="url(#sh)"/><circle cx="824.0" cy="712.0" r="7.0" fill="#f2f2f2" stroke="#000" stroke-opacity=".9" stroke-width="1.3"/>
<circle cx="821.5" cy="715.5" r="7.0" fill="#000" fill-opacity=".4" filter="url(#sh)"/><circle cx="820.0" cy="713.5" r="7.0" fill="#f0e800" stroke="#333" stroke-opacity=".9" stroke-width="1.3"/>
</g>
</svg>
</div></body></html>
